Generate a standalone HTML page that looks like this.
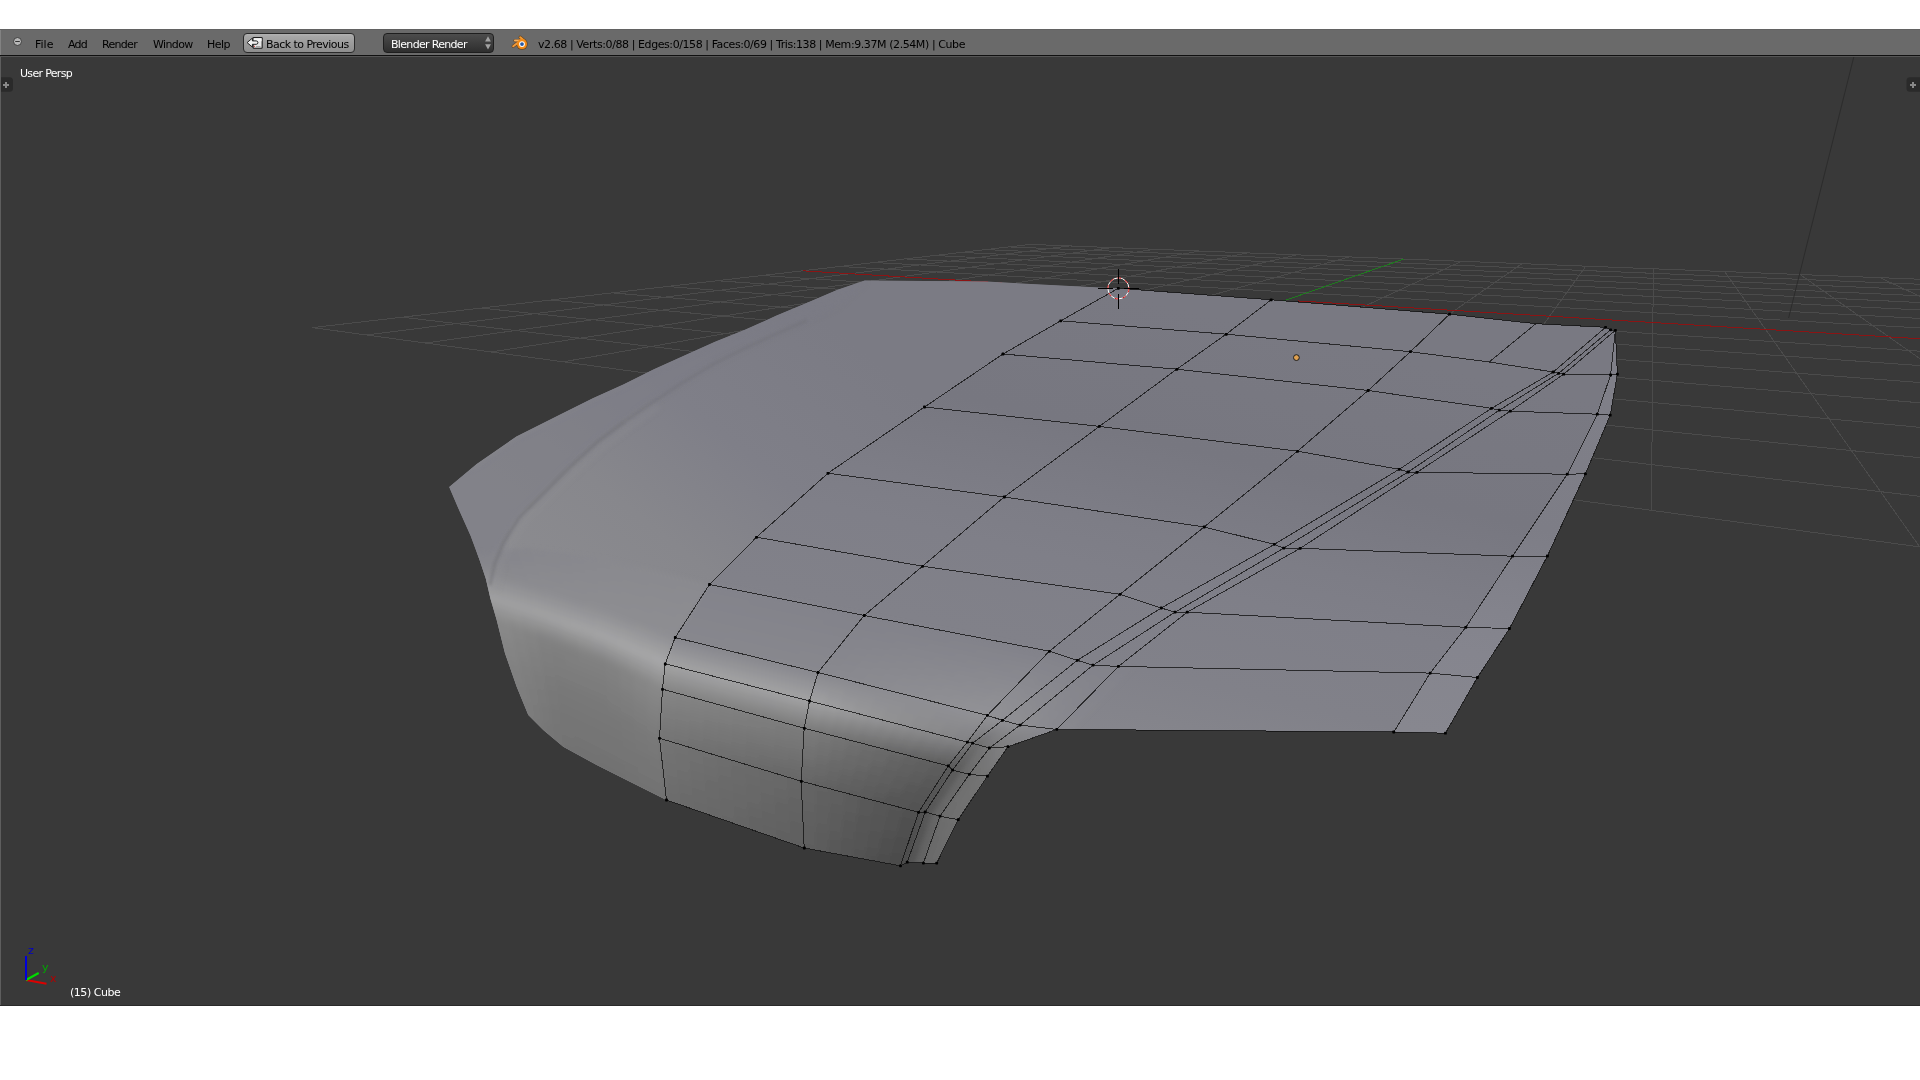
<!DOCTYPE html>
<html><head><meta charset="utf-8"><title>Blender</title>
<style>
html,body{margin:0;padding:0;background:#fff;}
body{width:1920px;height:1080px;position:relative;overflow:hidden;font-family:"DejaVu Sans","Liberation Sans",sans-serif;font-size:11px;}
#hdr{position:absolute;left:0;top:29px;width:1920px;height:26px;background:#6a6a6a;border-bottom:1px solid #101010;box-sizing:content-box}
#hdr .t{position:absolute;top:8.6px;will-change:transform;line-height:13px;color:#000;white-space:nowrap}
span.v{position:absolute;line-height:13px;color:#fff;white-space:nowrap;will-change:transform}
#hdr .btn{position:absolute;top:4px;height:17.5px;border:1px solid #2a2a2a;border-radius:4px;box-sizing:content-box}
</style></head><body>
<div id="hdr">
<div style="position:absolute;left:0;top:0;width:1px;height:26px;background:#828282"></div>
<svg width="16" height="16" style="position:absolute;left:10px;top:5px" viewBox="0 0 16 16"><circle cx="7.5" cy="7.5" r="4" fill="#b6b6b6" stroke="#3e3e3e" stroke-width="1"/><rect x="5.2" y="7" width="4.6" height="1" fill="#333"/></svg>
<div style="position:absolute;left:0;top:0;width:1920px;height:1px;background:#626262"></div>
<span class="t" style="left:35px">File</span>
<span class="t" style="left:68px;letter-spacing:-0.767px">Add</span>
<span class="t" style="left:102px;letter-spacing:-0.7px">Render</span>
<span class="t" style="left:153px;letter-spacing:-0.617px">Window</span>
<span class="t" style="left:207px;letter-spacing:-0.525px">Help</span>
<div class="btn" style="left:243px;width:110px;background:linear-gradient(#b2b2b2,#a6a6a6 15%,#8e8e8e)"></div>
<svg width="40" height="24" style="position:absolute;left:240px;top:2px" viewBox="0 0 40 24"><rect x="12.6" y="6.1" width="10.1" height="11.7" rx="1.2" fill="#1e1e1e"/><rect x="13.7" y="7.2" width="7.9" height="9.5" fill="#e6e6e6"/><rect x="13.7" y="7.2" width="7.9" height="3" fill="#f4f4f4"/><path d="M7.1 11.6 L12.4 7.1 V9.9 H16.2 A1.7 1.7 0 0 1 16.2 13.3 H12.4 V16.1 Z" fill="#f2f2f2" stroke="#1e1e1e" stroke-width="1" stroke-linejoin="round"/><rect x="13.9" y="14.8" width="1.1" height="1.1" fill="#e04040"/><rect x="16" y="15" width="4.5" height="0.8" fill="#9a9a9a"/></svg>
<span class="t" style="left:266px;letter-spacing:-0.537px">Back to Previous</span>
<div class="btn" style="left:383px;width:109px;background:linear-gradient(#4c4c4c,#2e2e2e);border-color:#1e1e1e"></div>
<span class="t" style="left:391px;color:#fff;letter-spacing:-0.679px">Blender Render</span>
<svg width="8" height="16" style="position:absolute;left:483.7px;top:6px" viewBox="0 0 8 16"><path d="M4 1.2l2.9 5.4h-5.8zM4 14.6l2.9-5.3h-5.8z" fill="#a2a2a2"/></svg>
<svg width="40" height="24" style="position:absolute;left:505px;top:2px" viewBox="0 0 40 24"><g stroke="#6a3a08" stroke-opacity="0.75" stroke-linecap="round" fill="none"><path d="M15.2 6.3L19.4 9.8" stroke-width="3.3"/><path d="M9.9 9.5H16.5" stroke-width="3"/><path d="M8.2 15.2L13.4 11.4" stroke-width="3.2"/></g><circle cx="17" cy="13.1" r="5.7" fill="#6a3a08" fill-opacity="0.75"/><g stroke-linecap="round" fill="none"><path d="M15.2 6.3L19.4 9.8" stroke="#f39a32" stroke-width="2"/><path d="M9.9 9.5H16.5" stroke="#f7b263" stroke-width="1.8"/><path d="M8.2 15.2L13.4 11.4" stroke="#f09a3c" stroke-width="2"/></g><circle cx="17" cy="13.1" r="5" fill="#f28a17"/><circle cx="17" cy="13.1" r="2.9" fill="#fff"/><circle cx="17" cy="13.1" r="1.9" fill="#2858a2"/></svg>
<span class="t" style="left:538px;letter-spacing:-0.418px">v2.68 | Verts:0/88 | Edges:0/158 | Faces:0/69 | Tris:138 | Mem:9.37M (2.54M) | Cube</span>
</div>
<svg width="1920" height="1080" viewBox="0 0 1920 1080" style="position:absolute;left:0;top:0">
<defs>
<clipPath id="vp"><rect x="1" y="57" width="1919" height="948"/></clipPath>
<clipPath id="sil"><path d="M1118.3 288.3 L1271.2 299.8 L1449.6 314.2 L1535.8 323.7 L1605.6 327.3 L1610.6 329.9 L1615.4 330.3 L1617.4 374.2 L1610.2 415.2 L1585.4 473.8 L1547.4 556.0 L1509.5 628.5 L1477.4 677.5 L1445.4 733.2 L1393.8 732.0 L1056.8 729.4 L1008.0 746.7 L987.4 776.2 L958.2 819.7 L936.7 863.1 L923.4 863.1 L907.2 862.2 L900.5 865.8 L804.2 848.0 L666.5 800.0 L630.0 781.7 L596.7 765.0 L563.3 746.7 L543.3 730.0 L528.3 715.0 L516.7 686.7 L505.0 653.3 L496.7 620.0 L490.4 598.4 L485.8 578.6 L479.7 560.3 L470.6 535.8 L458.3 508.3 L449.2 487.0 L476.7 464.0 L516.4 436.5 L562.2 413.6 L592.8 398.3 L623.3 384.6 L653.9 369.3 L684.4 355.5 L715.0 341.8 L745.5 329.6 L776.0 315.8 L806.6 303.0 L837.0 289.9 L864.7 280.4 L986.0 281.6 L1099.0 287.4 Z"/></clipPath>
<filter id="b2" filterUnits="userSpaceOnUse" x="300" y="150" width="1500" height="850"><feGaussianBlur stdDeviation="2"/></filter>
<filter id="b3" filterUnits="userSpaceOnUse" x="300" y="150" width="1500" height="850"><feGaussianBlur stdDeviation="3"/></filter>
<filter id="b6" filterUnits="userSpaceOnUse" x="300" y="150" width="1500" height="850"><feGaussianBlur stdDeviation="6"/></filter>
<filter id="b10" filterUnits="userSpaceOnUse" x="300" y="150" width="1500" height="850"><feGaussianBlur stdDeviation="10"/></filter>
<filter id="b16" filterUnits="userSpaceOnUse" x="300" y="150" width="1500" height="850"><feGaussianBlur stdDeviation="16"/></filter>
<filter id="b1" filterUnits="userSpaceOnUse" x="300" y="150" width="1500" height="850"><feGaussianBlur stdDeviation="1.2"/></filter>
<linearGradient id="hood" gradientUnits="userSpaceOnUse" x1="1100" y1="290" x2="1000" y2="730"><stop offset="0" stop-color="#797982"/><stop offset="0.3" stop-color="#777780"/><stop offset="0.5" stop-color="#7d7d86"/><stop offset="0.6" stop-color="#7f7f88"/><stop offset="0.8" stop-color="#818189"/><stop offset="1" stop-color="#87878d"/></linearGradient>
<linearGradient id="hoodm" gradientUnits="userSpaceOnUse" x1="800" y1="300" x2="560" y2="600"><stop offset="0" stop-color="#7b7b84"/><stop offset="0.4" stop-color="#7f7f88"/><stop offset="0.7" stop-color="#87878c"/><stop offset="1" stop-color="#8b8b8f"/></linearGradient>
</defs>
<rect x="0" y="56" width="1920" height="950" fill="#393939"/>
<g clip-path="url(#vp)">
<g stroke="#4b4b4b" stroke-width="1" fill="none" shape-rendering="crispEdges">
<line x1="312.5" y1="327.6" x2="1030.4" y2="244.4"/>
<line x1="312.5" y1="327.6" x2="3239.2" y2="727.0"/>
<line x1="366.3" y1="335.0" x2="1070.1" y2="245.9"/>
<line x1="402.5" y1="317.2" x2="2916.2" y2="613.9"/>
<line x1="425.5" y1="343.0" x2="1111.6" y2="247.6"/>
<line x1="481.2" y1="308.1" x2="2702.6" y2="539.1"/>
<line x1="490.8" y1="352.0" x2="1154.9" y2="249.2"/>
<line x1="550.6" y1="300.0" x2="2550.8" y2="486.0"/>
<line x1="563.2" y1="361.8" x2="1200.1" y2="251.0"/>
<line x1="612.3" y1="292.9" x2="2437.4" y2="446.3"/>
<line x1="644.1" y1="372.9" x2="1247.5" y2="252.9"/>
<line x1="667.4" y1="286.5" x2="2349.4" y2="415.5"/>
<line x1="734.9" y1="385.3" x2="1297.2" y2="254.8"/>
<line x1="717.0" y1="280.7" x2="2279.2" y2="390.9"/>
<line x1="837.6" y1="399.3" x2="1349.3" y2="256.9"/>
<line x1="761.8" y1="275.5" x2="2221.9" y2="370.9"/>
<line x1="1089.5" y1="433.7" x2="1461.5" y2="261.3"/>
<line x1="839.7" y1="266.5" x2="2133.9" y2="340.1"/>
<line x1="1246.3" y1="455.1" x2="1522.1" y2="263.6"/>
<line x1="873.8" y1="262.5" x2="2099.4" y2="328.0"/>
<line x1="1430.9" y1="480.2" x2="1585.9" y2="266.1"/>
<line x1="905.1" y1="258.9" x2="2069.5" y2="317.5"/>
<line x1="1651.5" y1="510.4" x2="1653.3" y2="268.8"/>
<line x1="934.0" y1="255.5" x2="2043.4" y2="308.4"/>
<line x1="1919.8" y1="547.0" x2="1724.6" y2="271.6"/>
<line x1="960.8" y1="252.4" x2="2020.4" y2="300.3"/>
<line x1="2253.1" y1="592.5" x2="1800.0" y2="274.5"/>
<line x1="985.6" y1="249.6" x2="1999.9" y2="293.2"/>
<line x1="2678.2" y1="650.5" x2="1880.1" y2="277.7"/>
<line x1="1008.8" y1="246.9" x2="1981.6" y2="286.8"/>
<line x1="3239.2" y1="727.0" x2="1965.2" y2="281.0"/>
<line x1="1030.4" y1="244.4" x2="1965.2" y2="281.0"/>
</g>
<line x1="954.7" y1="415.3" x2="1404.0" y2="259.0" stroke="#1f7a1f" stroke-width="1" shape-rendering="crispEdges"/>
<line x1="802.5" y1="270.8" x2="1002.4" y2="282.9" stroke="#8c1414" stroke-width="1" shape-rendering="crispEdges"/>
<line x1="1297.5" y1="300.9" x2="2174.2" y2="354.2" stroke="#8c1414" stroke-width="1" shape-rendering="crispEdges"/>
<line x1="1854" y1="56" x2="1788.6" y2="318" stroke="#2c2c2c" stroke-width="1"/>
<path d="M1118.3 288.3 L1271.2 299.8 L1449.6 314.2 L1535.8 323.7 L1605.6 327.3 L1610.6 329.9 L1615.4 330.3 L1617.4 374.2 L1610.2 415.2 L1585.4 473.8 L1547.4 556.0 L1509.5 628.5 L1477.4 677.5 L1445.4 733.2 L1393.8 732.0 L1056.8 729.4 L1008.0 746.7 L987.4 776.2 L958.2 819.7 L936.7 863.1 L923.4 863.1 L907.2 862.2 L900.5 865.8 L804.2 848.0 L666.5 800.0 L630.0 781.7 L596.7 765.0 L563.3 746.7 L543.3 730.0 L528.3 715.0 L516.7 686.7 L505.0 653.3 L496.7 620.0 L490.4 598.4 L485.8 578.6 L479.7 560.3 L470.6 535.8 L458.3 508.3 L449.2 487.0 L476.7 464.0 L516.4 436.5 L562.2 413.6 L592.8 398.3 L623.3 384.6 L653.9 369.3 L684.4 355.5 L715.0 341.8 L745.5 329.6 L776.0 315.8 L806.6 303.0 L837.0 289.9 L864.7 280.4 L986.0 281.6 L1099.0 287.4 Z" fill="url(#hood)"/>
<g clip-path="url(#sil)">
<polygon points="630.0,781.7 596.7,765.0 563.3,746.7 543.3,730.0 528.3,715.0 516.7,686.7 505.0,653.3 496.7,620.0 490.4,598.4 485.8,578.6 479.7,560.3 470.6,535.8 458.3,508.3 449.2,487.0 476.7,464.0 516.4,436.5 562.2,413.6 592.8,398.3 623.3,384.6 653.9,369.3 684.4,355.5 715.0,341.8 745.5,329.6 776.0,315.8 806.6,303.0 837.0,289.9 864.7,280.4 986.0,281.6 1099.0,287.4 1118.3,288.3 1060.7,320.8 1003.0,354.0 924.5,407.0 828.0,473.2 756.5,537.2 709.5,584.5 675.2,637.5 665.2,663.8 662.5,689.2 659.5,738.2 666.5,800.0" fill="url(#hoodm)"/>
<polygon points="1615.4,330.3 1610.6,375.0 1597.3,414.2 1567.3,474.2 1512.5,556.2 1465.8,627.3 1430.2,673.1 1393.8,732.0 1445.4,733.2 1477.4,677.5 1509.5,628.5 1547.4,556.0 1585.4,473.8 1610.2,415.2 1617.4,374.2" fill="#fff" opacity="0.05"/>
<polygon points="490.0,585.0 495.0,563.3 504.0,542.0 519.4,517.5 540.8,496.0 568.3,468.6 598.9,441.0 623.3,422.8 653.9,401.4 684.4,381.5 715.0,363.2 745.5,347.9 776.0,334.0 806.6,320.4 837.0,306.7 865.0,282.0 864.7,280.7 837.0,289.9 806.6,303.0 776.0,315.8 745.5,329.6 715.0,341.8 684.4,355.5 653.9,369.3 623.3,384.6 592.8,398.3 562.2,413.6 516.4,436.5 476.7,464.0 440.0,480.0 440.0,520.0 470.0,580.0" fill="#7c7c85" opacity="0.55" filter="url(#b3)"/>
<g filter="url(#b2)" stroke-width="0.8" shape-rendering="crispEdges">
<path d="M463.0 555.0L477.0 553.0L479.0 556.8L465.0 558.8Z" fill="#83838a"/>
<path d="M465.0 558.8L479.0 556.8L481.0 560.6L467.0 562.6Z" fill="#84848a"/>
<path d="M467.0 562.6L481.0 560.6L483.0 564.4L469.0 566.4Z" fill="#86868c"/>
<path d="M469.0 566.4L483.0 564.4L485.0 568.2L471.0 570.2Z" fill="#88888c"/>
<path d="M471.0 570.2L485.0 568.2L487.0 572.0L473.0 574.0Z" fill="#89898e"/>
<path d="M477.0 553.0L490.2 551.8L491.5 554.5L478.1 555.1Z" fill="#83838a"/>
<path d="M478.1 555.1L491.5 554.5L492.8 557.2L479.2 557.2Z" fill="#84848a"/>
<path d="M479.2 557.2L492.8 557.2L494.0 560.0L480.3 559.3Z" fill="#85858b"/>
<path d="M480.3 559.3L494.0 560.0L495.2 562.8L481.4 561.4Z" fill="#86868b"/>
<path d="M481.4 561.4L495.2 562.8L496.5 565.5L482.6 563.6Z" fill="#86868c"/>
<path d="M482.6 563.6L496.5 565.5L497.8 568.2L483.7 565.7Z" fill="#87878c"/>
<path d="M483.7 565.7L497.8 568.2L499.0 571.0L484.8 567.8Z" fill="#88888d"/>
<path d="M484.8 567.8L499.0 571.0L500.2 573.8L485.9 569.9Z" fill="#89898d"/>
<path d="M485.9 569.9L500.2 573.8L501.5 576.5L487.0 572.0Z" fill="#8a8a8e"/>
<path d="M490.2 551.8L503.5 550.5L504.9 553.9L491.5 554.5Z" fill="#84848a"/>
<path d="M491.5 554.5L504.9 553.9L506.3 557.3L492.8 557.2Z" fill="#85858b"/>
<path d="M492.8 557.2L506.3 557.3L507.7 560.7L494.0 560.0Z" fill="#86868b"/>
<path d="M494.0 560.0L507.7 560.7L509.1 564.1L495.2 562.8Z" fill="#86868c"/>
<path d="M495.2 562.8L509.1 564.1L510.4 567.4L496.5 565.5Z" fill="#87878c"/>
<path d="M496.5 565.5L510.4 567.4L511.8 570.8L497.8 568.2Z" fill="#88888d"/>
<path d="M497.8 568.2L511.8 570.8L513.2 574.2L499.0 571.0Z" fill="#89898d"/>
<path d="M499.0 571.0L513.2 574.2L514.6 577.6L500.2 573.8Z" fill="#8a8a8e"/>
<path d="M500.2 573.8L514.6 577.6L516.0 581.0L501.5 576.5Z" fill="#8a8a8e"/>
<path d="M503.5 550.5L516.8 549.2L518.3 553.3L504.9 553.9Z" fill="#85858b"/>
<path d="M504.9 553.9L518.3 553.3L519.8 557.3L506.3 557.3Z" fill="#86868c"/>
<path d="M506.3 557.3L519.8 557.3L521.3 561.3L507.7 560.7Z" fill="#86868c"/>
<path d="M507.7 560.7L521.3 561.3L522.9 565.4L509.1 564.1Z" fill="#87878d"/>
<path d="M509.1 564.1L522.9 565.4L524.4 569.4L510.4 567.4Z" fill="#88888d"/>
<path d="M510.4 567.4L524.4 569.4L525.9 573.4L511.8 570.8Z" fill="#89898e"/>
<path d="M511.8 570.8L525.9 573.4L527.4 577.4L513.2 574.2Z" fill="#89898e"/>
<path d="M513.2 574.2L527.4 577.4L529.0 581.5L514.6 577.6Z" fill="#8a8a8f"/>
<path d="M514.6 577.6L529.0 581.5L530.5 585.5L516.0 581.0Z" fill="#8b8b8f"/>
<path d="M516.8 549.2L530.0 548.0L531.7 552.7L518.3 553.3Z" fill="#86868c"/>
<path d="M518.3 553.3L531.7 552.7L533.3 557.3L519.8 557.3Z" fill="#87878c"/>
<path d="M519.8 557.3L533.3 557.3L535.0 562.0L521.3 561.3Z" fill="#87878d"/>
<path d="M521.3 561.3L535.0 562.0L536.7 566.7L522.9 565.4Z" fill="#88888d"/>
<path d="M522.9 565.4L536.7 566.7L538.3 571.3L524.4 569.4Z" fill="#89898e"/>
<path d="M524.4 569.4L538.3 571.3L540.0 576.0L525.9 573.4Z" fill="#89898e"/>
<path d="M525.9 573.4L540.0 576.0L541.7 580.7L527.4 577.4Z" fill="#8a8a8f"/>
<path d="M527.4 577.4L541.7 580.7L543.3 585.3L529.0 581.5Z" fill="#8b8b8f"/>
<path d="M529.0 581.5L543.3 585.3L545.0 590.0L530.5 585.5Z" fill="#8b8b90"/>
<path d="M530.0 548.0L543.3 550.0L544.5 554.0L531.4 551.8Z" fill="#87878c"/>
<path d="M531.4 551.8L544.5 554.0L545.6 557.9L532.7 555.6Z" fill="#87878d"/>
<path d="M532.7 555.6L545.6 557.9L546.7 561.9L534.1 559.5Z" fill="#88888d"/>
<path d="M534.1 559.5L546.7 561.9L547.9 565.8L535.5 563.3Z" fill="#88888d"/>
<path d="M535.5 563.3L547.9 565.8L549.0 569.8L536.8 567.1Z" fill="#89898e"/>
<path d="M536.8 567.1L549.0 569.8L550.2 573.7L538.2 570.9Z" fill="#89898e"/>
<path d="M538.2 570.9L550.2 573.7L551.3 577.7L539.5 574.7Z" fill="#8a8a8e"/>
<path d="M539.5 574.7L551.3 577.7L552.4 581.6L540.9 578.5Z" fill="#8a8a8f"/>
<path d="M540.9 578.5L552.4 581.6L553.6 585.6L542.3 582.4Z" fill="#8b8b8f"/>
<path d="M542.3 582.4L553.6 585.6L554.7 589.5L543.6 586.2Z" fill="#8b8b90"/>
<path d="M543.6 586.2L554.7 589.5L555.8 593.5L545.0 590.0Z" fill="#8c8c90"/>
<path d="M543.3 550.0L556.7 552.0L557.6 556.1L544.5 554.0Z" fill="#87878d"/>
<path d="M544.5 554.0L557.6 556.1L558.5 560.2L545.6 557.9Z" fill="#88888d"/>
<path d="M545.6 557.9L558.5 560.2L559.4 564.3L546.7 561.9Z" fill="#88888d"/>
<path d="M546.7 561.9L559.4 564.3L560.3 568.4L547.9 565.8Z" fill="#88888e"/>
<path d="M547.9 565.8L560.3 568.4L561.2 572.5L549.0 569.8Z" fill="#89898e"/>
<path d="M549.0 569.8L561.2 572.5L562.1 576.5L550.2 573.7Z" fill="#8a8a8e"/>
<path d="M550.2 573.7L562.1 576.5L563.0 580.6L551.3 577.7Z" fill="#8a8a8f"/>
<path d="M551.3 577.7L563.0 580.6L563.9 584.7L552.4 581.6Z" fill="#8a8a8f"/>
<path d="M552.4 581.6L563.9 584.7L564.8 588.8L553.6 585.6Z" fill="#8b8b8f"/>
<path d="M553.6 585.6L564.8 588.8L565.8 592.9L554.7 589.5Z" fill="#8c8c90"/>
<path d="M554.7 589.5L565.8 592.9L566.7 597.0L555.8 593.5Z" fill="#8c8c90"/>
<path d="M556.7 552.0L570.0 554.0L570.7 558.2L557.6 556.1Z" fill="#87878d"/>
<path d="M557.6 556.1L570.7 558.2L571.4 562.5L558.5 560.2Z" fill="#88888d"/>
<path d="M558.5 560.2L571.4 562.5L572.0 566.7L559.4 564.3Z" fill="#88888e"/>
<path d="M559.4 564.3L572.0 566.7L572.7 570.9L560.3 568.4Z" fill="#89898e"/>
<path d="M560.3 568.4L572.7 570.9L573.4 575.1L561.2 572.5Z" fill="#89898e"/>
<path d="M561.2 572.5L573.4 575.1L574.1 579.4L562.1 576.5Z" fill="#8a8a8f"/>
<path d="M562.1 576.5L574.1 579.4L574.8 583.6L563.0 580.6Z" fill="#8a8a8f"/>
<path d="M563.0 580.6L574.8 583.6L575.5 587.8L563.9 584.7Z" fill="#8b8b8f"/>
<path d="M563.9 584.7L575.5 587.8L576.1 592.0L564.8 588.8Z" fill="#8b8b90"/>
<path d="M564.8 588.8L576.1 592.0L576.8 596.3L565.8 592.9Z" fill="#8c8c90"/>
<path d="M565.8 592.9L576.8 596.3L577.5 600.5L566.7 597.0Z" fill="#8c8c90"/>
<path d="M570.0 554.0L583.3 556.0L583.8 560.4L570.7 558.2Z" fill="#88888d"/>
<path d="M570.7 558.2L583.8 560.4L584.2 564.7L571.4 562.5Z" fill="#88888e"/>
<path d="M571.4 562.5L584.2 564.7L584.7 569.1L572.0 566.7Z" fill="#89898e"/>
<path d="M572.0 566.7L584.7 569.1L585.2 573.5L572.7 570.9Z" fill="#89898e"/>
<path d="M572.7 570.9L585.2 573.5L585.6 577.8L573.4 575.1Z" fill="#8a8a8f"/>
<path d="M573.4 575.1L585.6 577.8L586.1 582.2L574.1 579.4Z" fill="#8a8a8f"/>
<path d="M574.1 579.4L586.1 582.2L586.5 586.5L574.8 583.6Z" fill="#8b8b8f"/>
<path d="M574.8 583.6L586.5 586.5L587.0 590.9L575.5 587.8Z" fill="#8b8b8f"/>
<path d="M575.5 587.8L587.0 590.9L587.4 595.3L576.1 592.0Z" fill="#8b8b90"/>
<path d="M576.1 592.0L587.4 595.3L587.9 599.6L576.8 596.3Z" fill="#8c8c90"/>
<path d="M576.8 596.3L587.9 599.6L588.3 604.0L577.5 600.5Z" fill="#8c8c90"/>
<path d="M583.3 556.0L596.7 558.0L596.9 562.5L583.8 560.4Z" fill="#88888e"/>
<path d="M583.8 560.4L596.9 562.5L597.1 567.0L584.2 564.7Z" fill="#89898e"/>
<path d="M584.2 564.7L597.1 567.0L597.3 571.5L584.7 569.1Z" fill="#89898e"/>
<path d="M584.7 569.1L597.3 571.5L597.6 576.0L585.2 573.5Z" fill="#8a8a8f"/>
<path d="M585.2 573.5L597.6 576.0L597.8 580.5L585.6 577.8Z" fill="#8a8a8f"/>
<path d="M585.6 577.8L597.8 580.5L598.0 585.0L586.1 582.2Z" fill="#8a8a8f"/>
<path d="M586.1 582.2L598.0 585.0L598.3 589.5L586.5 586.5Z" fill="#8b8b8f"/>
<path d="M586.5 586.5L598.3 589.5L598.5 594.0L587.0 590.9Z" fill="#8b8b90"/>
<path d="M587.0 590.9L598.5 594.0L598.7 598.5L587.4 595.3Z" fill="#8c8c90"/>
<path d="M587.4 595.3L598.7 598.5L598.9 603.0L587.9 599.6Z" fill="#8c8c90"/>
<path d="M587.9 599.6L598.9 603.0L599.2 607.5L588.3 604.0Z" fill="#8d8d91"/>
<path d="M596.7 558.0L610.0 560.0L610.0 564.6L596.9 562.5Z" fill="#89898e"/>
<path d="M596.9 562.5L610.0 564.6L610.0 569.3L597.1 567.0Z" fill="#89898e"/>
<path d="M597.1 567.0L610.0 569.3L610.0 573.9L597.3 571.5Z" fill="#8a8a8f"/>
<path d="M597.3 571.5L610.0 573.9L610.0 578.5L597.6 576.0Z" fill="#8a8a8f"/>
<path d="M597.6 576.0L610.0 578.5L610.0 583.2L597.8 580.5Z" fill="#8a8a8f"/>
<path d="M597.8 580.5L610.0 583.2L610.0 587.8L598.0 585.0Z" fill="#8b8b8f"/>
<path d="M598.0 585.0L610.0 587.8L610.0 592.5L598.3 589.5Z" fill="#8b8b90"/>
<path d="M598.3 589.5L610.0 592.5L610.0 597.1L598.5 594.0Z" fill="#8c8c90"/>
<path d="M598.5 594.0L610.0 597.1L610.0 601.7L598.7 598.5Z" fill="#8c8c90"/>
<path d="M598.7 598.5L610.0 601.7L610.0 606.4L598.9 603.0Z" fill="#8c8c90"/>
<path d="M598.9 603.0L610.0 606.4L610.0 611.0L599.2 607.5Z" fill="#8d8d91"/>
<path d="M610.0 560.0L624.2 563.5L623.8 567.4L610.0 563.9Z" fill="#89898e"/>
<path d="M610.0 563.9L623.8 567.4L623.5 571.4L610.0 567.8Z" fill="#8a8a8e"/>
<path d="M610.0 567.8L623.5 571.4L623.1 575.3L610.0 571.8Z" fill="#8a8a8f"/>
<path d="M610.0 571.8L623.1 575.3L622.7 579.3L610.0 575.7Z" fill="#8a8a8f"/>
<path d="M610.0 575.7L622.7 579.3L622.3 583.2L610.0 579.6Z" fill="#8a8a8f"/>
<path d="M610.0 579.6L622.3 583.2L622.0 587.2L610.0 583.5Z" fill="#8b8b8f"/>
<path d="M610.0 583.5L622.0 587.2L621.6 591.1L610.0 587.5Z" fill="#8b8b90"/>
<path d="M610.0 587.5L621.6 591.1L621.2 595.1L610.0 591.4Z" fill="#8b8b90"/>
<path d="M610.0 591.4L621.2 595.1L620.8 599.0L610.0 595.3Z" fill="#8c8c90"/>
<path d="M610.0 595.3L620.8 599.0L620.5 603.0L610.0 599.2Z" fill="#8c8c90"/>
<path d="M610.0 599.2L620.5 603.0L620.1 606.9L610.0 603.2Z" fill="#8c8c90"/>
<path d="M610.0 603.2L620.1 606.9L619.7 610.8L610.0 607.1Z" fill="#8d8d91"/>
<path d="M610.0 607.1L619.7 610.8L619.3 614.8L610.0 611.0Z" fill="#8d8d91"/>
<path d="M624.2 563.5L638.4 567.0L637.7 571.0L623.8 567.4Z" fill="#89898e"/>
<path d="M623.8 567.4L637.7 571.0L636.9 574.9L623.5 571.4Z" fill="#8a8a8f"/>
<path d="M623.5 571.4L636.9 574.9L636.2 578.9L623.1 575.3Z" fill="#8a8a8f"/>
<path d="M623.1 575.3L636.2 578.9L635.4 582.9L622.7 579.3Z" fill="#8a8a8f"/>
<path d="M622.7 579.3L635.4 582.9L634.7 586.8L622.3 583.2Z" fill="#8b8b8f"/>
<path d="M622.3 583.2L634.7 586.8L633.9 590.8L622.0 587.2Z" fill="#8b8b8f"/>
<path d="M622.0 587.2L633.9 590.8L633.2 594.8L621.6 591.1Z" fill="#8b8b90"/>
<path d="M621.6 591.1L633.2 594.8L632.4 598.7L621.2 595.1Z" fill="#8c8c90"/>
<path d="M621.2 595.1L632.4 598.7L631.7 602.7L620.8 599.0Z" fill="#8c8c90"/>
<path d="M620.8 599.0L631.7 602.7L630.9 606.7L620.5 603.0Z" fill="#8c8c90"/>
<path d="M620.5 603.0L630.9 606.7L630.1 610.6L620.1 606.9Z" fill="#8c8c91"/>
<path d="M620.1 606.9L630.1 610.6L629.4 614.6L619.7 610.8Z" fill="#8d8d91"/>
<path d="M619.7 610.8L629.4 614.6L628.6 618.6L619.3 614.8Z" fill="#8d8d91"/>
<path d="M638.4 567.0L652.6 570.5L651.5 574.5L637.7 571.0Z" fill="#8a8a8e"/>
<path d="M637.7 571.0L651.5 574.5L650.4 578.5L636.9 574.9Z" fill="#8a8a8f"/>
<path d="M636.9 574.9L650.4 578.5L649.3 582.5L636.2 578.9Z" fill="#8a8a8f"/>
<path d="M636.2 578.9L649.3 582.5L648.1 586.5L635.4 582.9Z" fill="#8a8a8f"/>
<path d="M635.4 582.9L648.1 586.5L647.0 590.4L634.7 586.8Z" fill="#8b8b8f"/>
<path d="M634.7 586.8L647.0 590.4L645.9 594.4L633.9 590.8Z" fill="#8b8b90"/>
<path d="M633.9 590.8L645.9 594.4L644.7 598.4L633.2 594.8Z" fill="#8b8b90"/>
<path d="M633.2 594.8L644.7 598.4L643.6 602.4L632.4 598.7Z" fill="#8c8c90"/>
<path d="M632.4 598.7L643.6 602.4L642.5 606.4L631.7 602.7Z" fill="#8c8c90"/>
<path d="M631.7 602.7L642.5 606.4L641.4 610.4L630.9 606.7Z" fill="#8c8c91"/>
<path d="M630.9 606.7L641.4 610.4L640.2 614.4L630.1 610.6Z" fill="#8d8d91"/>
<path d="M630.1 610.6L640.2 614.4L639.1 618.4L629.4 614.6Z" fill="#8d8d91"/>
<path d="M629.4 614.6L639.1 618.4L638.0 622.4L628.6 618.6Z" fill="#8d8d91"/>
<path d="M652.6 570.5L666.9 574.0L665.4 578.0L651.5 574.5Z" fill="#8a8a8f"/>
<path d="M651.5 574.5L665.4 578.0L663.8 582.0L650.4 578.5Z" fill="#8a8a8f"/>
<path d="M650.4 578.5L663.8 582.0L662.3 586.0L649.3 582.5Z" fill="#8a8a8f"/>
<path d="M649.3 582.5L662.3 586.0L660.8 590.0L648.1 586.5Z" fill="#8b8b8f"/>
<path d="M648.1 586.5L660.8 590.0L659.3 594.1L647.0 590.4Z" fill="#8b8b90"/>
<path d="M647.0 590.4L659.3 594.1L657.8 598.1L645.9 594.4Z" fill="#8b8b90"/>
<path d="M645.9 594.4L657.8 598.1L656.3 602.1L644.7 598.4Z" fill="#8c8c90"/>
<path d="M644.7 598.4L656.3 602.1L654.8 606.1L643.6 602.4Z" fill="#8c8c90"/>
<path d="M643.6 602.4L654.8 606.1L653.3 610.1L642.5 606.4Z" fill="#8c8c90"/>
<path d="M642.5 606.4L653.3 610.1L651.8 614.1L641.4 610.4Z" fill="#8c8c91"/>
<path d="M641.4 610.4L651.8 614.1L650.3 618.1L640.2 614.4Z" fill="#8d8d91"/>
<path d="M640.2 614.4L650.3 618.1L648.8 622.1L639.1 618.4Z" fill="#8d8d91"/>
<path d="M639.1 618.4L648.8 622.1L647.3 626.1L638.0 622.4Z" fill="#8d8d91"/>
<path d="M666.9 574.0L681.1 577.5L679.2 581.5L665.4 578.0Z" fill="#8a8a8f"/>
<path d="M665.4 578.0L679.2 581.5L677.3 585.6L663.8 582.0Z" fill="#8a8a8f"/>
<path d="M663.8 582.0L677.3 585.6L675.4 589.6L662.3 586.0Z" fill="#8a8a8f"/>
<path d="M662.3 586.0L675.4 589.6L673.5 593.6L660.8 590.0Z" fill="#8b8b8f"/>
<path d="M660.8 590.0L673.5 593.6L671.7 597.7L659.3 594.1Z" fill="#8b8b90"/>
<path d="M659.3 594.1L671.7 597.7L669.8 601.7L657.8 598.1Z" fill="#8b8b90"/>
<path d="M657.8 598.1L669.8 601.7L667.9 605.7L656.3 602.1Z" fill="#8c8c90"/>
<path d="M656.3 602.1L667.9 605.7L666.0 609.8L654.8 606.1Z" fill="#8c8c90"/>
<path d="M654.8 606.1L666.0 609.8L664.1 613.8L653.3 610.1Z" fill="#8c8c91"/>
<path d="M653.3 610.1L664.1 613.8L662.3 617.8L651.8 614.1Z" fill="#8d8d91"/>
<path d="M651.8 614.1L662.3 617.8L660.4 621.9L650.3 618.1Z" fill="#8d8d91"/>
<path d="M650.3 618.1L660.4 621.9L658.5 625.9L648.8 622.1Z" fill="#8d8d91"/>
<path d="M648.8 622.1L658.5 625.9L656.6 629.9L647.3 626.1Z" fill="#8d8d92"/>
<path d="M681.1 577.5L695.3 581.0L693.0 585.1L679.2 581.5Z" fill="#8a8a8f"/>
<path d="M679.2 581.5L693.0 585.1L690.8 589.1L677.3 585.6Z" fill="#8a8a8f"/>
<path d="M677.3 585.6L690.8 589.1L688.5 593.2L675.4 589.6Z" fill="#8b8b8f"/>
<path d="M675.4 589.6L688.5 593.2L686.3 597.2L673.5 593.6Z" fill="#8b8b90"/>
<path d="M673.5 593.6L686.3 597.2L684.0 601.3L671.7 597.7Z" fill="#8b8b90"/>
<path d="M671.7 597.7L684.0 601.3L681.7 605.3L669.8 601.7Z" fill="#8b8b90"/>
<path d="M669.8 601.7L681.7 605.3L679.5 609.4L667.9 605.7Z" fill="#8c8c90"/>
<path d="M667.9 605.7L679.5 609.4L677.2 613.4L666.0 609.8Z" fill="#8c8c91"/>
<path d="M666.0 609.8L677.2 613.4L675.0 617.5L664.1 613.8Z" fill="#8c8c91"/>
<path d="M664.1 613.8L675.0 617.5L672.7 621.5L662.3 617.8Z" fill="#8d8d91"/>
<path d="M662.3 617.8L672.7 621.5L670.4 625.6L660.4 621.9Z" fill="#8d8d91"/>
<path d="M660.4 621.9L670.4 625.6L668.2 629.7L658.5 625.9Z" fill="#8d8d91"/>
<path d="M658.5 625.9L668.2 629.7L665.9 633.7L656.6 629.9Z" fill="#8e8e92"/>
<path d="M695.3 581.0L709.5 584.5L706.9 588.6L693.0 585.1Z" fill="#8a8a8f"/>
<path d="M693.0 585.1L706.9 588.6L704.2 592.7L690.8 589.1Z" fill="#8a8a8f"/>
<path d="M690.8 589.1L704.2 592.7L701.6 596.7L688.5 593.2Z" fill="#8b8b90"/>
<path d="M688.5 593.2L701.6 596.7L699.0 600.8L686.3 597.2Z" fill="#8b8b90"/>
<path d="M686.3 597.2L699.0 600.8L696.3 604.9L684.0 601.3Z" fill="#8b8b90"/>
<path d="M684.0 601.3L696.3 604.9L693.7 609.0L681.7 605.3Z" fill="#8c8c90"/>
<path d="M681.7 605.3L693.7 609.0L691.1 613.0L679.5 609.4Z" fill="#8c8c90"/>
<path d="M679.5 609.4L691.1 613.0L688.4 617.1L677.2 613.4Z" fill="#8c8c91"/>
<path d="M677.2 613.4L688.4 617.1L685.8 621.2L675.0 617.5Z" fill="#8d8d91"/>
<path d="M675.0 617.5L685.8 621.2L683.2 625.3L672.7 621.5Z" fill="#8d8d91"/>
<path d="M672.7 621.5L683.2 625.3L680.5 629.3L670.4 625.6Z" fill="#8d8d91"/>
<path d="M670.4 625.6L680.5 629.3L677.9 633.4L668.2 629.7Z" fill="#8d8d92"/>
<path d="M668.2 629.7L677.9 633.4L675.2 637.5L665.9 633.7Z" fill="#8e8e92"/>
<path d="M709.5 584.5L725.0 587.6L722.6 591.2L707.2 588.0Z" fill="#83838b"/>
<path d="M707.2 588.0L722.6 591.2L720.2 594.7L704.9 591.6Z" fill="#83838b"/>
<path d="M704.9 591.6L720.2 594.7L717.9 598.3L702.6 595.1Z" fill="#84848b"/>
<path d="M702.6 595.1L717.9 598.3L715.5 601.8L700.4 598.6Z" fill="#84848b"/>
<path d="M700.4 598.6L715.5 601.8L713.2 605.4L698.1 602.2Z" fill="#84848c"/>
<path d="M698.1 602.2L713.2 605.4L710.8 609.0L695.8 605.7Z" fill="#84848c"/>
<path d="M695.8 605.7L710.8 609.0L708.4 612.5L693.5 609.2Z" fill="#85858c"/>
<path d="M693.5 609.2L708.4 612.5L706.1 616.1L691.2 612.8Z" fill="#85858c"/>
<path d="M691.2 612.8L706.1 616.1L703.7 619.6L689.0 616.3Z" fill="#85858c"/>
<path d="M689.0 616.3L703.7 619.6L701.3 623.2L686.7 619.8Z" fill="#86868c"/>
<path d="M686.7 619.8L701.3 623.2L699.0 626.8L684.4 623.4Z" fill="#86868c"/>
<path d="M684.4 623.4L699.0 626.8L696.6 630.3L682.1 626.9Z" fill="#86868d"/>
<path d="M682.1 626.9L696.6 630.3L694.3 633.9L679.8 630.4Z" fill="#86868d"/>
<path d="M679.8 630.4L694.3 633.9L691.9 637.4L677.5 634.0Z" fill="#87878d"/>
<path d="M677.5 634.0L691.9 637.4L689.5 641.0L675.2 637.5Z" fill="#87878d"/>
<path d="M725.0 587.6L740.5 590.7L738.0 594.3L722.6 591.2Z" fill="#83838b"/>
<path d="M722.6 591.2L738.0 594.3L735.6 597.9L720.2 594.7Z" fill="#83838b"/>
<path d="M720.2 594.7L735.6 597.9L733.1 601.5L717.9 598.3Z" fill="#84848b"/>
<path d="M717.9 598.3L733.1 601.5L730.7 605.0L715.5 601.8Z" fill="#84848b"/>
<path d="M715.5 601.8L730.7 605.0L728.2 608.6L713.2 605.4Z" fill="#84848c"/>
<path d="M713.2 605.4L728.2 608.6L725.8 612.2L710.8 609.0Z" fill="#84848c"/>
<path d="M710.8 609.0L725.8 612.2L723.3 615.8L708.4 612.5Z" fill="#85858c"/>
<path d="M708.4 612.5L723.3 615.8L720.9 619.4L706.1 616.1Z" fill="#85858c"/>
<path d="M706.1 616.1L720.9 619.4L718.5 623.0L703.7 619.6Z" fill="#85858c"/>
<path d="M703.7 619.6L718.5 623.0L716.0 626.6L701.3 623.2Z" fill="#86868c"/>
<path d="M701.3 623.2L716.0 626.6L713.6 630.2L699.0 626.8Z" fill="#86868c"/>
<path d="M699.0 626.8L713.6 630.2L711.1 633.7L696.6 630.3Z" fill="#86868d"/>
<path d="M696.6 630.3L711.1 633.7L708.7 637.3L694.3 633.9Z" fill="#86868d"/>
<path d="M694.3 633.9L708.7 637.3L706.2 640.9L691.9 637.4Z" fill="#87878d"/>
<path d="M691.9 637.4L706.2 640.9L703.8 644.5L689.5 641.0Z" fill="#87878d"/>
<path d="M740.5 590.7L755.9 593.8L753.4 597.4L738.0 594.3Z" fill="#83838b"/>
<path d="M738.0 594.3L753.4 597.4L750.9 601.0L735.6 597.9Z" fill="#83838b"/>
<path d="M735.6 597.9L750.9 601.0L748.4 604.6L733.1 601.5Z" fill="#84848b"/>
<path d="M733.1 601.5L748.4 604.6L745.8 608.3L730.7 605.0Z" fill="#84848b"/>
<path d="M730.7 605.0L745.8 608.3L743.3 611.9L728.2 608.6Z" fill="#84848c"/>
<path d="M728.2 608.6L743.3 611.9L740.8 615.5L725.8 612.2Z" fill="#84848c"/>
<path d="M725.8 612.2L740.8 615.5L738.3 619.1L723.3 615.8Z" fill="#85858c"/>
<path d="M723.3 615.8L738.3 619.1L735.7 622.7L720.9 619.4Z" fill="#85858c"/>
<path d="M720.9 619.4L735.7 622.7L733.2 626.3L718.5 623.0Z" fill="#85858c"/>
<path d="M718.5 623.0L733.2 626.3L730.7 629.9L716.0 626.6Z" fill="#86868c"/>
<path d="M716.0 626.6L730.7 629.9L728.2 633.5L713.6 630.2Z" fill="#86868c"/>
<path d="M713.6 630.2L728.2 633.5L725.6 637.2L711.1 633.7Z" fill="#86868d"/>
<path d="M711.1 633.7L725.6 637.2L723.1 640.8L708.7 637.3Z" fill="#86868d"/>
<path d="M708.7 637.3L723.1 640.8L720.6 644.4L706.2 640.9Z" fill="#87878d"/>
<path d="M706.2 640.9L720.6 644.4L718.1 648.0L703.8 644.5Z" fill="#87878d"/>
<path d="M755.9 593.8L771.4 596.9L768.8 600.5L753.4 597.4Z" fill="#83838b"/>
<path d="M753.4 597.4L768.8 600.5L766.2 604.2L750.9 601.0Z" fill="#83838b"/>
<path d="M750.9 601.0L766.2 604.2L763.6 607.8L748.4 604.6Z" fill="#83838b"/>
<path d="M748.4 604.6L763.6 607.8L761.0 611.5L745.8 608.3Z" fill="#84848b"/>
<path d="M745.8 608.3L761.0 611.5L758.4 615.1L743.3 611.9Z" fill="#84848b"/>
<path d="M743.3 611.9L758.4 615.1L755.8 618.7L740.8 615.5Z" fill="#84848c"/>
<path d="M740.8 615.5L755.8 618.7L753.2 622.4L738.3 619.1Z" fill="#85858c"/>
<path d="M738.3 619.1L753.2 622.4L750.6 626.0L735.7 622.7Z" fill="#85858c"/>
<path d="M735.7 622.7L750.6 626.0L748.0 629.7L733.2 626.3Z" fill="#85858c"/>
<path d="M733.2 626.3L748.0 629.7L745.4 633.3L730.7 629.9Z" fill="#86868c"/>
<path d="M730.7 629.9L745.4 633.3L742.8 636.9L728.2 633.5Z" fill="#86868d"/>
<path d="M728.2 633.5L742.8 636.9L740.2 640.6L725.6 637.2Z" fill="#86868d"/>
<path d="M725.6 637.2L740.2 640.6L737.6 644.2L723.1 640.8Z" fill="#87878d"/>
<path d="M723.1 640.8L737.6 644.2L735.0 647.9L720.6 644.4Z" fill="#87878d"/>
<path d="M720.6 644.4L735.0 647.9L732.4 651.5L718.1 648.0Z" fill="#87878d"/>
<path d="M771.4 596.9L786.9 600.0L784.2 603.7L768.8 600.5Z" fill="#83838b"/>
<path d="M768.8 600.5L784.2 603.7L781.5 607.3L766.2 604.2Z" fill="#83838b"/>
<path d="M766.2 604.2L781.5 607.3L778.8 611.0L763.6 607.8Z" fill="#83838b"/>
<path d="M763.6 607.8L778.8 611.0L776.1 614.7L761.0 611.5Z" fill="#84848b"/>
<path d="M761.0 611.5L776.1 614.7L773.5 618.3L758.4 615.1Z" fill="#84848b"/>
<path d="M758.4 615.1L773.5 618.3L770.8 622.0L755.8 618.7Z" fill="#84848c"/>
<path d="M755.8 618.7L770.8 622.0L768.1 625.7L753.2 622.4Z" fill="#85858c"/>
<path d="M753.2 622.4L768.1 625.7L765.4 629.3L750.6 626.0Z" fill="#85858c"/>
<path d="M750.6 626.0L765.4 629.3L762.7 633.0L748.0 629.7Z" fill="#85858c"/>
<path d="M748.0 629.7L762.7 633.0L760.0 636.7L745.4 633.3Z" fill="#86868c"/>
<path d="M745.4 633.3L760.0 636.7L757.4 640.3L742.8 636.9Z" fill="#86868d"/>
<path d="M742.8 636.9L757.4 640.3L754.7 644.0L740.2 640.6Z" fill="#86868d"/>
<path d="M740.2 640.6L754.7 644.0L752.0 647.7L737.6 644.2Z" fill="#87878d"/>
<path d="M737.6 644.2L752.0 647.7L749.3 651.3L735.0 647.9Z" fill="#87878d"/>
<path d="M735.0 647.9L749.3 651.3L746.6 655.0L732.4 651.5Z" fill="#87878d"/>
<path d="M786.9 600.0L802.4 603.1L799.6 606.8L784.2 603.7Z" fill="#83838b"/>
<path d="M784.2 603.7L799.6 606.8L796.8 610.5L781.5 607.3Z" fill="#83838b"/>
<path d="M781.5 607.3L796.8 610.5L794.1 614.2L778.8 611.0Z" fill="#83838b"/>
<path d="M778.8 611.0L794.1 614.2L791.3 617.9L776.1 614.7Z" fill="#84848b"/>
<path d="M776.1 614.7L791.3 617.9L788.5 621.6L773.5 618.3Z" fill="#84848b"/>
<path d="M773.5 618.3L788.5 621.6L785.8 625.3L770.8 622.0Z" fill="#84848c"/>
<path d="M770.8 622.0L785.8 625.3L783.0 629.0L768.1 625.7Z" fill="#85858c"/>
<path d="M768.1 625.7L783.0 629.0L780.2 632.6L765.4 629.3Z" fill="#85858c"/>
<path d="M765.4 629.3L780.2 632.6L777.5 636.3L762.7 633.0Z" fill="#85858c"/>
<path d="M762.7 633.0L777.5 636.3L774.7 640.0L760.0 636.7Z" fill="#86868c"/>
<path d="M760.0 636.7L774.7 640.0L772.0 643.7L757.4 640.3Z" fill="#86868d"/>
<path d="M757.4 640.3L772.0 643.7L769.2 647.4L754.7 644.0Z" fill="#86868d"/>
<path d="M754.7 644.0L769.2 647.4L766.4 651.1L752.0 647.7Z" fill="#87878d"/>
<path d="M752.0 647.7L766.4 651.1L763.7 654.8L749.3 651.3Z" fill="#87878d"/>
<path d="M749.3 651.3L763.7 654.8L760.9 658.5L746.6 655.0Z" fill="#87878d"/>
<path d="M802.4 603.1L817.8 606.2L815.0 609.9L799.6 606.8Z" fill="#83838a"/>
<path d="M799.6 606.8L815.0 609.9L812.1 613.6L796.8 610.5Z" fill="#83838b"/>
<path d="M796.8 610.5L812.1 613.6L809.3 617.4L794.1 614.2Z" fill="#83838b"/>
<path d="M794.1 614.2L809.3 617.4L806.5 621.1L791.3 617.9Z" fill="#84848b"/>
<path d="M791.3 617.9L806.5 621.1L803.6 624.8L788.5 621.6Z" fill="#84848b"/>
<path d="M788.5 621.6L803.6 624.8L800.8 628.5L785.8 625.3Z" fill="#84848c"/>
<path d="M785.8 625.3L800.8 628.5L797.9 632.2L783.0 629.0Z" fill="#85858c"/>
<path d="M783.0 629.0L797.9 632.2L795.1 636.0L780.2 632.6Z" fill="#85858c"/>
<path d="M780.2 632.6L795.1 636.0L792.2 639.7L777.5 636.3Z" fill="#85858c"/>
<path d="M777.5 636.3L792.2 639.7L789.4 643.4L774.7 640.0Z" fill="#86868c"/>
<path d="M774.7 640.0L789.4 643.4L786.5 647.1L772.0 643.7Z" fill="#86868d"/>
<path d="M772.0 643.7L786.5 647.1L783.7 650.8L769.2 647.4Z" fill="#86868d"/>
<path d="M769.2 647.4L783.7 650.8L780.9 654.6L766.4 651.1Z" fill="#87878d"/>
<path d="M766.4 651.1L780.9 654.6L778.0 658.3L763.7 654.8Z" fill="#87878d"/>
<path d="M763.7 654.8L778.0 658.3L775.2 662.0L760.9 658.5Z" fill="#87878e"/>
<path d="M817.8 606.2L833.3 609.3L830.4 613.0L815.0 609.9Z" fill="#82828a"/>
<path d="M815.0 609.9L830.4 613.0L827.5 616.8L812.1 613.6Z" fill="#83838b"/>
<path d="M812.1 613.6L827.5 616.8L824.5 620.5L809.3 617.4Z" fill="#83838b"/>
<path d="M809.3 617.4L824.5 620.5L821.6 624.3L806.5 621.1Z" fill="#84848b"/>
<path d="M806.5 621.1L821.6 624.3L818.7 628.0L803.6 624.8Z" fill="#84848b"/>
<path d="M803.6 624.8L818.7 628.0L815.8 631.8L800.8 628.5Z" fill="#84848c"/>
<path d="M800.8 628.5L815.8 631.8L812.8 635.5L797.9 632.2Z" fill="#85858c"/>
<path d="M797.9 632.2L812.8 635.5L809.9 639.3L795.1 636.0Z" fill="#85858c"/>
<path d="M795.1 636.0L809.9 639.3L807.0 643.0L792.2 639.7Z" fill="#85858c"/>
<path d="M792.2 639.7L807.0 643.0L804.1 646.8L789.4 643.4Z" fill="#86868c"/>
<path d="M789.4 643.4L804.1 646.8L801.1 650.5L786.5 647.1Z" fill="#86868d"/>
<path d="M786.5 647.1L801.1 650.5L798.2 654.3L783.7 650.8Z" fill="#86868d"/>
<path d="M783.7 650.8L798.2 654.3L795.3 658.0L780.9 654.6Z" fill="#87878d"/>
<path d="M780.9 654.6L795.3 658.0L792.4 661.8L778.0 658.3Z" fill="#87878d"/>
<path d="M778.0 658.3L792.4 661.8L789.5 665.5L775.2 662.0Z" fill="#88888e"/>
<path d="M833.3 609.3L848.8 612.4L845.8 616.2L830.4 613.0Z" fill="#82828a"/>
<path d="M830.4 613.0L845.8 616.2L842.8 619.9L827.5 616.8Z" fill="#83838b"/>
<path d="M827.5 616.8L842.8 619.9L839.8 623.7L824.5 620.5Z" fill="#83838b"/>
<path d="M824.5 620.5L839.8 623.7L836.8 627.5L821.6 624.3Z" fill="#83838b"/>
<path d="M821.6 624.3L836.8 627.5L833.8 631.3L818.7 628.0Z" fill="#84848b"/>
<path d="M818.7 628.0L833.8 631.3L830.8 635.0L815.8 631.8Z" fill="#84848c"/>
<path d="M815.8 631.8L830.8 635.0L827.8 638.8L812.8 635.5Z" fill="#85858c"/>
<path d="M812.8 635.5L827.8 638.8L824.7 642.6L809.9 639.3Z" fill="#85858c"/>
<path d="M809.9 639.3L824.7 642.6L821.7 646.4L807.0 643.0Z" fill="#85858c"/>
<path d="M807.0 643.0L821.7 646.4L818.7 650.1L804.1 646.8Z" fill="#86868c"/>
<path d="M804.1 646.8L818.7 650.1L815.7 653.9L801.1 650.5Z" fill="#86868d"/>
<path d="M801.1 650.5L815.7 653.9L812.7 657.7L798.2 654.3Z" fill="#87878d"/>
<path d="M798.2 654.3L812.7 657.7L809.7 661.5L795.3 658.0Z" fill="#87878d"/>
<path d="M795.3 658.0L809.7 661.5L806.7 665.2L792.4 661.8Z" fill="#87878d"/>
<path d="M792.4 661.8L806.7 665.2L803.7 669.0L789.5 665.5Z" fill="#88888e"/>
<path d="M848.8 612.4L864.2 615.5L861.2 619.3L845.8 616.2Z" fill="#82828a"/>
<path d="M845.8 616.2L861.2 619.3L858.1 623.1L842.8 619.9Z" fill="#83838a"/>
<path d="M842.8 619.9L858.1 623.1L855.0 626.9L839.8 623.7Z" fill="#83838b"/>
<path d="M839.8 623.7L855.0 626.9L851.9 630.7L836.8 627.5Z" fill="#83838b"/>
<path d="M836.8 627.5L851.9 630.7L848.8 634.5L833.8 631.3Z" fill="#84848b"/>
<path d="M833.8 631.3L848.8 634.5L845.8 638.3L830.8 635.0Z" fill="#84848b"/>
<path d="M830.8 635.0L845.8 638.3L842.7 642.1L827.8 638.8Z" fill="#85858c"/>
<path d="M827.8 638.8L842.7 642.1L839.6 645.9L824.7 642.6Z" fill="#85858c"/>
<path d="M824.7 642.6L839.6 645.9L836.5 649.7L821.7 646.4Z" fill="#85858c"/>
<path d="M821.7 646.4L836.5 649.7L833.4 653.5L818.7 650.1Z" fill="#86868d"/>
<path d="M818.7 650.1L833.4 653.5L830.3 657.3L815.7 653.9Z" fill="#86868d"/>
<path d="M815.7 653.9L830.3 657.3L827.2 661.1L812.7 657.7Z" fill="#87878d"/>
<path d="M812.7 657.7L827.2 661.1L824.2 664.9L809.7 661.5Z" fill="#87878d"/>
<path d="M809.7 661.5L824.2 664.9L821.1 668.7L806.7 665.2Z" fill="#87878e"/>
<path d="M806.7 665.2L821.1 668.7L818.0 672.5L803.7 669.0Z" fill="#88888e"/>
<path d="M864.2 615.5L879.7 618.5L877.0 621.7L861.7 618.7Z" fill="#82828a"/>
<path d="M861.7 618.7L877.0 621.7L874.4 624.9L859.1 621.8Z" fill="#83838a"/>
<path d="M859.1 621.8L874.4 624.9L871.8 628.1L856.5 625.0Z" fill="#83838b"/>
<path d="M856.5 625.0L871.8 628.1L869.1 631.3L854.0 628.2Z" fill="#83838b"/>
<path d="M854.0 628.2L869.1 631.3L866.5 634.5L851.4 631.3Z" fill="#84848b"/>
<path d="M851.4 631.3L866.5 634.5L863.8 637.7L848.8 634.5Z" fill="#84848b"/>
<path d="M848.8 634.5L863.8 637.7L861.2 640.9L846.3 637.7Z" fill="#84848c"/>
<path d="M846.3 637.7L861.2 640.9L858.5 644.1L843.7 640.8Z" fill="#85858c"/>
<path d="M843.7 640.8L858.5 644.1L855.9 647.3L841.1 644.0Z" fill="#85858c"/>
<path d="M841.1 644.0L855.9 647.3L853.3 650.5L838.6 647.2Z" fill="#85858c"/>
<path d="M838.6 647.2L853.3 650.5L850.6 653.7L836.0 650.3Z" fill="#86868d"/>
<path d="M836.0 650.3L850.6 653.7L848.0 656.9L833.4 653.5Z" fill="#86868d"/>
<path d="M833.4 653.5L848.0 656.9L845.3 660.1L830.8 656.7Z" fill="#86868d"/>
<path d="M830.8 656.7L845.3 660.1L842.7 663.3L828.3 659.8Z" fill="#87878d"/>
<path d="M828.3 659.8L842.7 663.3L840.0 666.5L825.7 663.0Z" fill="#87878d"/>
<path d="M825.7 663.0L840.0 666.5L837.4 669.7L823.1 666.2Z" fill="#88888e"/>
<path d="M823.1 666.2L837.4 669.7L834.8 672.9L820.6 669.3Z" fill="#88888e"/>
<path d="M820.6 669.3L834.8 672.9L832.1 676.1L818.0 672.5Z" fill="#88888e"/>
<path d="M879.7 618.5L895.1 621.5L892.4 624.7L877.0 621.7Z" fill="#82828a"/>
<path d="M877.0 621.7L892.4 624.7L889.7 627.9L874.4 624.9Z" fill="#83838a"/>
<path d="M874.4 624.9L889.7 627.9L887.0 631.2L871.8 628.1Z" fill="#83838b"/>
<path d="M871.8 628.1L887.0 631.2L884.2 634.4L869.1 631.3Z" fill="#83838b"/>
<path d="M869.1 631.3L884.2 634.4L881.5 637.6L866.5 634.5Z" fill="#84848b"/>
<path d="M866.5 634.5L881.5 637.6L878.8 640.9L863.8 637.7Z" fill="#84848c"/>
<path d="M863.8 637.7L878.8 640.9L876.1 644.1L861.2 640.9Z" fill="#85858c"/>
<path d="M861.2 640.9L876.1 644.1L873.4 647.3L858.5 644.1Z" fill="#85858c"/>
<path d="M858.5 644.1L873.4 647.3L870.7 650.6L855.9 647.3Z" fill="#85858c"/>
<path d="M855.9 647.3L870.7 650.6L868.0 653.8L853.3 650.5Z" fill="#86868d"/>
<path d="M853.3 650.5L868.0 653.8L865.2 657.0L850.6 653.7Z" fill="#86868d"/>
<path d="M850.6 653.7L865.2 657.0L862.5 660.3L848.0 656.9Z" fill="#87878d"/>
<path d="M848.0 656.9L862.5 660.3L859.8 663.5L845.3 660.1Z" fill="#87878d"/>
<path d="M845.3 660.1L859.8 663.5L857.1 666.7L842.7 663.3Z" fill="#87878e"/>
<path d="M842.7 663.3L857.1 666.7L854.4 670.0L840.0 666.5Z" fill="#88888e"/>
<path d="M840.0 666.5L854.4 670.0L851.7 673.2L837.4 669.7Z" fill="#88888e"/>
<path d="M837.4 669.7L851.7 673.2L848.9 676.4L834.8 672.9Z" fill="#89898f"/>
<path d="M834.8 672.9L848.9 676.4L846.2 679.6L832.1 676.1Z" fill="#89898f"/>
<path d="M895.1 621.5L910.5 624.4L907.7 627.7L892.4 624.7Z" fill="#82828a"/>
<path d="M892.4 624.7L907.7 627.7L905.0 631.0L889.7 627.9Z" fill="#83838a"/>
<path d="M889.7 627.9L905.0 631.0L902.2 634.2L887.0 631.2Z" fill="#83838b"/>
<path d="M887.0 631.2L902.2 634.2L899.4 637.5L884.2 634.4Z" fill="#84848b"/>
<path d="M884.2 634.4L899.4 637.5L896.6 640.8L881.5 637.6Z" fill="#84848b"/>
<path d="M881.5 637.6L896.6 640.8L893.8 644.0L878.8 640.9Z" fill="#84848c"/>
<path d="M878.8 640.9L893.8 644.0L891.0 647.3L876.1 644.1Z" fill="#85858c"/>
<path d="M876.1 644.1L891.0 647.3L888.2 650.6L873.4 647.3Z" fill="#85858c"/>
<path d="M873.4 647.3L888.2 650.6L885.4 653.8L870.7 650.6Z" fill="#86868d"/>
<path d="M870.7 650.6L885.4 653.8L882.7 657.1L868.0 653.8Z" fill="#86868d"/>
<path d="M868.0 653.8L882.7 657.1L879.9 660.4L865.2 657.0Z" fill="#87878d"/>
<path d="M865.2 657.0L879.9 660.4L877.1 663.6L862.5 660.3Z" fill="#87878e"/>
<path d="M862.5 660.3L877.1 663.6L874.3 666.9L859.8 663.5Z" fill="#88888e"/>
<path d="M859.8 663.5L874.3 666.9L871.5 670.2L857.1 666.7Z" fill="#88888e"/>
<path d="M857.1 666.7L871.5 670.2L868.7 673.4L854.4 670.0Z" fill="#89898f"/>
<path d="M854.4 670.0L868.7 673.4L865.9 676.7L851.7 673.2Z" fill="#89898f"/>
<path d="M851.7 673.2L865.9 676.7L863.1 680.0L848.9 676.4Z" fill="#89898f"/>
<path d="M848.9 676.4L863.1 680.0L860.4 683.2L846.2 679.6Z" fill="#8a8a90"/>
<path d="M910.5 624.4L926.0 627.4L923.1 630.7L907.7 627.7Z" fill="#82828a"/>
<path d="M907.7 627.7L923.1 630.7L920.2 634.0L905.0 631.0Z" fill="#83838b"/>
<path d="M905.0 631.0L920.2 634.0L917.4 637.3L902.2 634.2Z" fill="#83838b"/>
<path d="M902.2 634.2L917.4 637.3L914.5 640.6L899.4 637.5Z" fill="#84848b"/>
<path d="M899.4 637.5L914.5 640.6L911.7 643.9L896.6 640.8Z" fill="#84848c"/>
<path d="M896.6 640.8L911.7 643.9L908.8 647.2L893.8 644.0Z" fill="#85858c"/>
<path d="M893.8 644.0L908.8 647.2L905.9 650.5L891.0 647.3Z" fill="#85858c"/>
<path d="M891.0 647.3L905.9 650.5L903.1 653.8L888.2 650.6Z" fill="#86868d"/>
<path d="M888.2 650.6L903.1 653.8L900.2 657.1L885.4 653.8Z" fill="#86868d"/>
<path d="M885.4 653.8L900.2 657.1L897.4 660.4L882.7 657.1Z" fill="#87878d"/>
<path d="M882.7 657.1L897.4 660.4L894.5 663.7L879.9 660.4Z" fill="#87878e"/>
<path d="M879.9 660.4L894.5 663.7L891.6 667.0L877.1 663.6Z" fill="#88888e"/>
<path d="M877.1 663.6L891.6 667.0L888.8 670.3L874.3 666.9Z" fill="#88888e"/>
<path d="M874.3 666.9L888.8 670.3L885.9 673.6L871.5 670.2Z" fill="#89898f"/>
<path d="M871.5 670.2L885.9 673.6L883.1 676.9L868.7 673.4Z" fill="#89898f"/>
<path d="M868.7 673.4L883.1 676.9L880.2 680.2L865.9 676.7Z" fill="#8a8a8f"/>
<path d="M865.9 676.7L880.2 680.2L877.3 683.5L863.1 680.0Z" fill="#8a8a90"/>
<path d="M863.1 680.0L877.3 683.5L874.5 686.8L860.4 683.2Z" fill="#8b8b90"/>
<path d="M926.0 627.4L941.4 630.4L938.5 633.7L923.1 630.7Z" fill="#82828a"/>
<path d="M923.1 630.7L938.5 633.7L935.5 637.1L920.2 634.0Z" fill="#83838b"/>
<path d="M920.2 634.0L935.5 637.1L932.6 640.4L917.4 637.3Z" fill="#83838b"/>
<path d="M917.4 637.3L932.6 640.4L929.7 643.7L914.5 640.6Z" fill="#84848b"/>
<path d="M914.5 640.6L929.7 643.7L926.7 647.1L911.7 643.9Z" fill="#84848c"/>
<path d="M911.7 643.9L926.7 647.1L923.8 650.4L908.8 647.2Z" fill="#85858c"/>
<path d="M908.8 647.2L923.8 650.4L920.9 653.7L905.9 650.5Z" fill="#86868d"/>
<path d="M905.9 650.5L920.9 653.7L917.9 657.1L903.1 653.8Z" fill="#86868d"/>
<path d="M903.1 653.8L917.9 657.1L915.0 660.4L900.2 657.1Z" fill="#87878d"/>
<path d="M900.2 657.1L915.0 660.4L912.1 663.7L897.4 660.4Z" fill="#87878e"/>
<path d="M897.4 660.4L912.1 663.7L909.1 667.0L894.5 663.7Z" fill="#88888e"/>
<path d="M894.5 663.7L909.1 667.0L906.2 670.4L891.6 667.0Z" fill="#88888e"/>
<path d="M891.6 667.0L906.2 670.4L903.3 673.7L888.8 670.3Z" fill="#89898f"/>
<path d="M888.8 670.3L903.3 673.7L900.3 677.0L885.9 673.6Z" fill="#89898f"/>
<path d="M885.9 673.6L900.3 677.0L897.4 680.4L883.1 676.9Z" fill="#8a8a90"/>
<path d="M883.1 676.9L897.4 680.4L894.5 683.7L880.2 680.2Z" fill="#8a8a90"/>
<path d="M880.2 680.2L894.5 683.7L891.5 687.0L877.3 683.5Z" fill="#8b8b90"/>
<path d="M877.3 683.5L891.5 687.0L888.6 690.4L874.5 686.8Z" fill="#8b8b91"/>
<path d="M941.4 630.4L956.8 633.4L953.8 636.7L938.5 633.7Z" fill="#82828a"/>
<path d="M938.5 633.7L953.8 636.7L950.8 640.1L935.5 637.1Z" fill="#83838b"/>
<path d="M935.5 637.1L950.8 640.1L947.8 643.5L932.6 640.4Z" fill="#83838b"/>
<path d="M932.6 640.4L947.8 643.5L944.8 646.8L929.7 643.7Z" fill="#84848b"/>
<path d="M929.7 643.7L944.8 646.8L941.8 650.2L926.7 647.1Z" fill="#85858c"/>
<path d="M926.7 647.1L941.8 650.2L938.8 653.6L923.8 650.4Z" fill="#85858c"/>
<path d="M923.8 650.4L938.8 653.6L935.8 656.9L920.9 653.7Z" fill="#86868d"/>
<path d="M920.9 653.7L935.8 656.9L932.8 660.3L917.9 657.1Z" fill="#86868d"/>
<path d="M917.9 657.1L932.8 660.3L929.8 663.7L915.0 660.4Z" fill="#87878e"/>
<path d="M915.0 660.4L929.8 663.7L926.8 667.0L912.1 663.7Z" fill="#88888e"/>
<path d="M912.1 663.7L926.8 667.0L923.7 670.4L909.1 667.0Z" fill="#88888e"/>
<path d="M909.1 667.0L923.7 670.4L920.7 673.8L906.2 670.4Z" fill="#89898f"/>
<path d="M906.2 670.4L920.7 673.8L917.7 677.1L903.3 673.7Z" fill="#89898f"/>
<path d="M903.3 673.7L917.7 677.1L914.7 680.5L900.3 677.0Z" fill="#8a8a90"/>
<path d="M900.3 677.0L914.7 680.5L911.7 683.9L897.4 680.4Z" fill="#8b8b90"/>
<path d="M897.4 680.4L911.7 683.9L908.7 687.2L894.5 683.7Z" fill="#8b8b91"/>
<path d="M894.5 683.7L908.7 687.2L905.7 690.6L891.5 687.0Z" fill="#8c8c91"/>
<path d="M891.5 687.0L905.7 690.6L902.7 694.0L888.6 690.4Z" fill="#8c8c91"/>
<path d="M956.8 633.4L972.3 636.4L969.2 639.8L953.8 636.7Z" fill="#82828a"/>
<path d="M953.8 636.7L969.2 639.8L966.1 643.2L950.8 640.1Z" fill="#83838b"/>
<path d="M950.8 640.1L966.1 643.2L963.0 646.5L947.8 643.5Z" fill="#84848b"/>
<path d="M947.8 643.5L963.0 646.5L959.9 649.9L944.8 646.8Z" fill="#84848c"/>
<path d="M944.8 646.8L959.9 649.9L956.9 653.3L941.8 650.2Z" fill="#85858c"/>
<path d="M941.8 650.2L956.9 653.3L953.8 656.7L938.8 653.6Z" fill="#85858d"/>
<path d="M938.8 653.6L953.8 656.7L950.7 660.1L935.8 656.9Z" fill="#86868d"/>
<path d="M935.8 656.9L950.7 660.1L947.6 663.5L932.8 660.3Z" fill="#87878d"/>
<path d="M932.8 660.3L947.6 663.5L944.5 666.9L929.8 663.7Z" fill="#87878e"/>
<path d="M929.8 663.7L944.5 666.9L941.5 670.3L926.8 667.0Z" fill="#88888e"/>
<path d="M926.8 667.0L941.5 670.3L938.4 673.7L923.7 670.4Z" fill="#89898f"/>
<path d="M923.7 670.4L938.4 673.7L935.3 677.1L920.7 673.8Z" fill="#89898f"/>
<path d="M920.7 673.8L935.3 677.1L932.2 680.5L917.7 677.1Z" fill="#8a8a90"/>
<path d="M917.7 677.1L932.2 680.5L929.1 683.9L914.7 680.5Z" fill="#8b8b90"/>
<path d="M914.7 680.5L929.1 683.9L926.1 687.3L911.7 683.9Z" fill="#8b8b91"/>
<path d="M911.7 683.9L926.1 687.3L923.0 690.7L908.7 687.2Z" fill="#8c8c91"/>
<path d="M908.7 687.2L923.0 690.7L919.9 694.1L905.7 690.6Z" fill="#8c8c92"/>
<path d="M905.7 690.6L919.9 694.1L916.8 697.5L902.7 694.0Z" fill="#8d8d92"/>
<path d="M972.3 636.4L987.7 639.3L984.5 642.8L969.2 639.8Z" fill="#82828a"/>
<path d="M969.2 639.8L984.5 642.8L981.4 646.2L966.1 643.2Z" fill="#83838b"/>
<path d="M966.1 643.2L981.4 646.2L978.2 649.6L963.0 646.5Z" fill="#84848b"/>
<path d="M963.0 646.5L978.2 649.6L975.1 653.1L959.9 649.9Z" fill="#84848c"/>
<path d="M959.9 649.9L975.1 653.1L971.9 656.5L956.9 653.3Z" fill="#85858c"/>
<path d="M956.9 653.3L971.9 656.5L968.8 659.9L953.8 656.7Z" fill="#86868d"/>
<path d="M953.8 656.7L968.8 659.9L965.6 663.4L950.7 660.1Z" fill="#86868d"/>
<path d="M950.7 660.1L965.6 663.4L962.5 666.8L947.6 663.5Z" fill="#87878e"/>
<path d="M947.6 663.5L962.5 666.8L959.3 670.2L944.5 666.9Z" fill="#88888e"/>
<path d="M944.5 666.9L959.3 670.2L956.2 673.6L941.5 670.3Z" fill="#88888f"/>
<path d="M941.5 670.3L956.2 673.6L953.0 677.1L938.4 673.7Z" fill="#89898f"/>
<path d="M938.4 673.7L953.0 677.1L949.9 680.5L935.3 677.1Z" fill="#8a8a90"/>
<path d="M935.3 677.1L949.9 680.5L946.7 683.9L932.2 680.5Z" fill="#8b8b90"/>
<path d="M932.2 680.5L946.7 683.9L943.5 687.4L929.1 683.9Z" fill="#8b8b91"/>
<path d="M929.1 683.9L943.5 687.4L940.4 690.8L926.1 687.3Z" fill="#8c8c91"/>
<path d="M926.1 687.3L940.4 690.8L937.2 694.2L923.0 690.7Z" fill="#8d8d92"/>
<path d="M923.0 690.7L937.2 694.2L934.1 697.7L919.9 694.1Z" fill="#8d8d92"/>
<path d="M919.9 694.1L934.1 697.7L930.9 701.1L916.8 697.5Z" fill="#8e8e93"/>
<path d="M987.7 639.3L1003.1 642.3L999.9 645.8L984.5 642.8Z" fill="#82828a"/>
<path d="M984.5 642.8L999.9 645.8L996.7 649.2L981.4 646.2Z" fill="#83838b"/>
<path d="M981.4 646.2L996.7 649.2L993.4 652.7L978.2 649.6Z" fill="#84848b"/>
<path d="M978.2 649.6L993.4 652.7L990.2 656.2L975.1 653.1Z" fill="#85858c"/>
<path d="M975.1 653.1L990.2 656.2L987.0 659.6L971.9 656.5Z" fill="#85858c"/>
<path d="M971.9 656.5L987.0 659.6L983.8 663.1L968.8 659.9Z" fill="#86868d"/>
<path d="M968.8 659.9L983.8 663.1L980.5 666.6L965.6 663.4Z" fill="#87878d"/>
<path d="M965.6 663.4L980.5 666.6L977.3 670.0L962.5 666.8Z" fill="#87878e"/>
<path d="M962.5 666.8L977.3 670.0L974.1 673.5L959.3 670.2Z" fill="#88888f"/>
<path d="M959.3 670.2L974.1 673.5L970.9 677.0L956.2 673.6Z" fill="#89898f"/>
<path d="M956.2 673.6L970.9 677.0L967.6 680.4L953.0 677.1Z" fill="#8a8a90"/>
<path d="M953.0 677.1L967.6 680.4L964.4 683.9L949.9 680.5Z" fill="#8a8a90"/>
<path d="M949.9 680.5L964.4 683.9L961.2 687.4L946.7 683.9Z" fill="#8b8b91"/>
<path d="M946.7 683.9L961.2 687.4L958.0 690.8L943.5 687.4Z" fill="#8c8c91"/>
<path d="M943.5 687.4L958.0 690.8L954.7 694.3L940.4 690.8Z" fill="#8d8d92"/>
<path d="M940.4 690.8L954.7 694.3L951.5 697.7L937.2 694.2Z" fill="#8d8d92"/>
<path d="M937.2 694.2L951.5 697.7L948.3 701.2L934.1 697.7Z" fill="#8e8e93"/>
<path d="M934.1 697.7L948.3 701.2L945.0 704.7L930.9 701.1Z" fill="#8f8f93"/>
<path d="M1003.1 642.3L1018.5 645.3L1015.2 648.8L999.9 645.8Z" fill="#82828a"/>
<path d="M999.9 645.8L1015.2 648.8L1011.9 652.3L996.7 649.2Z" fill="#83838b"/>
<path d="M996.7 649.2L1011.9 652.3L1008.6 655.8L993.4 652.7Z" fill="#84848b"/>
<path d="M993.4 652.7L1008.6 655.8L1005.3 659.3L990.2 656.2Z" fill="#85858c"/>
<path d="M990.2 656.2L1005.3 659.3L1002.0 662.8L987.0 659.6Z" fill="#85858d"/>
<path d="M987.0 659.6L1002.0 662.8L998.8 666.3L983.8 663.1Z" fill="#86868d"/>
<path d="M983.8 663.1L998.8 666.3L995.5 669.8L980.5 666.6Z" fill="#87878e"/>
<path d="M980.5 666.6L995.5 669.8L992.2 673.3L977.3 670.0Z" fill="#88888e"/>
<path d="M977.3 670.0L992.2 673.3L988.9 676.8L974.1 673.5Z" fill="#89898f"/>
<path d="M974.1 673.5L988.9 676.8L985.6 680.3L970.9 677.0Z" fill="#89898f"/>
<path d="M970.9 677.0L985.6 680.3L982.3 683.8L967.6 680.4Z" fill="#8a8a90"/>
<path d="M967.6 680.4L982.3 683.8L979.0 687.3L964.4 683.9Z" fill="#8b8b91"/>
<path d="M964.4 683.9L979.0 687.3L975.7 690.8L961.2 687.4Z" fill="#8c8c91"/>
<path d="M961.2 687.4L975.7 690.8L972.4 694.3L958.0 690.8Z" fill="#8c8c92"/>
<path d="M958.0 690.8L972.4 694.3L969.1 697.8L954.7 694.3Z" fill="#8d8d92"/>
<path d="M954.7 694.3L969.1 697.8L965.8 701.3L951.5 697.7Z" fill="#8e8e93"/>
<path d="M951.5 697.7L965.8 701.3L962.5 704.8L948.3 701.2Z" fill="#8f8f93"/>
<path d="M948.3 701.2L962.5 704.8L959.2 708.2L945.0 704.7Z" fill="#909094"/>
<path d="M1018.5 645.3L1034.0 648.3L1030.6 651.8L1015.2 648.8Z" fill="#82828a"/>
<path d="M1015.2 648.8L1030.6 651.8L1027.2 655.3L1011.9 652.3Z" fill="#83838b"/>
<path d="M1011.9 652.3L1027.2 655.3L1023.9 658.9L1008.6 655.8Z" fill="#84848c"/>
<path d="M1008.6 655.8L1023.9 658.9L1020.5 662.4L1005.3 659.3Z" fill="#85858c"/>
<path d="M1005.3 659.3L1020.5 662.4L1017.1 665.9L1002.0 662.8Z" fill="#86868d"/>
<path d="M1002.0 662.8L1017.1 665.9L1013.7 669.5L998.8 666.3Z" fill="#87878d"/>
<path d="M998.8 666.3L1013.7 669.5L1010.4 673.0L995.5 669.8Z" fill="#87878e"/>
<path d="M995.5 669.8L1010.4 673.0L1007.0 676.5L992.2 673.3Z" fill="#88888f"/>
<path d="M992.2 673.3L1007.0 676.5L1003.6 680.0L988.9 676.8Z" fill="#89898f"/>
<path d="M988.9 676.8L1003.6 680.0L1000.3 683.6L985.6 680.3Z" fill="#8a8a90"/>
<path d="M985.6 680.3L1000.3 683.6L996.9 687.1L982.3 683.8Z" fill="#8b8b90"/>
<path d="M982.3 683.8L996.9 687.1L993.5 690.6L979.0 687.3Z" fill="#8b8b91"/>
<path d="M979.0 687.3L993.5 690.6L990.1 694.2L975.7 690.8Z" fill="#8c8c92"/>
<path d="M975.7 690.8L990.1 694.2L986.8 697.7L972.4 694.3Z" fill="#8d8d92"/>
<path d="M972.4 694.3L986.8 697.7L983.4 701.2L969.1 697.8Z" fill="#8e8e93"/>
<path d="M969.1 697.8L983.4 701.2L980.0 704.8L965.8 701.3Z" fill="#8f8f93"/>
<path d="M965.8 701.3L980.0 704.8L976.7 708.3L962.5 704.8Z" fill="#909094"/>
<path d="M962.5 704.8L976.7 708.3L973.3 711.8L959.2 708.2Z" fill="#909095"/>
<path d="M1034.0 648.3L1049.4 651.2L1046.0 654.8L1030.6 651.8Z" fill="#82828a"/>
<path d="M1030.6 651.8L1046.0 654.8L1042.5 658.4L1027.2 655.3Z" fill="#83838b"/>
<path d="M1027.2 655.3L1042.5 658.4L1039.1 661.9L1023.9 658.9Z" fill="#84848c"/>
<path d="M1023.9 658.9L1039.1 661.9L1035.6 665.5L1020.5 662.4Z" fill="#85858c"/>
<path d="M1020.5 662.4L1035.6 665.5L1032.2 669.1L1017.1 665.9Z" fill="#86868d"/>
<path d="M1017.1 665.9L1032.2 669.1L1028.7 672.6L1013.7 669.5Z" fill="#87878e"/>
<path d="M1013.7 669.5L1028.7 672.6L1025.3 676.2L1010.4 673.0Z" fill="#88888e"/>
<path d="M1010.4 673.0L1025.3 676.2L1021.8 679.8L1007.0 676.5Z" fill="#88888f"/>
<path d="M1007.0 676.5L1021.8 679.8L1018.4 683.3L1003.6 680.0Z" fill="#898990"/>
<path d="M1003.6 680.0L1018.4 683.3L1015.0 686.9L1000.3 683.6Z" fill="#8a8a90"/>
<path d="M1000.3 683.6L1015.0 686.9L1011.5 690.5L996.9 687.1Z" fill="#8b8b91"/>
<path d="M996.9 687.1L1011.5 690.5L1008.1 694.0L993.5 690.6Z" fill="#8c8c91"/>
<path d="M993.5 690.6L1008.1 694.0L1004.6 697.6L990.1 694.2Z" fill="#8d8d92"/>
<path d="M990.1 694.2L1004.6 697.6L1001.2 701.1L986.8 697.7Z" fill="#8e8e93"/>
<path d="M986.8 697.7L1001.2 701.1L997.7 704.7L983.4 701.2Z" fill="#8f8f93"/>
<path d="M983.4 701.2L997.7 704.7L994.3 708.3L980.0 704.8Z" fill="#8f8f94"/>
<path d="M980.0 704.8L994.3 708.3L990.8 711.8L976.7 708.3Z" fill="#909095"/>
<path d="M976.7 708.3L990.8 711.8L987.4 715.4L973.3 711.8Z" fill="#919195"/>
<path d="M1049.4 651.2L1063.3 655.8L1059.9 658.9L1046.3 654.5Z" fill="#82828a"/>
<path d="M1046.3 654.5L1059.9 658.9L1056.5 662.0L1043.2 657.7Z" fill="#83838b"/>
<path d="M1043.2 657.7L1056.5 662.0L1053.1 665.1L1040.1 660.9Z" fill="#84848b"/>
<path d="M1040.1 660.9L1053.1 665.1L1049.7 668.2L1037.0 664.1Z" fill="#85858c"/>
<path d="M1037.0 664.1L1049.7 668.2L1046.2 671.3L1033.9 667.3Z" fill="#85858d"/>
<path d="M1033.9 667.3L1046.2 671.3L1042.8 674.4L1030.8 670.5Z" fill="#86868d"/>
<path d="M1030.8 670.5L1042.8 674.4L1039.4 677.5L1027.7 673.7Z" fill="#87878e"/>
<path d="M1027.7 673.7L1039.4 677.5L1036.0 680.6L1024.6 676.9Z" fill="#88888e"/>
<path d="M1024.6 676.9L1036.0 680.6L1032.6 683.7L1021.5 680.1Z" fill="#89898f"/>
<path d="M1021.5 680.1L1032.6 683.7L1029.2 686.8L1018.4 683.3Z" fill="#89898f"/>
<path d="M1018.4 683.3L1029.2 686.8L1025.7 689.9L1015.3 686.5Z" fill="#8a8a90"/>
<path d="M1015.3 686.5L1025.7 689.9L1022.3 693.0L1012.2 689.7Z" fill="#8b8b91"/>
<path d="M1012.2 689.7L1022.3 693.0L1018.9 696.1L1009.1 692.9Z" fill="#8c8c91"/>
<path d="M1009.1 692.9L1018.9 696.1L1015.5 699.2L1006.0 696.2Z" fill="#8c8c92"/>
<path d="M1006.0 696.2L1015.5 699.2L1012.0 702.3L1002.9 699.4Z" fill="#8d8d92"/>
<path d="M1002.9 699.4L1012.0 702.3L1008.6 705.4L999.8 702.6Z" fill="#8e8e93"/>
<path d="M999.8 702.6L1008.6 705.4L1005.2 708.5L996.7 705.8Z" fill="#8f8f93"/>
<path d="M996.7 705.8L1005.2 708.5L1001.8 711.6L993.6 709.0Z" fill="#909094"/>
<path d="M993.6 709.0L1001.8 711.6L998.4 714.7L990.5 712.2Z" fill="#909095"/>
<path d="M990.5 712.2L998.4 714.7L995.0 717.8L987.4 715.4Z" fill="#919195"/>
<path d="M1063.3 655.8L1077.3 660.3L1073.6 663.3L1059.9 658.9Z" fill="#82828a"/>
<path d="M1059.9 658.9L1073.6 663.3L1069.8 666.3L1056.5 662.0Z" fill="#83838b"/>
<path d="M1056.5 662.0L1069.8 666.3L1066.1 669.3L1053.1 665.1Z" fill="#84848b"/>
<path d="M1053.1 665.1L1066.1 669.3L1062.3 672.3L1049.7 668.2Z" fill="#85858c"/>
<path d="M1049.7 668.2L1062.3 672.3L1058.6 675.3L1046.2 671.3Z" fill="#85858c"/>
<path d="M1046.2 671.3L1058.6 675.3L1054.9 678.3L1042.8 674.4Z" fill="#86868d"/>
<path d="M1042.8 674.4L1054.9 678.3L1051.1 681.3L1039.4 677.5Z" fill="#87878d"/>
<path d="M1039.4 677.5L1051.1 681.3L1047.4 684.3L1036.0 680.6Z" fill="#87878e"/>
<path d="M1036.0 680.6L1047.4 684.3L1043.6 687.3L1032.6 683.7Z" fill="#88888e"/>
<path d="M1032.6 683.7L1043.6 687.3L1039.9 690.3L1029.2 686.8Z" fill="#89898f"/>
<path d="M1029.2 686.8L1039.9 690.3L1036.2 693.3L1025.7 689.9Z" fill="#8a8a90"/>
<path d="M1025.7 689.9L1036.2 693.3L1032.4 696.3L1022.3 693.0Z" fill="#8a8a90"/>
<path d="M1022.3 693.0L1032.4 696.3L1028.7 699.3L1018.9 696.1Z" fill="#8b8b91"/>
<path d="M1018.9 696.1L1028.7 699.3L1024.9 702.3L1015.5 699.2Z" fill="#8c8c91"/>
<path d="M1015.5 699.2L1024.9 702.3L1021.2 705.3L1012.0 702.3Z" fill="#8d8d92"/>
<path d="M1012.0 702.3L1021.2 705.3L1017.5 708.3L1008.6 705.4Z" fill="#8d8d92"/>
<path d="M1008.6 705.4L1017.5 708.3L1013.7 711.3L1005.2 708.5Z" fill="#8e8e93"/>
<path d="M1005.2 708.5L1013.7 711.3L1010.0 714.3L1001.8 711.6Z" fill="#8f8f93"/>
<path d="M1001.8 711.6L1010.0 714.3L1006.2 717.3L998.4 714.7Z" fill="#8f8f94"/>
<path d="M998.4 714.7L1006.2 717.3L1002.5 720.3L995.0 717.8Z" fill="#909094"/>
<path d="M1077.3 660.3L1085.1 662.8L1081.4 665.7L1073.6 663.3Z" fill="#82828a"/>
<path d="M1073.6 663.3L1081.4 665.7L1077.7 668.7L1069.8 666.3Z" fill="#83838b"/>
<path d="M1069.8 666.3L1077.7 668.7L1074.0 671.7L1066.1 669.3Z" fill="#84848b"/>
<path d="M1066.1 669.3L1074.0 671.7L1070.3 674.7L1062.3 672.3Z" fill="#84848c"/>
<path d="M1062.3 672.3L1070.3 674.7L1066.6 677.7L1058.6 675.3Z" fill="#85858c"/>
<path d="M1058.6 675.3L1066.6 677.7L1062.9 680.7L1054.9 678.3Z" fill="#86868d"/>
<path d="M1054.9 678.3L1062.9 680.7L1059.3 683.7L1051.1 681.3Z" fill="#86868d"/>
<path d="M1051.1 681.3L1059.3 683.7L1055.6 686.7L1047.4 684.3Z" fill="#87878e"/>
<path d="M1047.4 684.3L1055.6 686.7L1051.9 689.7L1043.6 687.3Z" fill="#88888e"/>
<path d="M1043.6 687.3L1051.9 689.7L1048.2 692.7L1039.9 690.3Z" fill="#88888f"/>
<path d="M1039.9 690.3L1048.2 692.7L1044.5 695.7L1036.2 693.3Z" fill="#89898f"/>
<path d="M1036.2 693.3L1044.5 695.7L1040.8 698.7L1032.4 696.3Z" fill="#8a8a8f"/>
<path d="M1032.4 696.3L1040.8 698.7L1037.1 701.7L1028.7 699.3Z" fill="#8a8a90"/>
<path d="M1028.7 699.3L1037.1 701.7L1033.4 704.7L1024.9 702.3Z" fill="#8b8b90"/>
<path d="M1024.9 702.3L1033.4 704.7L1029.7 707.7L1021.2 705.3Z" fill="#8c8c91"/>
<path d="M1021.2 705.3L1029.7 707.7L1026.0 710.7L1017.5 708.3Z" fill="#8c8c91"/>
<path d="M1017.5 708.3L1026.0 710.7L1022.3 713.7L1013.7 711.3Z" fill="#8d8d92"/>
<path d="M1013.7 711.3L1022.3 713.7L1018.6 716.7L1010.0 714.3Z" fill="#8e8e92"/>
<path d="M1010.0 714.3L1018.6 716.7L1014.9 719.7L1006.2 717.3Z" fill="#8e8e93"/>
<path d="M1006.2 717.3L1014.9 719.7L1011.2 722.7L1002.5 720.3Z" fill="#8f8f93"/>
<path d="M1085.1 662.8L1092.9 665.2L1089.3 668.2L1081.4 665.7Z" fill="#82828a"/>
<path d="M1081.4 665.7L1089.3 668.2L1085.6 671.2L1077.7 668.7Z" fill="#83838b"/>
<path d="M1077.7 668.7L1085.6 671.2L1082.0 674.2L1074.0 671.7Z" fill="#84848b"/>
<path d="M1074.0 671.7L1082.0 674.2L1078.3 677.2L1070.3 674.7Z" fill="#84848b"/>
<path d="M1070.3 674.7L1078.3 677.2L1074.7 680.2L1066.6 677.7Z" fill="#85858c"/>
<path d="M1066.6 677.7L1074.7 680.2L1071.0 683.2L1062.9 680.7Z" fill="#85858c"/>
<path d="M1062.9 680.7L1071.0 683.2L1067.4 686.2L1059.3 683.7Z" fill="#86868d"/>
<path d="M1059.3 683.7L1067.4 686.2L1063.7 689.2L1055.6 686.7Z" fill="#87878d"/>
<path d="M1055.6 686.7L1063.7 689.2L1060.1 692.2L1051.9 689.7Z" fill="#87878e"/>
<path d="M1051.9 689.7L1060.1 692.2L1056.5 695.2L1048.2 692.7Z" fill="#88888e"/>
<path d="M1048.2 692.7L1056.5 695.2L1052.8 698.1L1044.5 695.7Z" fill="#89898e"/>
<path d="M1044.5 695.7L1052.8 698.1L1049.2 701.1L1040.8 698.7Z" fill="#89898f"/>
<path d="M1040.8 698.7L1049.2 701.1L1045.5 704.1L1037.1 701.7Z" fill="#8a8a8f"/>
<path d="M1037.1 701.7L1045.5 704.1L1041.9 707.1L1033.4 704.7Z" fill="#8a8a90"/>
<path d="M1033.4 704.7L1041.9 707.1L1038.2 710.1L1029.7 707.7Z" fill="#8b8b90"/>
<path d="M1029.7 707.7L1038.2 710.1L1034.6 713.1L1026.0 710.7Z" fill="#8c8c91"/>
<path d="M1026.0 710.7L1034.6 713.1L1030.9 716.1L1022.3 713.7Z" fill="#8c8c91"/>
<path d="M1022.3 713.7L1030.9 716.1L1027.3 719.1L1018.6 716.7Z" fill="#8d8d91"/>
<path d="M1018.6 716.7L1027.3 719.1L1023.6 722.1L1014.9 719.7Z" fill="#8e8e92"/>
<path d="M1014.9 719.7L1023.6 722.1L1020.0 725.1L1011.2 722.7Z" fill="#8e8e92"/>
<path d="M1092.9 665.2L1101.4 665.6L1097.8 668.8L1089.1 668.4Z" fill="#82828a"/>
<path d="M1089.1 668.4L1097.8 668.8L1094.1 672.0L1085.2 671.5Z" fill="#83838b"/>
<path d="M1085.2 671.5L1094.1 672.0L1090.5 675.2L1081.4 674.7Z" fill="#83838b"/>
<path d="M1081.4 674.7L1090.5 675.2L1086.8 678.4L1077.6 677.8Z" fill="#84848b"/>
<path d="M1077.6 677.8L1086.8 678.4L1083.2 681.6L1073.7 681.0Z" fill="#85858c"/>
<path d="M1073.7 681.0L1083.2 681.6L1079.6 684.8L1069.9 684.1Z" fill="#85858c"/>
<path d="M1069.9 684.1L1079.6 684.8L1075.9 688.0L1066.0 687.3Z" fill="#86868d"/>
<path d="M1066.0 687.3L1075.9 688.0L1072.3 691.3L1062.2 690.4Z" fill="#86868d"/>
<path d="M1062.2 690.4L1072.3 691.3L1068.7 694.5L1058.4 693.6Z" fill="#87878d"/>
<path d="M1058.4 693.6L1068.7 694.5L1065.0 697.7L1054.5 696.7Z" fill="#88888e"/>
<path d="M1054.5 696.7L1065.0 697.7L1061.4 700.9L1050.7 699.9Z" fill="#88888e"/>
<path d="M1050.7 699.9L1061.4 700.9L1057.7 704.1L1046.9 703.0Z" fill="#89898e"/>
<path d="M1046.9 703.0L1057.7 704.1L1054.1 707.3L1043.0 706.2Z" fill="#89898f"/>
<path d="M1043.0 706.2L1054.1 707.3L1050.5 710.5L1039.2 709.3Z" fill="#8a8a8f"/>
<path d="M1039.2 709.3L1050.5 710.5L1046.8 713.7L1035.3 712.5Z" fill="#8a8a90"/>
<path d="M1035.3 712.5L1046.8 713.7L1043.2 716.9L1031.5 715.6Z" fill="#8b8b90"/>
<path d="M1031.5 715.6L1043.2 716.9L1039.5 720.1L1027.7 718.8Z" fill="#8c8c90"/>
<path d="M1027.7 718.8L1039.5 720.1L1035.9 723.3L1023.8 721.9Z" fill="#8c8c91"/>
<path d="M1023.8 721.9L1035.9 723.3L1032.3 726.5L1020.0 725.1Z" fill="#8d8d91"/>
<path d="M1101.4 665.6L1109.9 666.0L1106.5 669.3L1097.8 668.8Z" fill="#82828a"/>
<path d="M1097.8 668.8L1106.5 669.3L1103.0 672.5L1094.1 672.0Z" fill="#83838a"/>
<path d="M1094.1 672.0L1103.0 672.5L1099.6 675.8L1090.5 675.2Z" fill="#83838b"/>
<path d="M1090.5 675.2L1099.6 675.8L1096.1 679.0L1086.8 678.4Z" fill="#84848b"/>
<path d="M1086.8 678.4L1096.1 679.0L1092.7 682.3L1083.2 681.6Z" fill="#84848b"/>
<path d="M1083.2 681.6L1092.7 682.3L1089.3 685.6L1079.6 684.8Z" fill="#85858c"/>
<path d="M1079.6 684.8L1089.3 685.6L1085.8 688.8L1075.9 688.0Z" fill="#85858c"/>
<path d="M1075.9 688.0L1085.8 688.8L1082.4 692.1L1072.3 691.3Z" fill="#86868c"/>
<path d="M1072.3 691.3L1082.4 692.1L1078.9 695.4L1068.7 694.5Z" fill="#86868d"/>
<path d="M1068.7 694.5L1078.9 695.4L1075.5 698.6L1065.0 697.7Z" fill="#86868d"/>
<path d="M1065.0 697.7L1075.5 698.6L1072.1 701.9L1061.4 700.9Z" fill="#87878d"/>
<path d="M1061.4 700.9L1072.1 701.9L1068.6 705.1L1057.7 704.1Z" fill="#87878e"/>
<path d="M1057.7 704.1L1068.6 705.1L1065.2 708.4L1054.1 707.3Z" fill="#88888e"/>
<path d="M1054.1 707.3L1065.2 708.4L1061.7 711.7L1050.5 710.5Z" fill="#88888e"/>
<path d="M1050.5 710.5L1061.7 711.7L1058.3 714.9L1046.8 713.7Z" fill="#89898f"/>
<path d="M1046.8 713.7L1058.3 714.9L1054.9 718.2L1043.2 716.9Z" fill="#89898f"/>
<path d="M1043.2 716.9L1054.9 718.2L1051.4 721.4L1039.5 720.1Z" fill="#8a8a8f"/>
<path d="M1039.5 720.1L1051.4 721.4L1048.0 724.7L1035.9 723.3Z" fill="#8a8a90"/>
<path d="M1035.9 723.3L1048.0 724.7L1044.5 728.0L1032.3 726.5Z" fill="#8b8b90"/>
<path d="M1109.9 666.0L1118.4 666.4L1115.2 669.7L1106.5 669.3Z" fill="#82828a"/>
<path d="M1106.5 669.3L1115.2 669.7L1111.9 673.0L1103.0 672.5Z" fill="#83838a"/>
<path d="M1103.0 672.5L1111.9 673.0L1108.7 676.3L1099.6 675.8Z" fill="#83838b"/>
<path d="M1099.6 675.8L1108.7 676.3L1105.4 679.7L1096.1 679.0Z" fill="#83838b"/>
<path d="M1096.1 679.0L1105.4 679.7L1102.2 683.0L1092.7 682.3Z" fill="#84848b"/>
<path d="M1092.7 682.3L1102.2 683.0L1098.9 686.3L1089.3 685.6Z" fill="#84848b"/>
<path d="M1089.3 685.6L1098.9 686.3L1095.7 689.6L1085.8 688.8Z" fill="#84848c"/>
<path d="M1085.8 688.8L1095.7 689.6L1092.5 692.9L1082.4 692.1Z" fill="#85858c"/>
<path d="M1082.4 692.1L1092.5 692.9L1089.2 696.2L1078.9 695.4Z" fill="#85858c"/>
<path d="M1078.9 695.4L1089.2 696.2L1086.0 699.6L1075.5 698.6Z" fill="#86868c"/>
<path d="M1075.5 698.6L1086.0 699.6L1082.7 702.9L1072.1 701.9Z" fill="#86868d"/>
<path d="M1072.1 701.9L1082.7 702.9L1079.5 706.2L1068.6 705.1Z" fill="#86868d"/>
<path d="M1068.6 705.1L1079.5 706.2L1076.3 709.5L1065.2 708.4Z" fill="#87878d"/>
<path d="M1065.2 708.4L1076.3 709.5L1073.0 712.8L1061.7 711.7Z" fill="#87878d"/>
<path d="M1061.7 711.7L1073.0 712.8L1069.8 716.1L1058.3 714.9Z" fill="#87878e"/>
<path d="M1058.3 714.9L1069.8 716.1L1066.5 719.5L1054.9 718.2Z" fill="#88888e"/>
<path d="M1054.9 718.2L1066.5 719.5L1063.3 722.8L1051.4 721.4Z" fill="#88888e"/>
<path d="M1051.4 721.4L1063.3 722.8L1060.0 726.1L1048.0 724.7Z" fill="#88888e"/>
<path d="M1048.0 724.7L1060.0 726.1L1056.8 729.4L1044.5 728.0Z" fill="#89898f"/>
<path d="M1118.4 666.4L1132.4 668.4L1129.0 671.9L1115.0 669.9Z" fill="#82828a"/>
<path d="M1115.0 669.9L1129.0 671.9L1125.6 675.4L1111.6 673.4Z" fill="#82828a"/>
<path d="M1111.6 673.4L1125.6 675.4L1122.1 678.9L1108.1 676.9Z" fill="#83838b"/>
<path d="M1108.1 676.9L1122.1 678.9L1118.7 682.4L1104.7 680.4Z" fill="#83838b"/>
<path d="M1104.7 680.4L1118.7 682.4L1115.3 685.9L1101.3 683.9Z" fill="#84848b"/>
<path d="M1101.3 683.9L1115.3 685.9L1111.9 689.4L1097.9 687.4Z" fill="#84848b"/>
<path d="M1097.9 687.4L1111.9 689.4L1108.4 692.9L1094.4 690.9Z" fill="#84848b"/>
<path d="M1094.4 690.9L1108.4 692.9L1105.0 696.4L1091.0 694.4Z" fill="#84848c"/>
<path d="M1091.0 694.4L1105.0 696.4L1101.6 699.9L1087.6 697.9Z" fill="#85858c"/>
<path d="M1087.6 697.9L1101.6 699.9L1098.2 703.4L1084.2 701.4Z" fill="#85858c"/>
<path d="M1084.2 701.4L1098.2 703.4L1094.8 706.9L1080.8 704.9Z" fill="#86868c"/>
<path d="M1080.8 704.9L1094.8 706.9L1091.3 710.4L1077.3 708.4Z" fill="#86868d"/>
<path d="M1077.3 708.4L1091.3 710.4L1087.9 713.9L1073.9 711.9Z" fill="#86868d"/>
<path d="M1073.9 711.9L1087.9 713.9L1084.5 717.4L1070.5 715.4Z" fill="#86868d"/>
<path d="M1070.5 715.4L1084.5 717.4L1081.1 720.9L1067.1 718.9Z" fill="#87878d"/>
<path d="M1067.1 718.9L1081.1 720.9L1077.6 724.4L1063.6 722.4Z" fill="#87878d"/>
<path d="M1063.6 722.4L1077.6 724.4L1074.2 727.9L1060.2 725.9Z" fill="#88888e"/>
<path d="M1060.2 725.9L1074.2 727.9L1070.8 731.4L1056.8 729.4Z" fill="#88888e"/>
<path d="M473.0 574.0L487.0 572.0L487.7 576.3L473.7 578.3Z" fill="#8c8c90"/>
<path d="M473.7 578.3L487.7 576.3L488.3 580.7L474.3 582.7Z" fill="#909093"/>
<path d="M474.3 582.7L488.3 580.7L489.0 585.0L475.0 587.0Z" fill="#939396"/>
<path d="M475.0 587.0L489.0 585.0L489.7 589.3L475.7 591.3Z" fill="#979799"/>
<path d="M475.7 591.3L489.7 589.3L490.3 593.7L476.3 595.7Z" fill="#9a9a9c"/>
<path d="M476.3 595.7L490.3 593.7L491.0 598.0L477.0 600.0Z" fill="#9e9e9f"/>
<path d="M487.0 572.0L501.5 576.5L502.1 580.9L487.7 576.3Z" fill="#8c8c90"/>
<path d="M487.7 576.3L502.1 580.9L502.8 585.2L488.3 580.7Z" fill="#909093"/>
<path d="M488.3 580.7L502.8 585.2L503.4 589.6L489.0 585.0Z" fill="#939396"/>
<path d="M489.0 585.0L503.4 589.6L504.0 594.0L489.7 589.3Z" fill="#979799"/>
<path d="M489.7 589.3L504.0 594.0L504.6 598.4L490.3 593.7Z" fill="#9b9b9c"/>
<path d="M490.3 593.7L504.6 598.4L505.2 602.8L491.0 598.0Z" fill="#9e9ea0"/>
<path d="M501.5 576.5L516.0 581.0L516.6 585.4L502.1 580.9Z" fill="#8d8d90"/>
<path d="M502.1 580.9L516.6 585.4L517.2 589.8L502.8 585.2Z" fill="#909094"/>
<path d="M502.8 585.2L517.2 589.8L517.8 594.2L503.4 589.6Z" fill="#949497"/>
<path d="M503.4 589.6L517.8 594.2L518.3 598.7L504.0 594.0Z" fill="#98989a"/>
<path d="M504.0 594.0L518.3 598.7L518.9 603.1L504.6 598.4Z" fill="#9b9b9d"/>
<path d="M504.6 598.4L518.9 603.1L519.5 607.5L505.2 602.8Z" fill="#9f9fa0"/>
<path d="M516.0 581.0L530.5 585.5L531.0 590.0L516.6 585.4Z" fill="#8d8d91"/>
<path d="M516.6 585.4L531.0 590.0L531.6 594.4L517.2 589.8Z" fill="#919194"/>
<path d="M517.2 589.8L531.6 594.4L532.1 598.9L517.8 594.2Z" fill="#949497"/>
<path d="M517.8 594.2L532.1 598.9L532.7 603.3L518.3 598.7Z" fill="#98989a"/>
<path d="M518.3 598.7L532.7 603.3L533.2 607.8L518.9 603.1Z" fill="#9c9c9e"/>
<path d="M518.9 603.1L533.2 607.8L533.8 612.2L519.5 607.5Z" fill="#9f9fa1"/>
<path d="M530.5 585.5L545.0 590.0L545.5 594.5L531.0 590.0Z" fill="#8e8e91"/>
<path d="M531.0 590.0L545.5 594.5L546.0 599.0L531.6 594.4Z" fill="#919194"/>
<path d="M531.6 594.4L546.0 599.0L546.5 603.5L532.1 598.9Z" fill="#959598"/>
<path d="M532.1 598.9L546.5 603.5L547.0 608.0L532.7 603.3Z" fill="#99999b"/>
<path d="M532.7 603.3L547.0 608.0L547.5 612.5L533.2 607.8Z" fill="#9c9c9e"/>
<path d="M533.2 607.8L547.5 612.5L548.0 617.0L533.8 612.2Z" fill="#a0a0a1"/>
<path d="M545.0 590.0L558.0 594.2L558.3 598.7L545.5 594.5Z" fill="#8e8e92"/>
<path d="M545.5 594.5L558.3 598.7L558.5 603.2L546.0 599.0Z" fill="#929295"/>
<path d="M546.0 599.0L558.5 603.2L558.8 607.7L546.5 603.5Z" fill="#959598"/>
<path d="M546.5 603.5L558.8 607.7L559.1 612.2L547.0 608.0Z" fill="#99999b"/>
<path d="M547.0 608.0L559.1 612.2L559.3 616.7L547.5 612.5Z" fill="#9d9d9e"/>
<path d="M547.5 612.5L559.3 616.7L559.6 621.2L548.0 617.0Z" fill="#a0a0a2"/>
<path d="M558.0 594.2L571.0 598.4L571.0 602.9L558.3 598.7Z" fill="#8e8e92"/>
<path d="M558.3 598.7L571.0 602.9L571.1 607.4L558.5 603.2Z" fill="#929295"/>
<path d="M558.5 603.2L571.1 607.4L571.1 611.9L558.8 607.7Z" fill="#969698"/>
<path d="M558.8 607.7L571.1 611.9L571.1 616.4L559.1 612.2Z" fill="#99999c"/>
<path d="M559.1 612.2L571.1 616.4L571.2 620.9L559.3 616.7Z" fill="#9d9d9f"/>
<path d="M559.3 616.7L571.2 620.9L571.2 625.4L559.6 621.2Z" fill="#a1a1a2"/>
<path d="M571.0 598.4L584.0 602.6L583.8 607.1L571.0 602.9Z" fill="#8e8e92"/>
<path d="M571.0 602.9L583.8 607.1L583.6 611.6L571.1 607.4Z" fill="#929296"/>
<path d="M571.1 607.4L583.6 611.6L583.4 616.1L571.1 611.9Z" fill="#969699"/>
<path d="M571.1 611.9L583.4 616.1L583.2 620.6L571.1 616.4Z" fill="#9a9a9c"/>
<path d="M571.1 616.4L583.2 620.6L583.0 625.1L571.2 620.9Z" fill="#9e9ea0"/>
<path d="M571.2 620.9L583.0 625.1L582.8 629.6L571.2 625.4Z" fill="#a2a2a3"/>
<path d="M584.0 602.6L597.0 606.8L596.6 611.3L583.8 607.1Z" fill="#8f8f92"/>
<path d="M583.8 607.1L596.6 611.3L596.1 615.8L583.6 611.6Z" fill="#939396"/>
<path d="M583.6 611.6L596.1 615.8L595.7 620.3L583.4 616.1Z" fill="#969699"/>
<path d="M583.4 616.1L595.7 620.3L595.3 624.8L583.2 620.6Z" fill="#9a9a9d"/>
<path d="M583.2 620.6L595.3 624.8L594.8 629.3L583.0 625.1Z" fill="#9e9ea0"/>
<path d="M583.0 625.1L594.8 629.3L594.4 633.8L582.8 629.6Z" fill="#a2a2a3"/>
<path d="M597.0 606.8L610.0 611.0L609.3 615.5L596.6 611.3Z" fill="#8f8f93"/>
<path d="M596.6 611.3L609.3 615.5L608.7 620.0L596.1 615.8Z" fill="#939396"/>
<path d="M596.1 615.8L608.7 620.0L608.0 624.5L595.7 620.3Z" fill="#97979a"/>
<path d="M595.7 620.3L608.0 624.5L607.3 629.0L595.3 624.8Z" fill="#9b9b9d"/>
<path d="M595.3 624.8L607.3 629.0L606.7 633.5L594.8 629.3Z" fill="#9f9fa0"/>
<path d="M594.8 629.3L606.7 633.5L606.0 638.0L594.4 633.8Z" fill="#a3a3a4"/>
<path d="M610.0 611.0L623.0 616.3L622.2 620.8L609.3 615.5Z" fill="#8f8f93"/>
<path d="M609.3 615.5L622.2 620.8L621.3 625.2L608.7 620.0Z" fill="#939396"/>
<path d="M608.7 620.0L621.3 625.2L620.5 629.7L608.0 624.5Z" fill="#97979a"/>
<path d="M608.0 624.5L620.5 629.7L619.6 634.2L607.3 629.0Z" fill="#9b9b9d"/>
<path d="M607.3 629.0L619.6 634.2L618.7 638.7L606.7 633.5Z" fill="#9f9fa1"/>
<path d="M606.7 633.5L618.7 638.7L617.9 643.1L606.0 638.0Z" fill="#a3a3a5"/>
<path d="M623.0 616.3L636.1 621.6L635.0 626.0L622.2 620.8Z" fill="#8f8f93"/>
<path d="M622.2 620.8L635.0 626.0L634.0 630.5L621.3 625.2Z" fill="#939397"/>
<path d="M621.3 625.2L634.0 630.5L632.9 635.0L620.5 629.7Z" fill="#98989a"/>
<path d="M620.5 629.7L632.9 635.0L631.8 639.4L619.6 634.2Z" fill="#9c9c9e"/>
<path d="M619.6 634.2L631.8 639.4L630.8 643.8L618.7 638.7Z" fill="#a0a0a2"/>
<path d="M618.7 638.7L630.8 643.8L629.7 648.3L617.9 643.1Z" fill="#a4a4a5"/>
<path d="M636.1 621.6L649.1 626.9L647.9 631.3L635.0 626.0Z" fill="#909093"/>
<path d="M635.0 626.0L647.9 631.3L646.6 635.8L634.0 630.5Z" fill="#949497"/>
<path d="M634.0 630.5L646.6 635.8L645.3 640.2L632.9 635.0Z" fill="#98989b"/>
<path d="M632.9 635.0L645.3 640.2L644.1 644.6L631.8 639.4Z" fill="#9c9c9e"/>
<path d="M631.8 639.4L644.1 644.6L642.8 649.0L630.8 643.8Z" fill="#a0a0a2"/>
<path d="M630.8 643.8L642.8 649.0L641.5 653.5L629.7 648.3Z" fill="#a4a4a6"/>
<path d="M649.1 626.9L662.2 632.2L660.7 636.6L647.9 631.3Z" fill="#909094"/>
<path d="M647.9 631.3L660.7 636.6L659.3 641.0L646.6 635.8Z" fill="#949497"/>
<path d="M646.6 635.8L659.3 641.0L657.8 645.4L645.3 640.2Z" fill="#98989b"/>
<path d="M645.3 640.2L657.8 645.4L656.3 649.8L644.1 644.6Z" fill="#9d9d9f"/>
<path d="M644.1 644.6L656.3 649.8L654.9 654.2L642.8 649.0Z" fill="#a1a1a2"/>
<path d="M642.8 649.0L654.9 654.2L653.4 658.6L641.5 653.5Z" fill="#a5a5a6"/>
<path d="M662.2 632.2L675.2 637.5L673.6 641.9L660.7 636.6Z" fill="#909094"/>
<path d="M660.7 636.6L673.6 641.9L671.9 646.2L659.3 641.0Z" fill="#949498"/>
<path d="M659.3 641.0L671.9 646.2L670.2 650.6L657.8 645.4Z" fill="#99999b"/>
<path d="M657.8 645.4L670.2 650.6L668.6 655.0L656.3 649.8Z" fill="#9d9d9f"/>
<path d="M656.3 649.8L668.6 655.0L666.9 659.4L654.9 654.2Z" fill="#a1a1a3"/>
<path d="M654.9 654.2L666.9 659.4L665.2 663.8L653.4 658.6Z" fill="#a6a6a7"/>
<path d="M675.2 637.5L689.5 641.0L687.9 645.4L673.6 641.9Z" fill="#89898f"/>
<path d="M673.6 641.9L687.9 645.4L686.2 649.8L671.9 646.2Z" fill="#8e8e93"/>
<path d="M671.9 646.2L686.2 649.8L684.6 654.2L670.2 650.6Z" fill="#929296"/>
<path d="M670.2 650.6L684.6 654.2L683.0 658.6L668.6 655.0Z" fill="#97979a"/>
<path d="M668.6 655.0L683.0 658.6L681.3 663.1L666.9 659.4Z" fill="#9b9b9e"/>
<path d="M666.9 659.4L681.3 663.1L679.7 667.5L665.2 663.8Z" fill="#a0a0a1"/>
<path d="M689.5 641.0L703.8 644.5L702.2 649.0L687.9 645.4Z" fill="#89898f"/>
<path d="M687.9 645.4L702.2 649.0L700.6 653.4L686.2 649.8Z" fill="#8e8e93"/>
<path d="M686.2 649.8L700.6 653.4L699.0 657.9L684.6 654.2Z" fill="#929296"/>
<path d="M684.6 654.2L699.0 657.9L697.3 662.3L683.0 658.6Z" fill="#97979a"/>
<path d="M683.0 658.6L697.3 662.3L695.7 666.8L681.3 663.1Z" fill="#9b9b9e"/>
<path d="M681.3 663.1L695.7 666.8L694.1 671.2L679.7 667.5Z" fill="#a0a0a1"/>
<path d="M703.8 644.5L718.1 648.0L716.5 652.5L702.2 649.0Z" fill="#89898f"/>
<path d="M702.2 649.0L716.5 652.5L714.9 657.0L700.6 653.4Z" fill="#8e8e93"/>
<path d="M700.6 653.4L714.9 657.0L713.3 661.5L699.0 657.9Z" fill="#929296"/>
<path d="M699.0 657.9L713.3 661.5L711.7 665.9L697.3 662.3Z" fill="#97979a"/>
<path d="M697.3 662.3L711.7 665.9L710.1 670.4L695.7 666.8Z" fill="#9b9b9e"/>
<path d="M695.7 666.8L710.1 670.4L708.5 674.9L694.1 671.2Z" fill="#a0a0a1"/>
<path d="M718.1 648.0L732.4 651.5L730.8 656.0L716.5 652.5Z" fill="#8a8a8f"/>
<path d="M716.5 652.5L730.8 656.0L729.2 660.5L714.9 657.0Z" fill="#8e8e93"/>
<path d="M714.9 657.0L729.2 660.5L727.7 665.1L713.3 661.5Z" fill="#929296"/>
<path d="M713.3 661.5L727.7 665.1L726.1 669.6L711.7 665.9Z" fill="#97979a"/>
<path d="M711.7 665.9L726.1 669.6L724.5 674.1L710.1 670.4Z" fill="#9b9b9e"/>
<path d="M710.1 670.4L724.5 674.1L723.0 678.6L708.5 674.9Z" fill="#a0a0a1"/>
<path d="M732.4 651.5L746.6 655.0L745.1 659.6L730.8 656.0Z" fill="#8a8a8f"/>
<path d="M730.8 656.0L745.1 659.6L743.5 664.1L729.2 660.5Z" fill="#8e8e93"/>
<path d="M729.2 660.5L743.5 664.1L742.0 668.7L727.7 665.1Z" fill="#939396"/>
<path d="M727.7 665.1L742.0 668.7L740.5 673.2L726.1 669.6Z" fill="#97979a"/>
<path d="M726.1 669.6L740.5 673.2L738.9 677.8L724.5 674.1Z" fill="#9b9b9e"/>
<path d="M724.5 674.1L738.9 677.8L737.4 682.4L723.0 678.6Z" fill="#a0a0a1"/>
<path d="M746.6 655.0L760.9 658.5L759.4 663.1L745.1 659.6Z" fill="#8a8a8f"/>
<path d="M745.1 659.6L759.4 663.1L757.9 667.7L743.5 664.1Z" fill="#8e8e93"/>
<path d="M743.5 664.1L757.9 667.7L756.3 672.3L742.0 668.7Z" fill="#939396"/>
<path d="M742.0 668.7L756.3 672.3L754.8 676.9L740.5 673.2Z" fill="#97979a"/>
<path d="M740.5 673.2L754.8 676.9L753.3 681.5L738.9 677.8Z" fill="#9b9b9e"/>
<path d="M738.9 677.8L753.3 681.5L751.8 686.1L737.4 682.4Z" fill="#a0a0a1"/>
<path d="M760.9 658.5L775.2 662.0L773.7 666.6L759.4 663.1Z" fill="#8a8a8f"/>
<path d="M759.4 663.1L773.7 666.6L772.2 671.3L757.9 667.7Z" fill="#8e8e93"/>
<path d="M757.9 667.7L772.2 671.3L770.7 675.9L756.3 672.3Z" fill="#939397"/>
<path d="M756.3 672.3L770.7 675.9L769.2 680.6L754.8 676.9Z" fill="#97979a"/>
<path d="M754.8 676.9L769.2 680.6L767.7 685.2L753.3 681.5Z" fill="#9b9b9e"/>
<path d="M753.3 681.5L767.7 685.2L766.2 689.8L751.8 686.1Z" fill="#a0a0a1"/>
<path d="M775.2 662.0L789.5 665.5L788.0 670.2L773.7 666.6Z" fill="#8a8a90"/>
<path d="M773.7 666.6L788.0 670.2L786.5 674.9L772.2 671.3Z" fill="#8e8e93"/>
<path d="M772.2 671.3L786.5 674.9L785.0 679.5L770.7 675.9Z" fill="#939397"/>
<path d="M770.7 675.9L785.0 679.5L783.6 684.2L769.2 680.6Z" fill="#97979a"/>
<path d="M769.2 680.6L783.6 684.2L782.1 688.9L767.7 685.2Z" fill="#9b9b9e"/>
<path d="M767.7 685.2L782.1 688.9L780.6 693.5L766.2 689.8Z" fill="#a0a0a1"/>
<path d="M789.5 665.5L803.7 669.0L802.3 673.7L788.0 670.2Z" fill="#8a8a90"/>
<path d="M788.0 670.2L802.3 673.7L800.8 678.4L786.5 674.9Z" fill="#8e8e93"/>
<path d="M786.5 674.9L800.8 678.4L799.4 683.1L785.0 679.5Z" fill="#939397"/>
<path d="M785.0 679.5L799.4 683.1L798.0 687.9L783.6 684.2Z" fill="#97979a"/>
<path d="M783.6 684.2L798.0 687.9L796.5 692.6L782.1 688.9Z" fill="#9b9b9e"/>
<path d="M782.1 688.9L796.5 692.6L795.1 697.3L780.6 693.5Z" fill="#a0a0a1"/>
<path d="M803.7 669.0L818.0 672.5L816.6 677.2L802.3 673.7Z" fill="#8a8a90"/>
<path d="M802.3 673.7L816.6 677.2L815.2 682.0L800.8 678.4Z" fill="#8e8e93"/>
<path d="M800.8 678.4L815.2 682.0L813.8 686.8L799.4 683.1Z" fill="#939397"/>
<path d="M799.4 683.1L813.8 686.8L812.3 691.5L798.0 687.9Z" fill="#97979a"/>
<path d="M798.0 687.9L812.3 691.5L810.9 696.2L796.5 692.6Z" fill="#9b9b9e"/>
<path d="M796.5 692.6L810.9 696.2L809.5 701.0L795.1 697.3Z" fill="#a0a0a1"/>
<path d="M818.0 672.5L833.4 676.4L832.0 680.4L816.8 676.6Z" fill="#8a8a90"/>
<path d="M816.8 676.6L832.0 680.4L830.7 684.5L815.6 680.6Z" fill="#8e8e92"/>
<path d="M815.6 680.6L830.7 684.5L829.3 688.5L814.4 684.7Z" fill="#919195"/>
<path d="M814.4 684.7L829.3 688.5L827.9 692.6L813.1 688.8Z" fill="#949498"/>
<path d="M813.1 688.8L827.9 692.6L826.6 696.6L811.9 692.9Z" fill="#98989b"/>
<path d="M811.9 692.9L826.6 696.6L825.2 700.7L810.7 696.9Z" fill="#9b9b9d"/>
<path d="M810.7 696.9L825.2 700.7L823.9 704.7L809.5 701.0Z" fill="#9f9fa0"/>
<path d="M833.4 676.4L848.8 680.3L847.3 684.3L832.0 680.4Z" fill="#8b8b90"/>
<path d="M832.0 680.4L847.3 684.3L845.8 688.3L830.7 684.5Z" fill="#8e8e92"/>
<path d="M830.7 684.5L845.8 688.3L844.3 692.4L829.3 688.5Z" fill="#919195"/>
<path d="M829.3 688.5L844.3 692.4L842.7 696.4L827.9 692.6Z" fill="#949497"/>
<path d="M827.9 692.6L842.7 696.4L841.2 700.4L826.6 696.6Z" fill="#969699"/>
<path d="M826.6 696.6L841.2 700.4L839.7 704.4L825.2 700.7Z" fill="#99999b"/>
<path d="M825.2 700.7L839.7 704.4L838.2 708.5L823.9 704.7Z" fill="#9c9c9e"/>
<path d="M848.8 680.3L864.2 684.2L862.5 688.2L847.3 684.3Z" fill="#8b8b91"/>
<path d="M847.3 684.3L862.5 688.2L860.9 692.2L845.8 688.3Z" fill="#8e8e92"/>
<path d="M845.8 688.3L860.9 692.2L859.2 696.2L844.3 692.4Z" fill="#909094"/>
<path d="M844.3 692.4L859.2 696.2L857.6 700.2L842.7 696.4Z" fill="#929296"/>
<path d="M842.7 696.4L857.6 700.2L855.9 704.2L841.2 700.4Z" fill="#959598"/>
<path d="M841.2 700.4L855.9 704.2L854.2 708.2L839.7 704.4Z" fill="#979799"/>
<path d="M839.7 704.4L854.2 708.2L852.6 712.2L838.2 708.5Z" fill="#9a9a9b"/>
<path d="M864.2 684.2L879.6 688.1L877.8 692.1L862.5 688.2Z" fill="#8c8c91"/>
<path d="M862.5 688.2L877.8 692.1L876.0 696.1L860.9 692.2Z" fill="#8e8e92"/>
<path d="M860.9 692.2L876.0 696.1L874.2 700.0L859.2 696.2Z" fill="#909094"/>
<path d="M859.2 696.2L874.2 700.0L872.4 704.0L857.6 700.2Z" fill="#929295"/>
<path d="M857.6 700.2L872.4 704.0L870.5 708.0L855.9 704.2Z" fill="#939396"/>
<path d="M855.9 704.2L870.5 708.0L868.7 712.0L854.2 708.2Z" fill="#959597"/>
<path d="M854.2 708.2L868.7 712.0L866.9 715.9L852.6 712.2Z" fill="#979799"/>
<path d="M879.6 688.1L895.0 692.0L893.0 696.0L877.8 692.1Z" fill="#8d8d92"/>
<path d="M877.8 692.1L893.0 696.0L891.1 699.9L876.0 696.1Z" fill="#8e8e92"/>
<path d="M876.0 696.1L891.1 699.9L889.1 703.9L874.2 700.0Z" fill="#8f8f93"/>
<path d="M874.2 700.0L889.1 703.9L887.2 707.8L872.4 704.0Z" fill="#909094"/>
<path d="M872.4 704.0L887.2 707.8L885.2 711.8L870.5 708.0Z" fill="#929295"/>
<path d="M870.5 708.0L885.2 711.8L883.2 715.7L868.7 712.0Z" fill="#939395"/>
<path d="M868.7 712.0L883.2 715.7L881.3 719.7L866.9 715.9Z" fill="#949496"/>
<path d="M895.0 692.0L910.4 695.9L908.3 699.8L893.0 696.0Z" fill="#8d8d92"/>
<path d="M893.0 696.0L908.3 699.8L906.2 703.8L891.1 699.9Z" fill="#8e8e92"/>
<path d="M891.1 699.9L906.2 703.8L904.1 707.7L889.1 703.9Z" fill="#8f8f93"/>
<path d="M889.1 703.9L904.1 707.7L902.0 711.6L887.2 707.8Z" fill="#909093"/>
<path d="M887.2 707.8L902.0 711.6L899.8 715.6L885.2 711.8Z" fill="#909093"/>
<path d="M885.2 711.8L899.8 715.6L897.7 719.5L883.2 715.7Z" fill="#919193"/>
<path d="M883.2 715.7L897.7 719.5L895.6 723.4L881.3 719.7Z" fill="#929293"/>
<path d="M910.4 695.9L925.8 699.8L923.5 703.7L908.3 699.8Z" fill="#8e8e93"/>
<path d="M908.3 699.8L923.5 703.7L921.3 707.6L906.2 703.8Z" fill="#8e8e92"/>
<path d="M906.2 703.8L921.3 707.6L919.0 711.5L904.1 707.7Z" fill="#8e8e92"/>
<path d="M904.1 707.7L919.0 711.5L916.8 715.4L902.0 711.6Z" fill="#8e8e92"/>
<path d="M902.0 711.6L916.8 715.4L914.5 719.3L899.8 715.6Z" fill="#8f8f91"/>
<path d="M899.8 715.6L914.5 719.3L912.2 723.2L897.7 719.5Z" fill="#8f8f91"/>
<path d="M897.7 719.5L912.2 723.2L910.0 727.2L895.6 723.4Z" fill="#8f8f91"/>
<path d="M925.8 699.8L941.2 703.7L938.8 707.6L923.5 703.7Z" fill="#8f8f93"/>
<path d="M923.5 703.7L938.8 707.6L936.4 711.5L921.3 707.6Z" fill="#8e8e92"/>
<path d="M921.3 707.6L936.4 711.5L934.0 715.4L919.0 711.5Z" fill="#8e8e91"/>
<path d="M919.0 711.5L934.0 715.4L931.6 719.2L916.8 715.4Z" fill="#8e8e91"/>
<path d="M916.8 715.4L931.6 719.2L929.2 723.1L914.5 719.3Z" fill="#8d8d90"/>
<path d="M914.5 719.3L929.2 723.1L926.7 727.0L912.2 723.2Z" fill="#8d8d8f"/>
<path d="M912.2 723.2L926.7 727.0L924.3 730.9L910.0 727.2Z" fill="#8c8c8e"/>
<path d="M941.2 703.7L956.6 707.6L954.0 711.5L938.8 707.6Z" fill="#8f8f94"/>
<path d="M938.8 707.6L954.0 711.5L951.5 715.3L936.4 711.5Z" fill="#8e8e92"/>
<path d="M936.4 711.5L951.5 715.3L948.9 719.2L934.0 715.4Z" fill="#8d8d91"/>
<path d="M934.0 715.4L948.9 719.2L946.4 723.0L931.6 719.2Z" fill="#8c8c90"/>
<path d="M931.6 719.2L946.4 723.0L943.8 726.9L929.2 723.1Z" fill="#8c8c8e"/>
<path d="M929.2 723.1L943.8 726.9L941.2 730.8L926.7 727.0Z" fill="#8b8b8d"/>
<path d="M926.7 727.0L941.2 730.8L938.7 734.6L924.3 730.9Z" fill="#8a8a8c"/>
<path d="M956.6 707.6L972.0 711.5L969.3 715.3L954.0 711.5Z" fill="#909094"/>
<path d="M954.0 711.5L969.3 715.3L966.6 719.2L951.5 715.3Z" fill="#8e8e92"/>
<path d="M951.5 715.3L966.6 719.2L963.9 723.0L948.9 719.2Z" fill="#8d8d90"/>
<path d="M948.9 719.2L963.9 723.0L961.2 726.9L946.4 723.0Z" fill="#8c8c8f"/>
<path d="M946.4 723.0L961.2 726.9L958.5 730.7L943.8 726.9Z" fill="#8a8a8d"/>
<path d="M943.8 726.9L958.5 730.7L955.8 734.5L941.2 730.8Z" fill="#89898b"/>
<path d="M941.2 730.8L955.8 734.5L953.0 738.4L938.7 734.6Z" fill="#878789"/>
<path d="M972.0 711.5L987.4 715.4L984.5 719.2L969.3 715.3Z" fill="#919194"/>
<path d="M969.3 715.3L984.5 719.2L981.7 723.0L966.6 719.2Z" fill="#8f8f92"/>
<path d="M966.6 719.2L981.7 723.0L978.8 726.8L963.9 723.0Z" fill="#8d8d90"/>
<path d="M963.9 723.0L978.8 726.8L976.0 730.7L961.2 726.9Z" fill="#8a8a8e"/>
<path d="M961.2 726.9L976.0 730.7L973.1 734.5L958.5 730.7Z" fill="#88888b"/>
<path d="M958.5 730.7L973.1 734.5L970.3 738.3L955.8 734.5Z" fill="#868689"/>
<path d="M955.8 734.5L970.3 738.3L967.4 742.1L953.0 738.4Z" fill="#848487"/>
<path d="M987.4 715.4L1002.5 720.3L998.8 723.2L984.9 718.7Z" fill="#8f8f93"/>
<path d="M984.9 718.7L998.8 723.2L995.0 726.0L982.4 722.1Z" fill="#8c8c8f"/>
<path d="M982.4 722.1L995.0 726.0L991.3 728.9L979.9 725.4Z" fill="#89898c"/>
<path d="M979.9 725.4L991.3 728.9L987.5 731.8L977.4 728.8Z" fill="#858588"/>
<path d="M977.4 728.8L987.5 731.8L983.8 734.6L974.9 732.1Z" fill="#828284"/>
<path d="M974.9 732.1L983.8 734.6L980.1 737.5L972.4 735.4Z" fill="#7e7e81"/>
<path d="M972.4 735.4L980.1 737.5L976.3 740.3L969.9 738.8Z" fill="#7b7b7d"/>
<path d="M969.9 738.8L976.3 740.3L972.6 743.2L967.4 742.1Z" fill="#787879"/>
<path d="M1002.5 720.3L1011.2 722.7L1007.5 725.6L998.8 723.2Z" fill="#8d8d91"/>
<path d="M998.8 723.2L1007.5 725.6L1003.7 728.4L995.0 726.0Z" fill="#89898d"/>
<path d="M995.0 726.0L1003.7 728.4L999.9 731.3L991.3 728.9Z" fill="#858588"/>
<path d="M991.3 728.9L999.9 731.3L996.1 734.2L987.5 731.8Z" fill="#818183"/>
<path d="M987.5 731.8L996.1 734.2L992.3 737.0L983.8 734.6Z" fill="#7c7c7f"/>
<path d="M983.8 734.6L992.3 737.0L988.6 739.9L980.1 737.5Z" fill="#78787a"/>
<path d="M980.1 737.5L988.6 739.9L984.8 742.7L976.3 740.3Z" fill="#747475"/>
<path d="M976.3 740.3L984.8 742.7L981.0 745.6L972.6 743.2Z" fill="#707071"/>
<path d="M1011.2 722.7L1020.0 725.1L1016.2 728.0L1007.5 725.6Z" fill="#8d8d91"/>
<path d="M1007.5 725.6L1016.2 728.0L1012.4 730.8L1003.7 728.4Z" fill="#8a8a8d"/>
<path d="M1003.7 728.4L1012.4 730.8L1008.5 733.7L999.9 731.3Z" fill="#868689"/>
<path d="M999.9 731.3L1008.5 733.7L1004.7 736.5L996.1 734.2Z" fill="#838386"/>
<path d="M996.1 734.2L1004.7 736.5L1000.9 739.4L992.3 737.0Z" fill="#808082"/>
<path d="M992.3 737.0L1000.9 739.4L997.0 742.3L988.6 739.9Z" fill="#7d7d7f"/>
<path d="M988.6 739.9L997.0 742.3L993.2 745.1L984.8 742.7Z" fill="#79797b"/>
<path d="M984.8 742.7L993.2 745.1L989.4 748.0L981.0 745.6Z" fill="#767677"/>
<path d="M1020.0 725.1L1032.3 726.5L1028.9 728.4L1017.2 727.2Z" fill="#8c8c90"/>
<path d="M1017.2 727.2L1028.9 728.4L1025.6 730.4L1014.4 729.3Z" fill="#8a8a8e"/>
<path d="M1014.4 729.3L1025.6 730.4L1022.3 732.3L1011.7 731.3Z" fill="#89898c"/>
<path d="M1011.7 731.3L1022.3 732.3L1018.9 734.2L1008.9 733.4Z" fill="#87878a"/>
<path d="M1008.9 733.4L1018.9 734.2L1015.6 736.1L1006.1 735.5Z" fill="#858588"/>
<path d="M1006.1 735.5L1015.6 736.1L1012.3 738.0L1003.3 737.6Z" fill="#838386"/>
<path d="M1003.3 737.6L1012.3 738.0L1008.9 739.9L1000.5 739.7Z" fill="#828284"/>
<path d="M1000.5 739.7L1008.9 739.9L1005.6 741.8L997.7 741.8Z" fill="#808082"/>
<path d="M997.7 741.8L1005.6 741.8L1002.3 743.7L995.0 743.8Z" fill="#7e7e80"/>
<path d="M995.0 743.8L1002.3 743.7L998.9 745.7L992.2 745.9Z" fill="#7c7c7e"/>
<path d="M992.2 745.9L998.9 745.7L995.6 747.6L989.4 748.0Z" fill="#7b7b7c"/>
<path d="M1032.3 726.5L1044.5 728.0L1040.6 729.7L1028.9 728.4Z" fill="#8a8a8f"/>
<path d="M1028.9 728.4L1040.6 729.7L1036.8 731.5L1025.6 730.4Z" fill="#89898e"/>
<path d="M1025.6 730.4L1036.8 731.5L1032.9 733.2L1022.3 732.3Z" fill="#88888c"/>
<path d="M1022.3 732.3L1032.9 733.2L1029.0 734.9L1018.9 734.2Z" fill="#87878a"/>
<path d="M1018.9 734.2L1029.0 734.9L1025.1 736.7L1015.6 736.1Z" fill="#858589"/>
<path d="M1015.6 736.1L1025.1 736.7L1021.2 738.4L1012.3 738.0Z" fill="#848487"/>
<path d="M1012.3 738.0L1021.2 738.4L1017.3 740.2L1008.9 739.9Z" fill="#838386"/>
<path d="M1008.9 739.9L1017.3 740.2L1013.5 741.9L1005.6 741.8Z" fill="#818184"/>
<path d="M1005.6 741.8L1013.5 741.9L1009.6 743.6L1002.3 743.7Z" fill="#808082"/>
<path d="M1002.3 743.7L1009.6 743.6L1005.7 745.4L998.9 745.7Z" fill="#7f7f81"/>
<path d="M998.9 745.7L1005.7 745.4L1001.8 747.1L995.6 747.6Z" fill="#7e7e7f"/>
<path d="M1044.5 728.0L1056.8 729.4L1052.4 731.0L1040.6 729.7Z" fill="#89898e"/>
<path d="M1040.6 729.7L1052.4 731.0L1047.9 732.5L1036.8 731.5Z" fill="#88888d"/>
<path d="M1036.8 731.5L1047.9 732.5L1043.5 734.1L1032.9 733.2Z" fill="#87878c"/>
<path d="M1032.9 733.2L1043.5 734.1L1039.1 735.7L1029.0 734.9Z" fill="#86868b"/>
<path d="M1029.0 734.9L1039.1 735.7L1034.6 737.3L1025.1 736.7Z" fill="#85858a"/>
<path d="M1025.1 736.7L1034.6 737.3L1030.2 738.8L1021.2 738.4Z" fill="#858588"/>
<path d="M1021.2 738.4L1030.2 738.8L1025.7 740.4L1017.3 740.2Z" fill="#848487"/>
<path d="M1017.3 740.2L1025.7 740.4L1021.3 742.0L1013.5 741.9Z" fill="#838386"/>
<path d="M1013.5 741.9L1021.3 742.0L1016.9 743.6L1009.6 743.6Z" fill="#828285"/>
<path d="M1009.6 743.6L1016.9 743.6L1012.4 745.1L1005.7 745.4Z" fill="#828284"/>
<path d="M1005.7 745.4L1012.4 745.1L1008.0 746.7L1001.8 747.1Z" fill="#818183"/>
<path d="M1056.8 729.4L1070.8 731.4L1066.4 733.0L1052.4 731.0Z" fill="#88888e"/>
<path d="M1052.4 731.0L1066.4 733.0L1061.9 734.5L1047.9 732.5Z" fill="#87878d"/>
<path d="M1047.9 732.5L1061.9 734.5L1057.5 736.1L1043.5 734.1Z" fill="#87878c"/>
<path d="M1043.5 734.1L1057.5 736.1L1053.1 737.7L1039.1 735.7Z" fill="#86868b"/>
<path d="M1039.1 735.7L1053.1 737.7L1048.6 739.3L1034.6 737.3Z" fill="#86868a"/>
<path d="M1034.6 737.3L1048.6 739.3L1044.2 740.8L1030.2 738.8Z" fill="#858589"/>
<path d="M1030.2 738.8L1044.2 740.8L1039.7 742.4L1025.7 740.4Z" fill="#848488"/>
<path d="M1025.7 740.4L1039.7 742.4L1035.3 744.0L1021.3 742.0Z" fill="#848487"/>
<path d="M1021.3 742.0L1035.3 744.0L1030.9 745.6L1016.9 743.6Z" fill="#838386"/>
<path d="M1016.9 743.6L1030.9 745.6L1026.4 747.1L1012.4 745.1Z" fill="#838385"/>
<path d="M1012.4 745.1L1026.4 747.1L1022.0 748.7L1008.0 746.7Z" fill="#828284"/>
<path d="M477.0 600.0L491.0 598.0L492.2 602.8L478.2 604.8Z" fill="#9e9e9f"/>
<path d="M478.2 604.8L492.2 602.8L493.4 607.6L479.4 609.6Z" fill="#99999a"/>
<path d="M479.4 609.6L493.4 607.6L494.6 612.4L480.6 614.4Z" fill="#959596"/>
<path d="M480.6 614.4L494.6 612.4L495.8 617.2L481.8 619.2Z" fill="#919191"/>
<path d="M481.8 619.2L495.8 617.2L497.0 622.0L483.0 624.0Z" fill="#8c8c8c"/>
<path d="M491.0 598.0L505.2 602.8L506.2 607.5L492.2 602.8Z" fill="#9e9e9f"/>
<path d="M492.2 602.8L506.2 607.5L507.2 612.4L493.4 607.6Z" fill="#99999a"/>
<path d="M493.4 607.6L507.2 612.4L508.2 617.1L494.6 612.4Z" fill="#949495"/>
<path d="M494.6 612.4L508.2 617.1L509.2 622.0L495.8 617.2Z" fill="#909090"/>
<path d="M495.8 617.2L509.2 622.0L510.2 626.8L497.0 622.0Z" fill="#8b8b8b"/>
<path d="M505.2 602.8L519.5 607.5L520.3 612.3L506.2 607.5Z" fill="#9e9e9f"/>
<path d="M506.2 607.5L520.3 612.3L521.1 617.1L507.2 612.4Z" fill="#99999a"/>
<path d="M507.2 612.4L521.1 617.1L521.9 621.9L508.2 617.1Z" fill="#949494"/>
<path d="M508.2 617.1L521.9 621.9L522.7 626.7L509.2 622.0Z" fill="#8e8e8e"/>
<path d="M509.2 622.0L522.7 626.7L523.5 631.5L510.2 626.8Z" fill="#898989"/>
<path d="M519.5 607.5L533.8 612.2L534.4 617.0L520.3 612.3Z" fill="#9e9e9f"/>
<path d="M520.3 612.3L534.4 617.0L535.0 621.9L521.1 617.1Z" fill="#989899"/>
<path d="M521.1 617.1L535.0 621.9L535.5 626.6L521.9 621.9Z" fill="#929293"/>
<path d="M521.9 621.9L535.5 626.6L536.1 631.5L522.7 626.7Z" fill="#8d8d8d"/>
<path d="M522.7 626.7L536.1 631.5L536.8 636.2L523.5 631.5Z" fill="#878787"/>
<path d="M533.8 612.2L548.0 617.0L548.4 621.8L534.4 617.0Z" fill="#9e9e9f"/>
<path d="M534.4 617.0L548.4 621.8L548.8 626.6L535.0 621.9Z" fill="#989899"/>
<path d="M535.0 621.9L548.8 626.6L549.2 631.4L535.5 626.6Z" fill="#929292"/>
<path d="M535.5 626.6L549.2 631.4L549.6 636.2L536.1 631.5Z" fill="#8b8b8b"/>
<path d="M536.1 631.5L549.6 636.2L550.0 641.0L536.8 636.2Z" fill="#848485"/>
<path d="M548.0 617.0L562.5 622.2L562.8 627.0L548.4 621.8Z" fill="#9f9fa0"/>
<path d="M548.4 621.8L562.8 627.0L563.1 631.9L548.8 626.6Z" fill="#989899"/>
<path d="M548.8 626.6L563.1 631.9L563.4 636.6L549.2 631.4Z" fill="#919192"/>
<path d="M549.2 631.4L563.4 636.6L563.7 641.5L549.6 636.2Z" fill="#8a8a8b"/>
<path d="M549.6 636.2L563.7 641.5L564.0 646.2L550.0 641.0Z" fill="#848484"/>
<path d="M562.5 622.2L577.0 627.5L577.2 632.3L562.8 627.0Z" fill="#a0a0a1"/>
<path d="M562.8 627.0L577.2 632.3L577.4 637.1L563.1 631.9Z" fill="#99999a"/>
<path d="M563.1 631.9L577.4 637.1L577.6 641.9L563.4 636.6Z" fill="#929292"/>
<path d="M563.4 636.6L577.6 641.9L577.8 646.7L563.7 641.5Z" fill="#8b8b8b"/>
<path d="M563.7 641.5L577.8 646.7L578.0 651.5L564.0 646.2Z" fill="#848484"/>
<path d="M577.0 627.5L591.5 632.8L591.6 637.5L577.2 632.3Z" fill="#a0a0a1"/>
<path d="M577.2 632.3L591.6 637.5L591.7 642.4L577.4 637.1Z" fill="#99999a"/>
<path d="M577.4 637.1L591.7 642.4L591.8 647.1L577.6 641.9Z" fill="#939393"/>
<path d="M577.6 641.9L591.8 647.1L591.9 652.0L577.8 646.7Z" fill="#8c8c8c"/>
<path d="M577.8 646.7L591.9 652.0L592.0 656.8L578.0 651.5Z" fill="#858585"/>
<path d="M591.5 632.8L606.0 638.0L606.0 642.8L591.6 637.5Z" fill="#a1a1a2"/>
<path d="M591.6 637.5L606.0 642.8L606.0 647.6L591.7 642.4Z" fill="#9a9a9b"/>
<path d="M591.7 642.4L606.0 647.6L606.0 652.4L591.8 647.1Z" fill="#939394"/>
<path d="M591.8 647.1L606.0 652.4L606.0 657.2L591.9 652.0Z" fill="#8c8c8d"/>
<path d="M591.9 652.0L606.0 657.2L606.0 662.0L592.0 656.8Z" fill="#858585"/>
<path d="M606.0 638.0L617.9 643.1L617.8 647.2L606.0 642.0Z" fill="#a2a2a3"/>
<path d="M606.0 642.0L617.8 647.2L617.7 651.2L606.0 646.0Z" fill="#9d9d9d"/>
<path d="M606.0 646.0L617.7 651.2L617.6 655.3L606.0 650.0Z" fill="#979798"/>
<path d="M606.0 650.0L617.6 655.3L617.5 659.4L606.0 654.0Z" fill="#919192"/>
<path d="M606.0 654.0L617.5 659.4L617.4 663.4L606.0 658.0Z" fill="#8b8b8c"/>
<path d="M606.0 658.0L617.4 663.4L617.3 667.5L606.0 662.0Z" fill="#868686"/>
<path d="M617.9 643.1L629.7 648.3L629.5 652.4L617.8 647.2Z" fill="#a3a3a4"/>
<path d="M617.8 647.2L629.5 652.4L629.3 656.5L617.7 651.2Z" fill="#9e9e9e"/>
<path d="M617.7 651.2L629.3 656.5L629.2 660.6L617.6 655.3Z" fill="#989899"/>
<path d="M617.6 655.3L629.2 660.6L629.0 664.7L617.5 659.4Z" fill="#929293"/>
<path d="M617.5 659.4L629.0 664.7L628.8 668.8L617.4 663.4Z" fill="#8d8d8d"/>
<path d="M617.4 663.4L628.8 668.8L628.6 672.9L617.3 667.5Z" fill="#878787"/>
<path d="M629.7 648.3L641.5 653.5L641.3 657.6L629.5 652.4Z" fill="#a4a4a5"/>
<path d="M629.5 652.4L641.3 657.6L641.0 661.8L629.3 656.5Z" fill="#9e9e9f"/>
<path d="M629.3 656.5L641.0 661.8L640.7 665.9L629.2 660.6Z" fill="#99999a"/>
<path d="M629.2 660.6L640.7 665.9L640.4 670.1L629.0 664.7Z" fill="#949494"/>
<path d="M629.0 664.7L640.4 670.1L640.2 674.2L628.8 668.8Z" fill="#8e8e8e"/>
<path d="M628.8 668.8L640.2 674.2L639.9 678.4L628.6 672.9Z" fill="#898989"/>
<path d="M641.5 653.5L653.4 658.6L653.0 662.8L641.3 657.6Z" fill="#a4a4a5"/>
<path d="M641.3 657.6L653.0 662.8L652.7 667.0L641.0 661.8Z" fill="#9f9fa0"/>
<path d="M641.0 661.8L652.7 667.0L652.3 671.2L640.7 665.9Z" fill="#9a9a9b"/>
<path d="M640.7 665.9L652.3 671.2L651.9 675.4L640.4 670.1Z" fill="#959595"/>
<path d="M640.4 670.1L651.9 675.4L651.6 679.6L640.2 674.2Z" fill="#8f8f90"/>
<path d="M640.2 674.2L651.6 679.6L651.2 683.8L639.9 678.4Z" fill="#8a8a8a"/>
<path d="M653.4 658.6L665.2 663.8L664.8 668.0L653.0 662.8Z" fill="#a5a5a6"/>
<path d="M653.0 662.8L664.8 668.0L664.3 672.2L652.7 667.0Z" fill="#a0a0a1"/>
<path d="M652.7 667.0L664.3 672.2L663.9 676.5L652.3 671.2Z" fill="#9b9b9c"/>
<path d="M652.3 671.2L663.9 676.5L663.4 680.8L651.9 675.4Z" fill="#969696"/>
<path d="M651.9 675.4L663.4 680.8L663.0 685.0L651.6 679.6Z" fill="#919191"/>
<path d="M651.6 679.6L663.0 685.0L662.5 689.2L651.2 683.8Z" fill="#8c8c8c"/>
<path d="M665.2 663.8L679.7 667.5L679.2 671.8L664.8 668.0Z" fill="#a0a0a0"/>
<path d="M664.8 668.0L679.2 671.8L678.7 676.0L664.3 672.2Z" fill="#9b9b9b"/>
<path d="M664.3 672.2L678.7 676.0L678.2 680.3L663.9 676.5Z" fill="#969696"/>
<path d="M663.9 676.5L678.2 680.3L677.7 684.6L663.4 680.8Z" fill="#919191"/>
<path d="M663.4 680.8L677.7 684.6L677.2 688.9L663.0 685.0Z" fill="#8c8c8c"/>
<path d="M663.0 685.0L677.2 688.9L676.7 693.1L662.5 689.2Z" fill="#878787"/>
<path d="M679.7 667.5L694.1 671.2L693.6 675.5L679.2 671.8Z" fill="#9f9fa0"/>
<path d="M679.2 671.8L693.6 675.5L693.0 679.8L678.7 676.0Z" fill="#9a9a9b"/>
<path d="M678.7 676.0L693.0 679.8L692.5 684.1L678.2 680.3Z" fill="#959596"/>
<path d="M678.2 680.3L692.5 684.1L691.9 688.4L677.7 684.6Z" fill="#909091"/>
<path d="M677.7 684.6L691.9 688.4L691.4 692.7L677.2 688.9Z" fill="#8b8b8b"/>
<path d="M677.2 688.9L691.4 692.7L690.9 697.0L676.7 693.1Z" fill="#868686"/>
<path d="M694.1 671.2L708.5 674.9L707.9 679.3L693.6 675.5Z" fill="#9f9fa0"/>
<path d="M693.6 675.5L707.9 679.3L707.4 683.6L693.0 679.8Z" fill="#9a9a9b"/>
<path d="M693.0 679.8L707.4 683.6L706.8 687.9L692.5 684.1Z" fill="#959596"/>
<path d="M692.5 684.1L706.8 687.9L706.2 692.3L691.9 688.4Z" fill="#909090"/>
<path d="M691.9 688.4L706.2 692.3L705.6 696.6L691.4 692.7Z" fill="#8b8b8b"/>
<path d="M691.4 692.7L705.6 696.6L705.0 701.0L690.9 697.0Z" fill="#858585"/>
<path d="M708.5 674.9L723.0 678.6L722.3 683.0L707.9 679.3Z" fill="#9f9fa0"/>
<path d="M707.9 679.3L722.3 683.0L721.7 687.4L707.4 683.6Z" fill="#9a9a9b"/>
<path d="M707.4 683.6L721.7 687.4L721.1 691.8L706.8 687.9Z" fill="#959595"/>
<path d="M706.8 687.9L721.1 691.8L720.5 696.1L706.2 692.3Z" fill="#8f8f90"/>
<path d="M706.2 692.3L720.5 696.1L719.8 700.5L705.6 696.6Z" fill="#8a8a8a"/>
<path d="M705.6 696.6L719.8 700.5L719.2 704.9L705.0 701.0Z" fill="#858585"/>
<path d="M723.0 678.6L737.4 682.4L736.7 686.8L722.3 683.0Z" fill="#9f9fa0"/>
<path d="M722.3 683.0L736.7 686.8L736.0 691.2L721.7 687.4Z" fill="#9a9a9a"/>
<path d="M721.7 687.4L736.0 691.2L735.4 695.6L721.1 691.8Z" fill="#949495"/>
<path d="M721.1 691.8L735.4 695.6L734.7 700.0L720.5 696.1Z" fill="#8f8f8f"/>
<path d="M720.5 696.1L734.7 700.0L734.0 704.4L719.8 700.5Z" fill="#898989"/>
<path d="M719.8 700.5L734.0 704.4L733.4 708.8L719.2 704.9Z" fill="#848484"/>
<path d="M737.4 682.4L751.8 686.1L751.1 690.5L736.7 686.8Z" fill="#9f9fa0"/>
<path d="M736.7 686.8L751.1 690.5L750.4 695.0L736.0 691.2Z" fill="#9a9a9a"/>
<path d="M736.0 691.2L750.4 695.0L749.7 699.4L735.4 695.6Z" fill="#949494"/>
<path d="M735.4 695.6L749.7 699.4L749.0 703.8L734.7 700.0Z" fill="#8e8e8f"/>
<path d="M734.7 700.0L749.0 703.8L748.3 708.2L734.0 704.4Z" fill="#898989"/>
<path d="M734.0 704.4L748.3 708.2L747.5 712.6L733.4 708.8Z" fill="#838383"/>
<path d="M751.8 686.1L766.2 689.8L765.5 694.3L751.1 690.5Z" fill="#9f9fa0"/>
<path d="M751.1 690.5L765.5 694.3L764.7 698.7L750.4 695.0Z" fill="#99999a"/>
<path d="M750.4 695.0L764.7 698.7L764.0 703.2L749.7 699.4Z" fill="#939394"/>
<path d="M749.7 699.4L764.0 703.2L763.2 707.6L749.0 703.8Z" fill="#8e8e8e"/>
<path d="M749.0 703.8L763.2 707.6L762.5 712.1L748.3 708.2Z" fill="#888888"/>
<path d="M748.3 708.2L762.5 712.1L761.7 716.5L747.5 712.6Z" fill="#828282"/>
<path d="M766.2 689.8L780.6 693.5L779.9 698.0L765.5 694.3Z" fill="#9f9fa0"/>
<path d="M765.5 694.3L779.9 698.0L779.1 702.5L764.7 698.7Z" fill="#99999a"/>
<path d="M764.7 698.7L779.1 702.5L778.3 707.0L764.0 703.2Z" fill="#939394"/>
<path d="M764.0 703.2L778.3 707.0L777.5 711.5L763.2 707.6Z" fill="#8d8d8e"/>
<path d="M763.2 707.6L777.5 711.5L776.7 716.0L762.5 712.1Z" fill="#878787"/>
<path d="M762.5 712.1L776.7 716.0L775.9 720.5L761.7 716.5Z" fill="#818181"/>
<path d="M780.6 693.5L795.1 697.3L794.2 701.8L779.9 698.0Z" fill="#9f9fa0"/>
<path d="M779.9 698.0L794.2 701.8L793.4 706.3L779.1 702.5Z" fill="#99999a"/>
<path d="M779.1 702.5L793.4 706.3L792.6 710.8L778.3 707.0Z" fill="#939393"/>
<path d="M778.3 707.0L792.6 710.8L791.7 715.3L777.5 711.5Z" fill="#8d8d8d"/>
<path d="M777.5 711.5L791.7 715.3L790.9 719.8L776.7 716.0Z" fill="#878787"/>
<path d="M776.7 716.0L790.9 719.8L790.1 724.4L775.9 720.5Z" fill="#808080"/>
<path d="M795.1 697.3L809.5 701.0L808.6 705.5L794.2 701.8Z" fill="#9f9fa0"/>
<path d="M794.2 701.8L808.6 705.5L807.8 710.1L793.4 706.3Z" fill="#999999"/>
<path d="M793.4 706.3L807.8 710.1L806.9 714.6L792.6 710.8Z" fill="#929293"/>
<path d="M792.6 710.8L806.9 714.6L806.0 719.2L791.7 715.3Z" fill="#8c8c8d"/>
<path d="M791.7 715.3L806.0 719.2L805.1 723.7L790.9 719.8Z" fill="#868686"/>
<path d="M790.9 719.8L805.1 723.7L804.2 728.2L790.1 724.4Z" fill="#808080"/>
<path d="M809.5 701.0L823.9 704.7L822.9 708.6L808.8 704.9Z" fill="#9e9e9f"/>
<path d="M808.8 704.9L822.9 708.6L822.0 712.4L808.0 708.8Z" fill="#989899"/>
<path d="M808.0 708.8L822.0 712.4L821.1 716.3L807.2 712.7Z" fill="#939394"/>
<path d="M807.2 712.7L821.1 716.3L820.1 720.1L806.5 716.6Z" fill="#8e8e8e"/>
<path d="M806.5 716.6L820.1 720.1L819.2 724.0L805.8 720.5Z" fill="#888888"/>
<path d="M805.8 720.5L819.2 724.0L818.3 727.8L805.0 724.4Z" fill="#838383"/>
<path d="M805.0 724.4L818.3 727.8L817.3 731.7L804.2 728.2Z" fill="#7d7d7d"/>
<path d="M823.9 704.7L838.2 708.5L837.1 712.3L822.9 708.6Z" fill="#9b9b9c"/>
<path d="M822.9 708.6L837.1 712.3L836.0 716.1L822.0 712.4Z" fill="#959596"/>
<path d="M822.0 712.4L836.0 716.1L834.9 719.9L821.1 716.3Z" fill="#909091"/>
<path d="M821.1 716.3L834.9 719.9L833.8 723.7L820.1 720.1Z" fill="#8b8b8b"/>
<path d="M820.1 720.1L833.8 723.7L832.7 727.5L819.2 724.0Z" fill="#858586"/>
<path d="M819.2 724.0L832.7 727.5L831.6 731.3L818.3 727.8Z" fill="#808080"/>
<path d="M818.3 727.8L831.6 731.3L830.4 735.1L817.3 731.7Z" fill="#7a7a7a"/>
<path d="M838.2 708.5L852.6 712.2L851.3 716.0L837.1 712.3Z" fill="#989899"/>
<path d="M837.1 712.3L851.3 716.0L850.0 719.7L836.0 716.1Z" fill="#939394"/>
<path d="M836.0 716.1L850.0 719.7L848.7 723.5L834.9 719.9Z" fill="#8d8d8e"/>
<path d="M834.9 719.9L848.7 723.5L847.4 727.2L833.8 723.7Z" fill="#888888"/>
<path d="M833.8 723.7L847.4 727.2L846.1 731.0L832.7 727.5Z" fill="#828283"/>
<path d="M832.7 727.5L846.1 731.0L844.8 734.8L831.6 731.3Z" fill="#7d7d7d"/>
<path d="M831.6 731.3L844.8 734.8L843.5 738.5L830.4 735.1Z" fill="#777778"/>
<path d="M852.6 712.2L866.9 715.9L865.4 719.7L851.3 716.0Z" fill="#959596"/>
<path d="M851.3 716.0L865.4 719.7L864.0 723.4L850.0 719.7Z" fill="#909091"/>
<path d="M850.0 719.7L864.0 723.4L862.5 727.1L848.7 723.5Z" fill="#8a8a8b"/>
<path d="M848.7 723.5L862.5 727.1L861.0 730.8L847.4 727.2Z" fill="#858585"/>
<path d="M847.4 727.2L861.0 730.8L859.6 734.5L846.1 731.0Z" fill="#7f7f80"/>
<path d="M846.1 731.0L859.6 734.5L858.1 738.2L844.8 734.8Z" fill="#7a7a7a"/>
<path d="M844.8 734.8L858.1 738.2L856.6 741.9L843.5 738.5Z" fill="#757575"/>
<path d="M866.9 715.9L881.3 719.7L879.6 723.4L865.4 719.7Z" fill="#929294"/>
<path d="M865.4 719.7L879.6 723.4L878.0 727.0L864.0 723.4Z" fill="#8d8d8e"/>
<path d="M864.0 723.4L878.0 727.0L876.3 730.7L862.5 727.1Z" fill="#878788"/>
<path d="M862.5 727.1L876.3 730.7L874.7 734.4L861.0 730.8Z" fill="#828283"/>
<path d="M861.0 730.8L874.7 734.4L873.0 738.0L859.6 734.5Z" fill="#7c7c7d"/>
<path d="M859.6 734.5L873.0 738.0L871.4 741.7L858.1 738.2Z" fill="#777777"/>
<path d="M858.1 738.2L871.4 741.7L869.7 745.4L856.6 741.9Z" fill="#727272"/>
<path d="M881.3 719.7L895.6 723.4L893.8 727.0L879.6 723.4Z" fill="#8f8f91"/>
<path d="M879.6 723.4L893.8 727.0L892.0 730.7L878.0 727.0Z" fill="#8a8a8b"/>
<path d="M878.0 727.0L892.0 730.7L890.1 734.3L876.3 730.7Z" fill="#848485"/>
<path d="M876.3 730.7L890.1 734.3L888.3 737.9L874.7 734.4Z" fill="#7f7f80"/>
<path d="M874.7 734.4L888.3 737.9L886.5 741.5L873.0 738.0Z" fill="#7a7a7a"/>
<path d="M873.0 738.0L886.5 741.5L884.7 745.2L871.4 741.7Z" fill="#747474"/>
<path d="M871.4 741.7L884.7 745.2L882.8 748.8L869.7 745.4Z" fill="#6f6f6f"/>
<path d="M895.6 723.4L910.0 727.2L908.0 730.7L893.8 727.0Z" fill="#8c8c8e"/>
<path d="M893.8 727.0L908.0 730.7L906.0 734.3L892.0 730.7Z" fill="#878788"/>
<path d="M892.0 730.7L906.0 734.3L904.0 737.9L890.1 734.3Z" fill="#828283"/>
<path d="M890.1 734.3L904.0 737.9L901.9 741.5L888.3 737.9Z" fill="#7c7c7d"/>
<path d="M888.3 737.9L901.9 741.5L899.9 745.1L886.5 741.5Z" fill="#777777"/>
<path d="M886.5 741.5L899.9 745.1L897.9 748.6L884.7 745.2Z" fill="#717172"/>
<path d="M884.7 745.2L897.9 748.6L895.9 752.2L882.8 748.8Z" fill="#6c6c6c"/>
<path d="M910.0 727.2L924.3 730.9L922.1 734.4L908.0 730.7Z" fill="#89898b"/>
<path d="M908.0 730.7L922.1 734.4L920.0 738.0L906.0 734.3Z" fill="#848485"/>
<path d="M906.0 734.3L920.0 738.0L917.8 741.5L904.0 737.9Z" fill="#7f7f80"/>
<path d="M904.0 737.9L917.8 741.5L915.6 745.0L901.9 741.5Z" fill="#79797a"/>
<path d="M901.9 741.5L915.6 745.0L913.4 748.6L899.9 745.1Z" fill="#747474"/>
<path d="M899.9 745.1L913.4 748.6L911.2 752.1L897.9 748.6Z" fill="#6e6e6f"/>
<path d="M897.9 748.6L911.2 752.1L909.0 755.6L895.9 752.2Z" fill="#696969"/>
<path d="M924.3 730.9L938.7 734.6L936.3 738.1L922.1 734.4Z" fill="#878788"/>
<path d="M922.1 734.4L936.3 738.1L934.0 741.6L920.0 738.0Z" fill="#818183"/>
<path d="M920.0 738.0L934.0 741.6L931.6 745.1L917.8 741.5Z" fill="#7c7c7d"/>
<path d="M917.8 741.5L931.6 745.1L929.2 748.6L915.6 745.0Z" fill="#767677"/>
<path d="M915.6 745.0L929.2 748.6L926.8 752.1L913.4 748.6Z" fill="#717171"/>
<path d="M913.4 748.6L926.8 752.1L924.5 755.6L911.2 752.1Z" fill="#6b6b6c"/>
<path d="M911.2 752.1L924.5 755.6L922.1 759.1L909.0 755.6Z" fill="#666666"/>
<path d="M938.7 734.6L953.0 738.4L950.5 741.8L936.3 738.1Z" fill="#848485"/>
<path d="M936.3 738.1L950.5 741.8L947.9 745.3L934.0 741.6Z" fill="#7e7e80"/>
<path d="M934.0 741.6L947.9 745.3L945.4 748.7L931.6 745.1Z" fill="#79797a"/>
<path d="M931.6 745.1L945.4 748.7L942.9 752.1L929.2 748.6Z" fill="#737374"/>
<path d="M929.2 748.6L942.9 752.1L940.3 755.6L926.8 752.1Z" fill="#6e6e6f"/>
<path d="M926.8 752.1L940.3 755.6L937.8 759.0L924.5 755.6Z" fill="#696969"/>
<path d="M924.5 755.6L937.8 759.0L935.2 762.5L922.1 759.1Z" fill="#636363"/>
<path d="M953.0 738.4L967.4 742.1L964.7 745.5L950.5 741.8Z" fill="#818183"/>
<path d="M950.5 741.8L964.7 745.5L961.9 748.9L947.9 745.3Z" fill="#7b7b7d"/>
<path d="M947.9 745.3L961.9 748.9L959.2 752.3L945.4 748.7Z" fill="#767677"/>
<path d="M945.4 748.7L959.2 752.3L956.5 755.7L942.9 752.1Z" fill="#707071"/>
<path d="M942.9 752.1L956.5 755.7L953.8 759.1L940.3 755.6Z" fill="#6b6b6c"/>
<path d="M940.3 755.6L953.8 759.1L951.0 762.5L937.8 759.0Z" fill="#666666"/>
<path d="M937.8 759.0L951.0 762.5L948.3 765.9L935.2 762.5Z" fill="#606060"/>
<path d="M967.4 742.1L972.6 743.2L969.7 747.0L964.7 745.5Z" fill="#747475"/>
<path d="M964.7 745.5L969.7 747.0L966.9 750.9L961.9 748.9Z" fill="#707071"/>
<path d="M961.9 748.9L966.9 750.9L964.0 754.7L959.2 752.3Z" fill="#6c6c6d"/>
<path d="M959.2 752.3L964.0 754.7L961.2 758.6L956.5 755.7Z" fill="#686868"/>
<path d="M956.5 755.7L961.2 758.6L958.3 762.4L953.8 759.1Z" fill="#636364"/>
<path d="M953.8 759.1L958.3 762.4L955.5 766.3L951.0 762.5Z" fill="#5f5f60"/>
<path d="M951.0 762.5L955.5 766.3L952.6 770.1L948.3 765.9Z" fill="#5b5b5b"/>
<path d="M972.6 743.2L981.0 745.6L978.1 749.4L969.7 747.0Z" fill="#6c6c6d"/>
<path d="M969.7 747.0L978.1 749.4L975.3 753.2L966.9 750.9Z" fill="#6a6a6b"/>
<path d="M966.9 750.9L975.3 753.2L972.4 757.0L964.0 754.7Z" fill="#676768"/>
<path d="M964.0 754.7L972.4 757.0L969.5 760.8L961.2 758.6Z" fill="#656566"/>
<path d="M961.2 758.6L969.5 760.8L966.7 764.6L958.3 762.4Z" fill="#636363"/>
<path d="M958.3 762.4L966.7 764.6L963.8 768.4L955.5 766.3Z" fill="#606060"/>
<path d="M955.5 766.3L963.8 768.4L961.0 772.2L952.6 770.1Z" fill="#5e5e5e"/>
<path d="M981.0 745.6L989.4 748.0L986.5 751.8L978.1 749.4Z" fill="#747475"/>
<path d="M978.1 749.4L986.5 751.8L983.7 755.5L975.3 753.2Z" fill="#727273"/>
<path d="M975.3 753.2L983.7 755.5L980.8 759.3L972.4 757.0Z" fill="#717171"/>
<path d="M972.4 757.0L980.8 759.3L977.9 763.0L969.5 760.8Z" fill="#6f6f70"/>
<path d="M969.5 760.8L977.9 763.0L975.0 766.8L966.7 764.6Z" fill="#6d6d6e"/>
<path d="M966.7 764.6L975.0 766.8L972.2 770.5L963.8 768.4Z" fill="#6c6c6c"/>
<path d="M963.8 768.4L972.2 770.5L969.3 774.3L961.0 772.2Z" fill="#6a6a6a"/>
<path d="M989.4 748.0L998.7 747.4L996.2 750.8L986.9 751.3Z" fill="#7a7a7b"/>
<path d="M986.9 751.3L996.2 750.8L993.6 754.3L984.4 754.6Z" fill="#79797a"/>
<path d="M984.4 754.6L993.6 754.3L991.1 757.8L981.9 757.9Z" fill="#787878"/>
<path d="M981.9 757.9L991.1 757.8L988.5 761.3L979.3 761.1Z" fill="#767677"/>
<path d="M979.3 761.1L988.5 761.3L986.0 764.8L976.8 764.4Z" fill="#757576"/>
<path d="M976.8 764.4L986.0 764.8L983.4 768.3L974.3 767.7Z" fill="#747475"/>
<path d="M974.3 767.7L983.4 768.3L980.9 771.8L971.8 771.0Z" fill="#737373"/>
<path d="M971.8 771.0L980.9 771.8L978.3 775.2L969.3 774.3Z" fill="#727272"/>
<path d="M998.7 747.4L1008.0 746.7L1005.4 750.4L996.2 750.8Z" fill="#7f7f80"/>
<path d="M996.2 750.8L1005.4 750.4L1002.9 754.1L993.6 754.3Z" fill="#7d7d7f"/>
<path d="M993.6 754.3L1002.9 754.1L1000.3 757.8L991.1 757.8Z" fill="#7c7c7d"/>
<path d="M991.1 757.8L1000.3 757.8L997.7 761.5L988.5 761.3Z" fill="#7a7a7b"/>
<path d="M988.5 761.3L997.7 761.5L995.1 765.1L986.0 764.8Z" fill="#79797a"/>
<path d="M986.0 764.8L995.1 765.1L992.5 768.8L983.4 768.3Z" fill="#777778"/>
<path d="M983.4 768.3L992.5 768.8L990.0 772.5L980.9 771.8Z" fill="#767676"/>
<path d="M980.9 771.8L990.0 772.5L987.4 776.2L978.3 775.2Z" fill="#747475"/>
<path d="M1008.0 746.7L1022.0 748.7L1019.4 752.4L1005.4 750.4Z" fill="#818183"/>
<path d="M1005.4 750.4L1019.4 752.4L1016.9 756.1L1002.9 754.1Z" fill="#808081"/>
<path d="M1002.9 754.1L1016.9 756.1L1014.3 759.8L1000.3 757.8Z" fill="#7e7e7f"/>
<path d="M1000.3 757.8L1014.3 759.8L1011.7 763.5L997.7 761.5Z" fill="#7c7c7d"/>
<path d="M997.7 761.5L1011.7 763.5L1009.1 767.1L995.1 765.1Z" fill="#7b7b7c"/>
<path d="M995.1 765.1L1009.1 767.1L1006.5 770.8L992.5 768.8Z" fill="#79797a"/>
<path d="M992.5 768.8L1006.5 770.8L1004.0 774.5L990.0 772.5Z" fill="#777778"/>
<path d="M990.0 772.5L1004.0 774.5L1001.4 778.2L987.4 776.2Z" fill="#767676"/>
<path d="M483.0 624.0L497.0 622.0L498.3 626.6L484.3 628.6Z" fill="#8a8a8a"/>
<path d="M484.3 628.6L498.3 626.6L499.6 631.2L485.6 633.2Z" fill="#898989"/>
<path d="M485.6 633.2L499.6 631.2L500.9 635.8L486.9 637.8Z" fill="#888888"/>
<path d="M486.9 637.8L500.9 635.8L502.2 640.4L488.2 642.4Z" fill="#878787"/>
<path d="M488.2 642.4L502.2 640.4L503.5 645.0L489.5 647.0Z" fill="#868686"/>
<path d="M489.5 647.0L503.5 645.0L504.8 649.6L490.8 651.6Z" fill="#868686"/>
<path d="M490.8 651.6L504.8 649.6L506.1 654.2L492.1 656.2Z" fill="#858585"/>
<path d="M492.1 656.2L506.1 654.2L507.4 658.8L493.4 660.8Z" fill="#848484"/>
<path d="M493.4 660.8L507.4 658.8L508.7 663.4L494.7 665.4Z" fill="#838383"/>
<path d="M494.7 665.4L508.7 663.4L510.0 668.0L496.0 670.0Z" fill="#828282"/>
<path d="M497.0 622.0L510.2 626.8L511.4 631.4L498.3 626.6Z" fill="#888888"/>
<path d="M498.3 626.6L511.4 631.4L512.5 636.0L499.6 631.2Z" fill="#888888"/>
<path d="M499.6 631.2L512.5 636.0L513.7 640.6L500.9 635.8Z" fill="#878787"/>
<path d="M500.9 635.8L513.7 640.6L514.9 645.2L502.2 640.4Z" fill="#868686"/>
<path d="M502.2 640.4L514.9 645.2L516.0 649.9L503.5 645.0Z" fill="#858585"/>
<path d="M503.5 645.0L516.0 649.9L517.1 654.5L504.8 649.6Z" fill="#848484"/>
<path d="M504.8 649.6L517.1 654.5L518.3 659.1L506.1 654.2Z" fill="#848484"/>
<path d="M506.1 654.2L518.3 659.1L519.5 663.8L507.4 658.8Z" fill="#838383"/>
<path d="M507.4 658.8L519.5 663.8L520.6 668.4L508.7 663.4Z" fill="#828282"/>
<path d="M508.7 663.4L520.6 668.4L521.8 673.0L510.0 668.0Z" fill="#818181"/>
<path d="M510.2 626.8L523.5 631.5L524.5 636.1L511.4 631.4Z" fill="#868686"/>
<path d="M511.4 631.4L524.5 636.1L525.5 640.8L512.5 636.0Z" fill="#858585"/>
<path d="M512.5 636.0L525.5 640.8L526.5 645.5L513.7 640.6Z" fill="#848484"/>
<path d="M513.7 640.6L526.5 645.5L527.5 650.1L514.9 645.2Z" fill="#838383"/>
<path d="M514.9 645.2L527.5 650.1L528.5 654.8L516.0 649.9Z" fill="#838383"/>
<path d="M516.0 649.9L528.5 654.8L529.5 659.4L517.1 654.5Z" fill="#828282"/>
<path d="M517.1 654.5L529.5 659.4L530.5 664.0L518.3 659.1Z" fill="#818181"/>
<path d="M518.3 659.1L530.5 664.0L531.5 668.7L519.5 663.8Z" fill="#808080"/>
<path d="M519.5 663.8L531.5 668.7L532.5 673.4L520.6 668.4Z" fill="#7f7f7f"/>
<path d="M520.6 668.4L532.5 673.4L533.5 678.0L521.8 673.0Z" fill="#7f7f7f"/>
<path d="M523.5 631.5L536.8 636.2L537.6 640.9L524.5 636.1Z" fill="#838383"/>
<path d="M524.5 636.1L537.6 640.9L538.5 645.6L525.5 640.8Z" fill="#838383"/>
<path d="M525.5 640.8L538.5 645.6L539.3 650.3L526.5 645.5Z" fill="#828282"/>
<path d="M526.5 645.5L539.3 650.3L540.1 655.0L527.5 650.1Z" fill="#818181"/>
<path d="M527.5 650.1L540.1 655.0L541.0 659.6L528.5 654.8Z" fill="#808080"/>
<path d="M528.5 654.8L541.0 659.6L541.9 664.3L529.5 659.4Z" fill="#7f7f7f"/>
<path d="M529.5 659.4L541.9 664.3L542.7 669.0L530.5 664.0Z" fill="#7f7f7f"/>
<path d="M530.5 664.0L542.7 669.0L543.5 673.6L531.5 668.7Z" fill="#7e7e7e"/>
<path d="M531.5 668.7L543.5 673.6L544.4 678.3L532.5 673.4Z" fill="#7d7d7d"/>
<path d="M532.5 673.4L544.4 678.3L545.2 683.0L533.5 678.0Z" fill="#7c7c7c"/>
<path d="M536.8 636.2L550.0 641.0L550.7 645.7L537.6 640.9Z" fill="#818181"/>
<path d="M537.6 640.9L550.7 645.7L551.4 650.4L538.5 645.6Z" fill="#808080"/>
<path d="M538.5 645.6L551.4 650.4L552.1 655.1L539.3 650.3Z" fill="#7f7f7f"/>
<path d="M539.3 650.3L552.1 655.1L552.8 659.8L540.1 655.0Z" fill="#7e7e7e"/>
<path d="M540.1 655.0L552.8 659.8L553.5 664.5L541.0 659.6Z" fill="#7e7e7e"/>
<path d="M541.0 659.6L553.5 664.5L554.2 669.2L541.9 664.3Z" fill="#7d7d7d"/>
<path d="M541.9 664.3L554.2 669.2L554.9 673.9L542.7 669.0Z" fill="#7c7c7c"/>
<path d="M542.7 669.0L554.9 673.9L555.6 678.6L543.5 673.6Z" fill="#7b7b7b"/>
<path d="M543.5 673.6L555.6 678.6L556.3 683.3L544.4 678.3Z" fill="#7a7a7a"/>
<path d="M544.4 678.3L556.3 683.3L557.0 688.0L545.2 683.0Z" fill="#7a7a7a"/>
<path d="M550.0 641.0L564.0 646.2L564.6 651.0L550.7 645.7Z" fill="#808080"/>
<path d="M550.7 645.7L564.6 651.0L565.1 655.8L551.4 650.4Z" fill="#7f7f7f"/>
<path d="M551.4 650.4L565.1 655.8L565.7 660.5L552.1 655.1Z" fill="#7e7e7e"/>
<path d="M552.1 655.1L565.7 660.5L566.3 665.2L552.8 659.8Z" fill="#7d7d7d"/>
<path d="M552.8 659.8L566.3 665.2L566.9 670.0L553.5 664.5Z" fill="#7d7d7d"/>
<path d="M553.5 664.5L566.9 670.0L567.5 674.8L554.2 669.2Z" fill="#7c7c7c"/>
<path d="M554.2 669.2L567.5 674.8L568.0 679.5L554.9 673.9Z" fill="#7b7b7b"/>
<path d="M554.9 673.9L568.0 679.5L568.6 684.2L555.6 678.6Z" fill="#7a7a7a"/>
<path d="M555.6 678.6L568.6 684.2L569.2 689.0L556.3 683.3Z" fill="#797979"/>
<path d="M556.3 683.3L569.2 689.0L569.8 693.8L557.0 688.0Z" fill="#787878"/>
<path d="M564.0 646.2L578.0 651.5L578.5 656.3L564.6 651.0Z" fill="#808080"/>
<path d="M564.6 651.0L578.5 656.3L578.9 661.1L565.1 655.8Z" fill="#7f7f7f"/>
<path d="M565.1 655.8L578.9 661.1L579.4 665.9L565.7 660.5Z" fill="#7f7f7f"/>
<path d="M565.7 660.5L579.4 665.9L579.8 670.7L566.3 665.2Z" fill="#7e7e7e"/>
<path d="M566.3 665.2L579.8 670.7L580.2 675.5L566.9 670.0Z" fill="#7d7d7d"/>
<path d="M566.9 670.0L580.2 675.5L580.7 680.3L567.5 674.8Z" fill="#7c7c7c"/>
<path d="M567.5 674.8L580.7 680.3L581.1 685.1L568.0 679.5Z" fill="#7b7b7b"/>
<path d="M568.0 679.5L581.1 685.1L581.6 689.9L568.6 684.2Z" fill="#7a7a7a"/>
<path d="M568.6 684.2L581.6 689.9L582.0 694.7L569.2 689.0Z" fill="#797979"/>
<path d="M569.2 689.0L582.0 694.7L582.5 699.5L569.8 693.8Z" fill="#787878"/>
<path d="M578.0 651.5L592.0 656.8L592.3 661.6L578.5 656.3Z" fill="#818181"/>
<path d="M578.5 656.3L592.3 661.6L592.6 666.5L578.9 661.1Z" fill="#808080"/>
<path d="M578.9 661.1L592.6 666.5L593.0 671.3L579.4 665.9Z" fill="#7f7f7f"/>
<path d="M579.4 665.9L593.0 671.3L593.3 676.1L579.8 670.7Z" fill="#7e7e7e"/>
<path d="M579.8 670.7L593.3 676.1L593.6 681.0L580.2 675.5Z" fill="#7d7d7d"/>
<path d="M580.2 675.5L593.6 681.0L594.0 685.9L580.7 680.3Z" fill="#7c7c7c"/>
<path d="M580.7 680.3L594.0 685.9L594.3 690.7L581.1 685.1Z" fill="#7b7b7b"/>
<path d="M581.1 685.1L594.3 690.7L594.6 695.5L581.6 689.9Z" fill="#7a7a7a"/>
<path d="M581.6 689.9L594.6 695.5L594.9 700.4L582.0 694.7Z" fill="#797979"/>
<path d="M582.0 694.7L594.9 700.4L595.2 705.2L582.5 699.5Z" fill="#787878"/>
<path d="M592.0 656.8L606.0 662.0L606.2 666.9L592.3 661.6Z" fill="#818181"/>
<path d="M592.3 661.6L606.2 666.9L606.4 671.8L592.6 666.5Z" fill="#808080"/>
<path d="M592.6 666.5L606.4 671.8L606.6 676.7L593.0 671.3Z" fill="#7f7f7f"/>
<path d="M593.0 671.3L606.6 676.7L606.8 681.6L593.3 676.1Z" fill="#7e7e7e"/>
<path d="M593.3 676.1L606.8 681.6L607.0 686.5L593.6 681.0Z" fill="#7d7d7d"/>
<path d="M593.6 681.0L607.0 686.5L607.2 691.4L594.0 685.9Z" fill="#7c7c7c"/>
<path d="M594.0 685.9L607.2 691.4L607.4 696.3L594.3 690.7Z" fill="#7b7b7b"/>
<path d="M594.3 690.7L607.4 696.3L607.6 701.2L594.6 695.5Z" fill="#7a7a7a"/>
<path d="M594.6 695.5L607.6 701.2L607.8 706.1L594.9 700.4Z" fill="#797979"/>
<path d="M594.9 700.4L607.8 706.1L608.0 711.0L595.2 705.2Z" fill="#787878"/>
<path d="M606.0 662.0L620.1 668.8L620.2 673.7L606.2 666.9Z" fill="#828282"/>
<path d="M606.2 666.9L620.2 673.7L620.3 678.6L606.4 671.8Z" fill="#818181"/>
<path d="M606.4 671.8L620.3 678.6L620.4 683.5L606.6 676.7Z" fill="#808080"/>
<path d="M606.6 676.7L620.4 683.5L620.4 688.4L606.8 681.6Z" fill="#7f7f7f"/>
<path d="M606.8 681.6L620.4 688.4L620.5 693.3L607.0 686.5Z" fill="#7e7e7e"/>
<path d="M607.0 686.5L620.5 693.3L620.6 698.2L607.2 691.4Z" fill="#7d7d7d"/>
<path d="M607.2 691.4L620.6 698.2L620.6 703.1L607.4 696.3Z" fill="#7c7c7c"/>
<path d="M607.4 696.3L620.6 703.1L620.7 708.0L607.6 701.2Z" fill="#7b7b7b"/>
<path d="M607.6 701.2L620.7 708.0L620.8 712.9L607.8 706.1Z" fill="#7a7a7a"/>
<path d="M607.8 706.1L620.8 712.9L620.9 717.8L608.0 711.0Z" fill="#797979"/>
<path d="M620.1 668.8L634.2 675.6L634.2 680.5L620.2 673.7Z" fill="#848484"/>
<path d="M620.2 673.7L634.2 680.5L634.1 685.4L620.3 678.6Z" fill="#838383"/>
<path d="M620.3 678.6L634.1 685.4L634.1 690.3L620.4 683.5Z" fill="#828282"/>
<path d="M620.4 683.5L634.1 690.3L634.0 695.2L620.4 688.4Z" fill="#818181"/>
<path d="M620.4 688.4L634.0 695.2L634.0 700.1L620.5 693.3Z" fill="#7f7f7f"/>
<path d="M620.5 693.3L634.0 700.1L634.0 705.0L620.6 698.2Z" fill="#7e7e7e"/>
<path d="M620.6 698.2L634.0 705.0L633.9 709.9L620.6 703.1Z" fill="#7d7d7d"/>
<path d="M620.6 703.1L633.9 709.9L633.9 714.8L620.7 708.0Z" fill="#7c7c7c"/>
<path d="M620.7 708.0L633.9 714.8L633.8 719.7L620.8 712.9Z" fill="#7b7b7b"/>
<path d="M620.8 712.9L633.8 719.7L633.8 724.6L620.9 717.8Z" fill="#797979"/>
<path d="M634.2 675.6L648.4 682.4L648.2 687.3L634.2 680.5Z" fill="#868686"/>
<path d="M634.2 680.5L648.2 687.3L648.0 692.2L634.1 685.4Z" fill="#858585"/>
<path d="M634.1 685.4L648.0 692.2L647.9 697.1L634.1 690.3Z" fill="#848484"/>
<path d="M634.1 690.3L647.9 697.1L647.7 702.0L634.0 695.2Z" fill="#828282"/>
<path d="M634.0 695.2L647.7 702.0L647.5 706.9L634.0 700.1Z" fill="#818181"/>
<path d="M634.0 700.1L647.5 706.9L647.3 711.8L634.0 705.0Z" fill="#7f7f7f"/>
<path d="M634.0 705.0L647.3 711.8L647.1 716.7L633.9 709.9Z" fill="#7e7e7e"/>
<path d="M633.9 709.9L647.1 716.7L647.0 721.6L633.9 714.8Z" fill="#7d7d7d"/>
<path d="M633.9 714.8L647.0 721.6L646.8 726.5L633.8 719.7Z" fill="#7b7b7b"/>
<path d="M633.8 719.7L646.8 726.5L646.6 731.4L633.8 724.6Z" fill="#7a7a7a"/>
<path d="M648.4 682.4L662.5 689.2L662.2 694.1L648.2 687.3Z" fill="#888888"/>
<path d="M648.2 687.3L662.2 694.1L661.9 699.0L648.0 692.2Z" fill="#878787"/>
<path d="M648.0 692.2L661.9 699.0L661.6 704.0L647.9 697.1Z" fill="#858585"/>
<path d="M647.9 697.1L661.6 704.0L661.3 708.9L647.7 702.0Z" fill="#848484"/>
<path d="M647.7 702.0L661.3 708.9L661.0 713.8L647.5 706.9Z" fill="#828282"/>
<path d="M647.5 706.9L661.0 713.8L660.7 718.6L647.3 711.8Z" fill="#818181"/>
<path d="M647.3 711.8L660.7 718.6L660.4 723.5L647.1 716.7Z" fill="#7f7f7f"/>
<path d="M647.1 716.7L660.4 723.5L660.1 728.5L647.0 721.6Z" fill="#7e7e7e"/>
<path d="M647.0 721.6L660.1 728.5L659.8 733.4L646.8 726.5Z" fill="#7c7c7c"/>
<path d="M646.8 726.5L659.8 733.4L659.5 738.2L646.6 731.4Z" fill="#7b7b7b"/>
<path d="M662.5 689.2L676.7 693.1L676.4 697.6L662.2 693.7Z" fill="#848484"/>
<path d="M662.2 693.7L676.4 697.6L676.1 702.1L662.0 698.2Z" fill="#828282"/>
<path d="M662.0 698.2L676.1 702.1L675.9 706.6L661.7 702.6Z" fill="#818181"/>
<path d="M661.7 702.6L675.9 706.6L675.6 711.1L661.4 707.1Z" fill="#7f7f7f"/>
<path d="M661.4 707.1L675.6 711.1L675.3 715.6L661.1 711.5Z" fill="#7d7d7d"/>
<path d="M661.1 711.5L675.3 715.6L675.0 720.1L660.9 716.0Z" fill="#7c7c7c"/>
<path d="M660.9 716.0L675.0 720.1L674.8 724.6L660.6 720.4Z" fill="#7a7a7a"/>
<path d="M660.6 720.4L674.8 724.6L674.5 729.1L660.3 724.9Z" fill="#797979"/>
<path d="M660.3 724.9L674.5 729.1L674.2 733.6L660.0 729.3Z" fill="#777777"/>
<path d="M660.0 729.3L674.2 733.6L673.9 738.1L659.8 733.8Z" fill="#767676"/>
<path d="M659.8 733.8L673.9 738.1L673.7 742.5L659.5 738.2Z" fill="#747474"/>
<path d="M676.7 693.1L690.9 697.0L690.6 701.6L676.4 697.6Z" fill="#838383"/>
<path d="M676.4 697.6L690.6 701.6L690.3 706.1L676.1 702.1Z" fill="#818181"/>
<path d="M676.1 702.1L690.3 706.1L690.0 710.6L675.9 706.6Z" fill="#808080"/>
<path d="M675.9 706.6L690.0 710.6L689.8 715.2L675.6 711.1Z" fill="#7e7e7e"/>
<path d="M675.6 711.1L689.8 715.2L689.5 719.7L675.3 715.6Z" fill="#7c7c7c"/>
<path d="M675.3 715.6L689.5 719.7L689.2 724.2L675.0 720.1Z" fill="#7b7b7b"/>
<path d="M675.0 720.1L689.2 724.2L688.9 728.7L674.8 724.6Z" fill="#797979"/>
<path d="M674.8 724.6L688.9 728.7L688.7 733.3L674.5 729.1Z" fill="#787878"/>
<path d="M674.5 729.1L688.7 733.3L688.4 737.8L674.2 733.6Z" fill="#767676"/>
<path d="M674.2 733.6L688.4 737.8L688.1 742.3L673.9 738.1Z" fill="#747474"/>
<path d="M673.9 738.1L688.1 742.3L687.9 746.9L673.7 742.5Z" fill="#737373"/>
<path d="M690.9 697.0L705.0 701.0L704.8 705.5L690.6 701.6Z" fill="#828282"/>
<path d="M690.6 701.6L704.8 705.5L704.5 710.1L690.3 706.1Z" fill="#808080"/>
<path d="M690.3 706.1L704.5 710.1L704.2 714.6L690.0 710.6Z" fill="#7f7f7f"/>
<path d="M690.0 710.6L704.2 714.6L703.9 719.2L689.8 715.2Z" fill="#7d7d7d"/>
<path d="M689.8 715.2L703.9 719.2L703.7 723.8L689.5 719.7Z" fill="#7b7b7b"/>
<path d="M689.5 719.7L703.7 723.8L703.4 728.3L689.2 724.2Z" fill="#7a7a7a"/>
<path d="M689.2 724.2L703.4 728.3L703.1 732.9L688.9 728.7Z" fill="#787878"/>
<path d="M688.9 728.7L703.1 732.9L702.8 737.5L688.7 733.3Z" fill="#767676"/>
<path d="M688.7 733.3L702.8 737.5L702.6 742.0L688.4 737.8Z" fill="#757575"/>
<path d="M688.4 737.8L702.6 742.0L702.3 746.6L688.1 742.3Z" fill="#737373"/>
<path d="M688.1 742.3L702.3 746.6L702.0 751.1L687.9 746.9Z" fill="#717171"/>
<path d="M705.0 701.0L719.2 704.9L718.9 709.5L704.8 705.5Z" fill="#818181"/>
<path d="M704.8 705.5L718.9 709.5L718.7 714.1L704.5 710.1Z" fill="#7f7f7f"/>
<path d="M704.5 710.1L718.7 714.1L718.4 718.6L704.2 714.6Z" fill="#7e7e7e"/>
<path d="M704.2 714.6L718.4 718.6L718.1 723.2L703.9 719.2Z" fill="#7c7c7c"/>
<path d="M703.9 719.2L718.1 723.2L717.8 727.9L703.7 723.8Z" fill="#7a7a7a"/>
<path d="M703.7 723.8L717.8 727.9L717.6 732.5L703.4 728.3Z" fill="#787878"/>
<path d="M703.4 728.3L717.6 732.5L717.3 737.1L703.1 732.9Z" fill="#777777"/>
<path d="M703.1 732.9L717.3 737.1L717.0 741.7L702.8 737.5Z" fill="#757575"/>
<path d="M702.8 737.5L717.0 741.7L716.7 746.2L702.6 742.0Z" fill="#737373"/>
<path d="M702.6 742.0L716.7 746.2L716.5 750.9L702.3 746.6Z" fill="#727272"/>
<path d="M702.3 746.6L716.5 750.9L716.2 755.5L702.0 751.1Z" fill="#707070"/>
<path d="M719.2 704.9L733.4 708.8L733.1 713.4L718.9 709.5Z" fill="#808080"/>
<path d="M718.9 709.5L733.1 713.4L732.8 718.0L718.7 714.1Z" fill="#7e7e7e"/>
<path d="M718.7 714.1L732.8 718.0L732.6 722.7L718.4 718.6Z" fill="#7d7d7d"/>
<path d="M718.4 718.6L732.6 722.7L732.3 727.3L718.1 723.2Z" fill="#7b7b7b"/>
<path d="M718.1 723.2L732.3 727.3L732.0 731.9L717.8 727.9Z" fill="#797979"/>
<path d="M717.8 727.9L732.0 731.9L731.7 736.6L717.6 732.5Z" fill="#777777"/>
<path d="M717.6 732.5L731.7 736.6L731.5 741.2L717.3 737.1Z" fill="#767676"/>
<path d="M717.3 737.1L731.5 741.2L731.2 745.8L717.0 741.7Z" fill="#747474"/>
<path d="M717.0 741.7L731.2 745.8L730.9 750.5L716.7 746.2Z" fill="#727272"/>
<path d="M716.7 746.2L730.9 750.5L730.6 755.1L716.5 750.9Z" fill="#707070"/>
<path d="M716.5 750.9L730.6 755.1L730.4 759.8L716.2 755.5Z" fill="#6f6f6f"/>
<path d="M733.4 708.8L747.5 712.6L747.3 717.3L733.1 713.4Z" fill="#7f7f7f"/>
<path d="M733.1 713.4L747.3 717.3L747.0 722.0L732.8 718.0Z" fill="#7d7d7d"/>
<path d="M732.8 718.0L747.0 722.0L746.7 726.7L732.6 722.7Z" fill="#7c7c7c"/>
<path d="M732.6 722.7L746.7 726.7L746.5 731.3L732.3 727.3Z" fill="#7a7a7a"/>
<path d="M732.3 727.3L746.5 731.3L746.2 736.0L732.0 731.9Z" fill="#787878"/>
<path d="M732.0 731.9L746.2 736.0L745.9 740.7L731.7 736.6Z" fill="#767676"/>
<path d="M731.7 736.6L745.9 740.7L745.6 745.4L731.5 741.2Z" fill="#747474"/>
<path d="M731.5 741.2L745.6 745.4L745.4 750.0L731.2 745.8Z" fill="#737373"/>
<path d="M731.2 745.8L745.4 750.0L745.1 754.7L730.9 750.5Z" fill="#717171"/>
<path d="M730.9 750.5L745.1 754.7L744.8 759.4L730.6 755.1Z" fill="#6f6f6f"/>
<path d="M730.6 755.1L744.8 759.4L744.5 764.0L730.4 759.8Z" fill="#6d6d6d"/>
<path d="M747.5 712.6L761.7 716.5L761.5 721.3L747.3 717.3Z" fill="#7e7e7e"/>
<path d="M747.3 717.3L761.5 721.3L761.2 726.0L747.0 722.0Z" fill="#7c7c7c"/>
<path d="M747.0 722.0L761.2 726.0L760.9 730.7L746.7 726.7Z" fill="#7b7b7b"/>
<path d="M746.7 726.7L760.9 730.7L760.6 735.4L746.5 731.3Z" fill="#797979"/>
<path d="M746.5 731.3L760.6 735.4L760.4 740.1L746.2 736.0Z" fill="#777777"/>
<path d="M746.2 736.0L760.4 740.1L760.1 744.8L745.9 740.7Z" fill="#757575"/>
<path d="M745.9 740.7L760.1 744.8L759.8 749.5L745.6 745.4Z" fill="#737373"/>
<path d="M745.6 745.4L759.8 749.5L759.5 754.2L745.4 750.0Z" fill="#717171"/>
<path d="M745.4 750.0L759.5 754.2L759.3 758.9L745.1 754.7Z" fill="#707070"/>
<path d="M745.1 754.7L759.3 758.9L759.0 763.6L744.8 759.4Z" fill="#6e6e6e"/>
<path d="M744.8 759.4L759.0 763.6L758.7 768.4L744.5 764.0Z" fill="#6c6c6c"/>
<path d="M761.7 716.5L775.9 720.5L775.6 725.2L761.5 721.3Z" fill="#7d7d7d"/>
<path d="M761.5 721.3L775.6 725.2L775.4 729.9L761.2 726.0Z" fill="#7b7b7b"/>
<path d="M761.2 726.0L775.4 729.9L775.1 734.7L760.9 730.7Z" fill="#7a7a7a"/>
<path d="M760.9 730.7L775.1 734.7L774.8 739.4L760.6 735.4Z" fill="#787878"/>
<path d="M760.6 735.4L774.8 739.4L774.5 744.2L760.4 740.1Z" fill="#767676"/>
<path d="M760.4 740.1L774.5 744.2L774.3 748.9L760.1 744.8Z" fill="#747474"/>
<path d="M760.1 744.8L774.3 748.9L774.0 753.7L759.8 749.5Z" fill="#727272"/>
<path d="M759.8 749.5L774.0 753.7L773.7 758.4L759.5 754.2Z" fill="#707070"/>
<path d="M759.5 754.2L773.7 758.4L773.4 763.2L759.3 758.9Z" fill="#6e6e6e"/>
<path d="M759.3 758.9L773.4 763.2L773.2 767.9L759.0 763.6Z" fill="#6c6c6c"/>
<path d="M759.0 763.6L773.2 767.9L772.9 772.6L758.7 768.4Z" fill="#6a6a6a"/>
<path d="M775.9 720.5L790.1 724.4L789.8 729.1L775.6 725.2Z" fill="#7c7c7c"/>
<path d="M775.6 725.2L789.8 729.1L789.5 733.9L775.4 729.9Z" fill="#7a7a7a"/>
<path d="M775.4 729.9L789.5 733.9L789.3 738.7L775.1 734.7Z" fill="#797979"/>
<path d="M775.1 734.7L789.3 738.7L789.0 743.5L774.8 739.4Z" fill="#777777"/>
<path d="M774.8 739.4L789.0 743.5L788.7 748.3L774.5 744.2Z" fill="#757575"/>
<path d="M774.5 744.2L788.7 748.3L788.4 753.0L774.3 748.9Z" fill="#737373"/>
<path d="M774.3 748.9L788.4 753.0L788.2 757.8L774.0 753.7Z" fill="#717171"/>
<path d="M774.0 753.7L788.2 757.8L787.9 762.6L773.7 758.4Z" fill="#6f6f6f"/>
<path d="M773.7 758.4L787.9 762.6L787.6 767.4L773.4 763.2Z" fill="#6d6d6d"/>
<path d="M773.4 763.2L787.6 767.4L787.3 772.2L773.2 767.9Z" fill="#6b6b6b"/>
<path d="M773.2 767.9L787.3 772.2L787.1 777.0L772.9 772.6Z" fill="#696969"/>
<path d="M790.1 724.4L804.2 728.2L804.0 733.1L789.8 729.1Z" fill="#7b7b7b"/>
<path d="M789.8 729.1L804.0 733.1L803.7 737.9L789.5 733.9Z" fill="#797979"/>
<path d="M789.5 733.9L803.7 737.9L803.4 742.7L789.3 738.7Z" fill="#787878"/>
<path d="M789.3 738.7L803.4 742.7L803.2 747.5L789.0 743.5Z" fill="#767676"/>
<path d="M789.0 743.5L803.2 747.5L802.9 752.3L788.7 748.3Z" fill="#747474"/>
<path d="M788.7 748.3L802.9 752.3L802.6 757.2L788.4 753.0Z" fill="#727272"/>
<path d="M788.4 753.0L802.6 757.2L802.3 762.0L788.2 757.8Z" fill="#707070"/>
<path d="M788.2 757.8L802.3 762.0L802.1 766.8L787.9 762.6Z" fill="#6e6e6e"/>
<path d="M787.9 762.6L802.1 766.8L801.8 771.6L787.6 767.4Z" fill="#6c6c6c"/>
<path d="M787.6 767.4L801.8 771.6L801.5 776.4L787.3 772.2Z" fill="#6a6a6a"/>
<path d="M787.3 772.2L801.5 776.4L801.2 781.2L787.1 777.0Z" fill="#686868"/>
<path d="M804.2 728.2L818.7 732.0L818.2 736.4L804.0 732.7Z" fill="#7a7a7a"/>
<path d="M804.0 732.7L818.2 736.4L817.7 740.7L803.8 737.1Z" fill="#787878"/>
<path d="M803.8 737.1L817.7 740.7L817.2 745.1L803.5 741.5Z" fill="#767676"/>
<path d="M803.5 741.5L817.2 745.1L816.8 749.5L803.2 745.9Z" fill="#747474"/>
<path d="M803.2 745.9L816.8 749.5L816.3 753.8L803.0 750.3Z" fill="#727272"/>
<path d="M803.0 750.3L816.3 753.8L815.8 758.2L802.8 754.8Z" fill="#717171"/>
<path d="M802.8 754.8L815.8 758.2L815.3 762.5L802.5 759.2Z" fill="#6f6f6f"/>
<path d="M802.5 759.2L815.3 762.5L814.9 766.9L802.2 763.6Z" fill="#6d6d6d"/>
<path d="M802.2 763.6L814.9 766.9L814.4 771.3L802.0 768.0Z" fill="#6b6b6b"/>
<path d="M802.0 768.0L814.4 771.3L813.9 775.6L801.8 772.4Z" fill="#696969"/>
<path d="M801.8 772.4L813.9 775.6L813.4 780.0L801.5 776.8Z" fill="#686868"/>
<path d="M801.5 776.8L813.4 780.0L813.0 784.4L801.2 781.2Z" fill="#666666"/>
<path d="M818.7 732.0L833.1 735.8L832.4 740.1L818.2 736.4Z" fill="#767676"/>
<path d="M818.2 736.4L832.4 740.1L831.7 744.4L817.7 740.7Z" fill="#757575"/>
<path d="M817.7 740.7L831.7 744.4L831.0 748.7L817.2 745.1Z" fill="#737373"/>
<path d="M817.2 745.1L831.0 748.7L830.3 753.0L816.8 749.5Z" fill="#717171"/>
<path d="M816.8 749.5L830.3 753.0L829.6 757.3L816.3 753.8Z" fill="#707070"/>
<path d="M816.3 753.8L829.6 757.3L828.9 761.6L815.8 758.2Z" fill="#6e6e6e"/>
<path d="M815.8 758.2L828.9 761.6L828.2 765.9L815.3 762.5Z" fill="#6c6c6c"/>
<path d="M815.3 762.5L828.2 765.9L827.5 770.2L814.9 766.9Z" fill="#6a6a6a"/>
<path d="M814.9 766.9L827.5 770.2L826.8 774.5L814.4 771.3Z" fill="#696969"/>
<path d="M814.4 771.3L826.8 774.5L826.1 778.8L813.9 775.6Z" fill="#676767"/>
<path d="M813.9 775.6L826.1 778.8L825.4 783.2L813.4 780.0Z" fill="#656565"/>
<path d="M813.4 780.0L825.4 783.2L824.7 787.5L813.0 784.4Z" fill="#646464"/>
<path d="M833.1 735.8L847.5 739.5L846.5 743.8L832.4 740.1Z" fill="#737373"/>
<path d="M832.4 740.1L846.5 743.8L845.6 748.0L831.7 744.4Z" fill="#727272"/>
<path d="M831.7 744.4L845.6 748.0L844.7 752.3L831.0 748.7Z" fill="#707070"/>
<path d="M831.0 748.7L844.7 752.3L843.8 756.6L830.3 753.0Z" fill="#6e6e6e"/>
<path d="M830.3 753.0L843.8 756.6L842.9 760.8L829.6 757.3Z" fill="#6d6d6d"/>
<path d="M829.6 757.3L842.9 760.8L841.9 765.1L828.9 761.6Z" fill="#6b6b6b"/>
<path d="M828.9 761.6L841.9 765.1L841.0 769.3L828.2 765.9Z" fill="#696969"/>
<path d="M828.2 765.9L841.0 769.3L840.1 773.6L827.5 770.2Z" fill="#686868"/>
<path d="M827.5 770.2L840.1 773.6L839.2 777.8L826.8 774.5Z" fill="#666666"/>
<path d="M826.8 774.5L839.2 777.8L838.3 782.1L826.1 778.8Z" fill="#656565"/>
<path d="M826.1 778.8L838.3 782.1L837.3 786.3L825.4 783.2Z" fill="#636363"/>
<path d="M825.4 783.2L837.3 786.3L836.4 790.6L824.7 787.5Z" fill="#616161"/>
<path d="M847.5 739.5L861.9 743.3L860.7 747.5L846.5 743.8Z" fill="#707070"/>
<path d="M846.5 743.8L860.7 747.5L859.6 751.7L845.6 748.0Z" fill="#6e6e6e"/>
<path d="M845.6 748.0L859.6 751.7L858.4 755.9L844.7 752.3Z" fill="#6d6d6d"/>
<path d="M844.7 752.3L858.4 755.9L857.3 760.1L843.8 756.6Z" fill="#6b6b6b"/>
<path d="M843.8 756.6L857.3 760.1L856.2 764.3L842.9 760.8Z" fill="#6a6a6a"/>
<path d="M842.9 760.8L856.2 764.3L855.0 768.5L841.9 765.1Z" fill="#686868"/>
<path d="M841.9 765.1L855.0 768.5L853.9 772.7L841.0 769.3Z" fill="#676767"/>
<path d="M841.0 769.3L853.9 772.7L852.7 776.9L840.1 773.6Z" fill="#656565"/>
<path d="M840.1 773.6L852.7 776.9L851.6 781.1L839.2 777.8Z" fill="#646464"/>
<path d="M839.2 777.8L851.6 781.1L850.4 785.3L838.3 782.1Z" fill="#626262"/>
<path d="M838.3 782.1L850.4 785.3L849.3 789.5L837.3 786.3Z" fill="#616161"/>
<path d="M837.3 786.3L849.3 789.5L848.1 793.7L836.4 790.6Z" fill="#5f5f5f"/>
<path d="M861.9 743.3L876.3 747.1L874.9 751.2L860.7 747.5Z" fill="#6d6d6d"/>
<path d="M860.7 747.5L874.9 751.2L873.5 755.4L859.6 751.7Z" fill="#6b6b6b"/>
<path d="M859.6 751.7L873.5 755.4L872.2 759.5L858.4 755.9Z" fill="#6a6a6a"/>
<path d="M858.4 755.9L872.2 759.5L870.8 763.6L857.3 760.1Z" fill="#686868"/>
<path d="M857.3 760.1L870.8 763.6L869.4 767.8L856.2 764.3Z" fill="#676767"/>
<path d="M856.2 764.3L869.4 767.8L868.1 771.9L855.0 768.5Z" fill="#666666"/>
<path d="M855.0 768.5L868.1 771.9L866.7 776.1L853.9 772.7Z" fill="#646464"/>
<path d="M853.9 772.7L866.7 776.1L865.3 780.2L852.7 776.9Z" fill="#636363"/>
<path d="M852.7 776.9L865.3 780.2L864.0 784.4L851.6 781.1Z" fill="#616161"/>
<path d="M851.6 781.1L864.0 784.4L862.6 788.5L850.4 785.3Z" fill="#606060"/>
<path d="M850.4 785.3L862.6 788.5L861.2 792.6L849.3 789.5Z" fill="#5e5e5e"/>
<path d="M849.3 789.5L861.2 792.6L859.9 796.8L848.1 793.7Z" fill="#5d5d5d"/>
<path d="M876.3 747.1L890.7 750.8L889.1 754.9L874.9 751.2Z" fill="#6a6a6a"/>
<path d="M874.9 751.2L889.1 754.9L887.5 759.0L873.5 755.4Z" fill="#686868"/>
<path d="M873.5 755.4L887.5 759.0L885.9 763.1L872.2 759.5Z" fill="#676767"/>
<path d="M872.2 759.5L885.9 763.1L884.3 767.2L870.8 763.6Z" fill="#666666"/>
<path d="M870.8 763.6L884.3 767.2L882.7 771.3L869.4 767.8Z" fill="#646464"/>
<path d="M869.4 767.8L882.7 771.3L881.1 775.4L868.1 771.9Z" fill="#636363"/>
<path d="M868.1 771.9L881.1 775.4L879.5 779.4L866.7 776.1Z" fill="#616161"/>
<path d="M866.7 776.1L879.5 779.4L878.0 783.5L865.3 780.2Z" fill="#606060"/>
<path d="M865.3 780.2L878.0 783.5L876.4 787.6L864.0 784.4Z" fill="#5f5f5f"/>
<path d="M864.0 784.4L876.4 787.6L874.8 791.7L862.6 788.5Z" fill="#5d5d5d"/>
<path d="M862.6 788.5L874.8 791.7L873.2 795.8L861.2 792.6Z" fill="#5c5c5c"/>
<path d="M861.2 792.6L873.2 795.8L871.6 799.9L859.9 796.8Z" fill="#5b5b5b"/>
<path d="M890.7 750.8L905.1 754.6L903.3 758.6L889.1 754.9Z" fill="#676767"/>
<path d="M889.1 754.9L903.3 758.6L901.5 762.7L887.5 759.0Z" fill="#656565"/>
<path d="M887.5 759.0L901.5 762.7L899.6 766.7L885.9 763.1Z" fill="#646464"/>
<path d="M885.9 763.1L899.6 766.7L897.8 770.7L884.3 767.2Z" fill="#636363"/>
<path d="M884.3 767.2L897.8 770.7L896.0 774.8L882.7 771.3Z" fill="#616161"/>
<path d="M882.7 771.3L896.0 774.8L894.2 778.8L881.1 775.4Z" fill="#606060"/>
<path d="M881.1 775.4L894.2 778.8L892.4 782.8L879.5 779.4Z" fill="#5f5f5f"/>
<path d="M879.5 779.4L892.4 782.8L890.6 786.9L878.0 783.5Z" fill="#5e5e5e"/>
<path d="M878.0 783.5L890.6 786.9L888.8 790.9L876.4 787.6Z" fill="#5c5c5c"/>
<path d="M876.4 787.6L888.8 790.9L887.0 794.9L874.8 791.7Z" fill="#5b5b5b"/>
<path d="M874.8 791.7L887.0 794.9L885.1 799.0L873.2 795.8Z" fill="#5a5a5a"/>
<path d="M873.2 795.8L885.1 799.0L883.3 803.0L871.6 799.9Z" fill="#585858"/>
<path d="M905.1 754.6L919.5 758.4L917.5 762.3L903.3 758.6Z" fill="#636363"/>
<path d="M903.3 758.6L917.5 762.3L915.4 766.3L901.5 762.7Z" fill="#626262"/>
<path d="M901.5 762.7L915.4 766.3L913.4 770.3L899.6 766.7Z" fill="#616161"/>
<path d="M899.6 766.7L913.4 770.3L911.3 774.3L897.8 770.7Z" fill="#606060"/>
<path d="M897.8 770.7L911.3 774.3L909.3 778.3L896.0 774.8Z" fill="#5f5f5f"/>
<path d="M896.0 774.8L909.3 778.3L907.3 782.2L894.2 778.8Z" fill="#5d5d5d"/>
<path d="M894.2 778.8L907.3 782.2L905.2 786.2L892.4 782.8Z" fill="#5c5c5c"/>
<path d="M892.4 782.8L905.2 786.2L903.2 790.2L890.6 786.9Z" fill="#5b5b5b"/>
<path d="M890.6 786.9L903.2 790.2L901.2 794.2L888.8 790.9Z" fill="#5a5a5a"/>
<path d="M888.8 790.9L901.2 794.2L899.1 798.1L887.0 794.9Z" fill="#595959"/>
<path d="M887.0 794.9L899.1 798.1L897.1 802.1L885.1 799.0Z" fill="#575757"/>
<path d="M885.1 799.0L897.1 802.1L895.0 806.1L883.3 803.0Z" fill="#565656"/>
<path d="M919.5 758.4L933.9 762.1L931.6 766.1L917.5 762.3Z" fill="#606060"/>
<path d="M917.5 762.3L931.6 766.1L929.4 770.0L915.4 766.3Z" fill="#5f5f5f"/>
<path d="M915.4 766.3L929.4 770.0L927.1 773.9L913.4 770.3Z" fill="#5e5e5e"/>
<path d="M913.4 770.3L927.1 773.9L924.9 777.8L911.3 774.3Z" fill="#5d5d5d"/>
<path d="M911.3 774.3L924.9 777.8L922.6 781.7L909.3 778.3Z" fill="#5c5c5c"/>
<path d="M909.3 778.3L922.6 781.7L920.3 785.7L907.3 782.2Z" fill="#5b5b5b"/>
<path d="M907.3 782.2L920.3 785.7L918.1 789.6L905.2 786.2Z" fill="#595959"/>
<path d="M905.2 786.2L918.1 789.6L915.8 793.5L903.2 790.2Z" fill="#585858"/>
<path d="M903.2 790.2L915.8 793.5L913.6 797.4L901.2 794.2Z" fill="#575757"/>
<path d="M901.2 794.2L913.6 797.4L911.3 801.4L899.1 798.1Z" fill="#565656"/>
<path d="M899.1 798.1L911.3 801.4L909.0 805.3L897.1 802.1Z" fill="#555555"/>
<path d="M897.1 802.1L909.0 805.3L906.8 809.2L895.0 806.1Z" fill="#545454"/>
<path d="M933.9 762.1L948.3 765.9L945.8 769.8L931.6 766.1Z" fill="#5d5d5d"/>
<path d="M931.6 766.1L945.8 769.8L943.3 773.6L929.4 770.0Z" fill="#5c5c5c"/>
<path d="M929.4 770.0L943.3 773.6L940.8 777.5L927.1 773.9Z" fill="#5b5b5b"/>
<path d="M927.1 773.9L940.8 777.5L938.4 781.4L924.9 777.8Z" fill="#5a5a5a"/>
<path d="M924.9 777.8L938.4 781.4L935.9 785.2L922.6 781.7Z" fill="#595959"/>
<path d="M922.6 781.7L935.9 785.2L933.4 789.1L920.3 785.7Z" fill="#585858"/>
<path d="M920.3 785.7L933.4 789.1L930.9 793.0L918.1 789.6Z" fill="#575757"/>
<path d="M918.1 789.6L930.9 793.0L928.4 796.8L915.8 793.5Z" fill="#565656"/>
<path d="M915.8 793.5L928.4 796.8L926.0 800.7L913.6 797.4Z" fill="#555555"/>
<path d="M913.6 797.4L926.0 800.7L923.5 804.6L911.3 801.4Z" fill="#545454"/>
<path d="M911.3 801.4L923.5 804.6L921.0 808.4L909.0 805.3Z" fill="#535353"/>
<path d="M909.0 805.3L921.0 808.4L918.5 812.3L906.8 809.2Z" fill="#525252"/>
<path d="M948.3 765.9L952.6 770.1L950.3 773.6L945.8 769.8Z" fill="#595959"/>
<path d="M945.8 769.8L950.3 773.6L948.0 777.1L943.3 773.6Z" fill="#585858"/>
<path d="M943.3 773.6L948.0 777.1L945.8 780.6L940.8 777.5Z" fill="#575757"/>
<path d="M940.8 777.5L945.8 780.6L943.5 784.1L938.4 781.4Z" fill="#575757"/>
<path d="M938.4 781.4L943.5 784.1L941.2 787.6L935.9 785.2Z" fill="#565656"/>
<path d="M935.9 785.2L941.2 787.6L938.9 791.0L933.4 789.1Z" fill="#555555"/>
<path d="M933.4 789.1L938.9 791.0L936.6 794.5L930.9 793.0Z" fill="#555555"/>
<path d="M930.9 793.0L936.6 794.5L934.3 798.0L928.4 796.8Z" fill="#545454"/>
<path d="M928.4 796.8L934.3 798.0L932.1 801.5L926.0 800.7Z" fill="#535353"/>
<path d="M926.0 800.7L932.1 801.5L929.8 805.0L923.5 804.6Z" fill="#535353"/>
<path d="M923.5 804.6L929.8 805.0L927.5 808.5L921.0 808.4Z" fill="#525252"/>
<path d="M921.0 808.4L927.5 808.5L925.2 812.0L918.5 812.3Z" fill="#515151"/>
<path d="M952.6 770.1L961.0 772.2L958.4 776.0L950.1 773.9Z" fill="#5c5c5c"/>
<path d="M950.1 773.9L958.4 776.0L955.8 779.8L947.6 777.7Z" fill="#5c5c5c"/>
<path d="M947.6 777.7L955.8 779.8L953.2 783.6L945.1 781.5Z" fill="#5c5c5c"/>
<path d="M945.1 781.5L953.2 783.6L950.6 787.4L942.6 785.3Z" fill="#5b5b5b"/>
<path d="M942.6 785.3L950.6 787.4L948.1 791.2L940.1 789.1Z" fill="#5b5b5b"/>
<path d="M940.1 789.1L948.1 791.2L945.5 795.1L937.7 793.0Z" fill="#5a5a5a"/>
<path d="M937.7 793.0L945.5 795.1L942.9 798.9L935.2 796.8Z" fill="#5a5a5a"/>
<path d="M935.2 796.8L942.9 798.9L940.3 802.7L932.7 800.6Z" fill="#5a5a5a"/>
<path d="M932.7 800.6L940.3 802.7L937.8 806.5L930.2 804.4Z" fill="#595959"/>
<path d="M930.2 804.4L937.8 806.5L935.2 810.3L927.7 808.2Z" fill="#595959"/>
<path d="M927.7 808.2L935.2 810.3L932.6 814.1L925.2 812.0Z" fill="#595959"/>
<path d="M961.0 772.2L969.3 774.3L966.6 778.1L958.4 776.0Z" fill="#696969"/>
<path d="M958.4 776.0L966.6 778.1L964.0 781.9L955.8 779.8Z" fill="#696969"/>
<path d="M955.8 779.8L964.0 781.9L961.3 785.7L953.2 783.6Z" fill="#696969"/>
<path d="M953.2 783.6L961.3 785.7L958.6 789.5L950.6 787.4Z" fill="#686868"/>
<path d="M950.6 787.4L958.6 789.5L956.0 793.3L948.1 791.2Z" fill="#686868"/>
<path d="M948.1 791.2L956.0 793.3L953.3 797.2L945.5 795.1Z" fill="#686868"/>
<path d="M945.5 795.1L953.3 797.2L950.7 801.0L942.9 798.9Z" fill="#676767"/>
<path d="M942.9 798.9L950.7 801.0L948.0 804.8L940.3 802.7Z" fill="#676767"/>
<path d="M940.3 802.7L948.0 804.8L945.3 808.6L937.8 806.5Z" fill="#666666"/>
<path d="M937.8 806.5L945.3 808.6L942.7 812.4L935.2 810.3Z" fill="#666666"/>
<path d="M935.2 810.3L942.7 812.4L940.0 816.2L932.6 814.1Z" fill="#666666"/>
<path d="M969.3 774.3L978.3 775.2L975.7 779.1L966.6 778.1Z" fill="#717171"/>
<path d="M966.6 778.1L975.7 779.1L973.0 783.0L964.0 781.9Z" fill="#717171"/>
<path d="M964.0 781.9L973.0 783.0L970.4 786.9L961.3 785.7Z" fill="#707070"/>
<path d="M961.3 785.7L970.4 786.9L967.7 790.8L958.6 789.5Z" fill="#707070"/>
<path d="M958.6 789.5L967.7 790.8L965.1 794.7L956.0 793.3Z" fill="#707070"/>
<path d="M956.0 793.3L965.1 794.7L962.4 798.5L953.3 797.2Z" fill="#6f6f6f"/>
<path d="M953.3 797.2L962.4 798.5L959.7 802.4L950.7 801.0Z" fill="#6f6f6f"/>
<path d="M950.7 801.0L959.7 802.4L957.1 806.3L948.0 804.8Z" fill="#6e6e6e"/>
<path d="M948.0 804.8L957.1 806.3L954.4 810.2L945.3 808.6Z" fill="#6e6e6e"/>
<path d="M945.3 808.6L954.4 810.2L951.8 814.1L942.7 812.4Z" fill="#6e6e6e"/>
<path d="M942.7 812.4L951.8 814.1L949.1 818.0L940.0 816.2Z" fill="#6d6d6d"/>
<path d="M978.3 775.2L987.4 776.2L984.7 780.2L975.7 779.1Z" fill="#747474"/>
<path d="M975.7 779.1L984.7 780.2L982.1 784.1L973.0 783.0Z" fill="#737373"/>
<path d="M973.0 783.0L982.1 784.1L979.4 788.1L970.4 786.9Z" fill="#737373"/>
<path d="M970.4 786.9L979.4 788.1L976.8 792.0L967.7 790.8Z" fill="#727272"/>
<path d="M967.7 790.8L976.8 792.0L974.1 796.0L965.1 794.7Z" fill="#727272"/>
<path d="M965.1 794.7L974.1 796.0L971.5 799.9L962.4 798.5Z" fill="#717171"/>
<path d="M962.4 798.5L971.5 799.9L968.8 803.9L959.7 802.4Z" fill="#717171"/>
<path d="M959.7 802.4L968.8 803.9L966.2 807.8L957.1 806.3Z" fill="#717171"/>
<path d="M957.1 806.3L966.2 807.8L963.5 811.8L954.4 810.2Z" fill="#707070"/>
<path d="M954.4 810.2L963.5 811.8L960.9 815.7L951.8 814.1Z" fill="#707070"/>
<path d="M951.8 814.1L960.9 815.7L958.2 819.7L949.1 818.0Z" fill="#6f6f6f"/>
<path d="M987.4 776.2L1001.4 778.2L998.7 782.2L984.7 780.2Z" fill="#757575"/>
<path d="M984.7 780.2L998.7 782.2L996.1 786.1L982.1 784.1Z" fill="#747474"/>
<path d="M982.1 784.1L996.1 786.1L993.4 790.1L979.4 788.1Z" fill="#747474"/>
<path d="M979.4 788.1L993.4 790.1L990.8 794.0L976.8 792.0Z" fill="#737373"/>
<path d="M976.8 792.0L990.8 794.0L988.1 798.0L974.1 796.0Z" fill="#737373"/>
<path d="M974.1 796.0L988.1 798.0L985.5 801.9L971.5 799.9Z" fill="#727272"/>
<path d="M971.5 799.9L985.5 801.9L982.8 805.9L968.8 803.9Z" fill="#727272"/>
<path d="M968.8 803.9L982.8 805.9L980.2 809.8L966.2 807.8Z" fill="#727272"/>
<path d="M966.2 807.8L980.2 809.8L977.5 813.8L963.5 811.8Z" fill="#717171"/>
<path d="M963.5 811.8L977.5 813.8L974.9 817.7L960.9 815.7Z" fill="#717171"/>
<path d="M960.9 815.7L974.9 817.7L972.2 821.7L958.2 819.7Z" fill="#707070"/>
<path d="M496.0 670.0L510.0 668.0L511.7 672.3L497.7 674.3Z" fill="#828282"/>
<path d="M497.7 674.3L511.7 672.3L513.3 676.5L499.3 678.5Z" fill="#818181"/>
<path d="M499.3 678.5L513.3 676.5L515.0 680.8L501.0 682.8Z" fill="#818181"/>
<path d="M501.0 682.8L515.0 680.8L516.7 685.1L502.7 687.1Z" fill="#808080"/>
<path d="M502.7 687.1L516.7 685.1L518.3 689.4L504.3 691.4Z" fill="#808080"/>
<path d="M504.3 691.4L518.3 689.4L520.0 693.6L506.0 695.6Z" fill="#7f7f7f"/>
<path d="M506.0 695.6L520.0 693.6L521.6 697.9L507.6 699.9Z" fill="#7e7e7e"/>
<path d="M507.6 699.9L521.6 697.9L523.3 702.2L509.3 704.2Z" fill="#7e7e7e"/>
<path d="M509.3 704.2L523.3 702.2L525.0 706.5L511.0 708.5Z" fill="#7d7d7d"/>
<path d="M511.0 708.5L525.0 706.5L526.6 710.7L512.6 712.7Z" fill="#7d7d7d"/>
<path d="M512.6 712.7L526.6 710.7L528.3 715.0L514.3 717.0Z" fill="#7c7c7c"/>
<path d="M510.0 668.0L521.8 673.0L523.0 677.2L511.5 671.9Z" fill="#808080"/>
<path d="M511.5 671.9L523.0 677.2L524.3 681.3L513.0 675.8Z" fill="#808080"/>
<path d="M513.0 675.8L524.3 681.3L525.6 685.5L514.6 679.8Z" fill="#808080"/>
<path d="M514.6 679.8L525.6 685.5L526.9 689.6L516.1 683.7Z" fill="#7f7f7f"/>
<path d="M516.1 683.7L526.9 689.6L528.1 693.8L517.6 687.6Z" fill="#7e7e7e"/>
<path d="M517.6 687.6L528.1 693.8L529.4 698.0L519.1 691.5Z" fill="#7e7e7e"/>
<path d="M519.1 691.5L529.4 698.0L530.7 702.1L520.7 695.4Z" fill="#7e7e7e"/>
<path d="M520.7 695.4L530.7 702.1L531.9 706.3L522.2 699.3Z" fill="#7d7d7d"/>
<path d="M522.2 699.3L531.9 706.3L533.2 710.4L523.7 703.2Z" fill="#7c7c7c"/>
<path d="M523.7 703.2L533.2 710.4L534.5 714.6L525.2 707.2Z" fill="#7c7c7c"/>
<path d="M525.2 707.2L534.5 714.6L535.8 718.8L526.8 711.1Z" fill="#7c7c7c"/>
<path d="M526.8 711.1L535.8 718.8L537.0 722.9L528.3 715.0Z" fill="#7b7b7b"/>
<path d="M521.8 673.0L533.5 678.0L534.5 682.4L523.0 677.2Z" fill="#7e7e7e"/>
<path d="M523.0 677.2L534.5 682.4L535.5 686.8L524.3 681.3Z" fill="#7e7e7e"/>
<path d="M524.3 681.3L535.5 686.8L536.6 691.2L525.6 685.5Z" fill="#7d7d7d"/>
<path d="M525.6 685.5L536.6 691.2L537.6 695.6L526.9 689.6Z" fill="#7c7c7c"/>
<path d="M526.9 689.6L537.6 695.6L538.6 700.0L528.1 693.8Z" fill="#7c7c7c"/>
<path d="M528.1 693.8L538.6 700.0L539.6 704.4L529.4 698.0Z" fill="#7c7c7c"/>
<path d="M529.4 698.0L539.6 704.4L540.7 708.8L530.7 702.1Z" fill="#7b7b7b"/>
<path d="M530.7 702.1L540.7 708.8L541.7 713.2L531.9 706.3Z" fill="#7a7a7a"/>
<path d="M531.9 706.3L541.7 713.2L542.7 717.6L533.2 710.4Z" fill="#7a7a7a"/>
<path d="M533.2 710.4L542.7 717.6L543.8 722.0L534.5 714.6Z" fill="#7a7a7a"/>
<path d="M534.5 714.6L543.8 722.0L544.8 726.4L535.8 718.8Z" fill="#797979"/>
<path d="M535.8 718.8L544.8 726.4L545.8 730.9L537.0 722.9Z" fill="#787878"/>
<path d="M533.5 678.0L545.2 683.0L546.0 687.6L534.5 682.4Z" fill="#7c7c7c"/>
<path d="M534.5 682.4L546.0 687.6L546.8 692.3L535.5 686.8Z" fill="#7b7b7b"/>
<path d="M535.5 686.8L546.8 692.3L547.6 696.9L536.6 691.2Z" fill="#7a7a7a"/>
<path d="M536.6 691.2L547.6 696.9L548.4 701.6L537.6 695.6Z" fill="#7a7a7a"/>
<path d="M537.6 695.6L548.4 701.6L549.1 706.2L538.6 700.0Z" fill="#7a7a7a"/>
<path d="M538.6 700.0L549.1 706.2L549.9 710.9L539.6 704.4Z" fill="#797979"/>
<path d="M539.6 704.4L549.9 710.9L550.7 715.5L540.7 708.8Z" fill="#787878"/>
<path d="M540.7 708.8L550.7 715.5L551.4 720.2L541.7 713.2Z" fill="#787878"/>
<path d="M541.7 713.2L551.4 720.2L552.2 724.8L542.7 717.6Z" fill="#787878"/>
<path d="M542.7 717.6L552.2 724.8L553.0 729.5L543.8 722.0Z" fill="#777777"/>
<path d="M543.8 722.0L553.0 729.5L553.8 734.1L544.8 726.4Z" fill="#767676"/>
<path d="M544.8 726.4L553.8 734.1L554.5 738.8L545.8 730.9Z" fill="#767676"/>
<path d="M545.2 683.0L557.0 688.0L557.5 692.9L546.0 687.6Z" fill="#797979"/>
<path d="M546.0 687.6L557.5 692.9L558.0 697.8L546.8 692.3Z" fill="#787878"/>
<path d="M546.8 692.3L558.0 697.8L558.6 702.7L547.6 696.9Z" fill="#787878"/>
<path d="M547.6 696.9L558.6 702.7L559.1 707.6L548.4 701.6Z" fill="#787878"/>
<path d="M548.4 701.6L559.1 707.6L559.6 712.5L549.1 706.2Z" fill="#777777"/>
<path d="M549.1 706.2L559.6 712.5L560.1 717.4L549.9 710.9Z" fill="#767676"/>
<path d="M549.9 710.9L560.1 717.4L560.7 722.2L550.7 715.5Z" fill="#767676"/>
<path d="M550.7 715.5L560.7 722.2L561.2 727.1L551.4 720.2Z" fill="#767676"/>
<path d="M551.4 720.2L561.2 727.1L561.7 732.0L552.2 724.8Z" fill="#757575"/>
<path d="M552.2 724.8L561.7 732.0L562.2 736.9L553.0 729.5Z" fill="#747474"/>
<path d="M553.0 729.5L562.2 736.9L562.8 741.8L553.8 734.1Z" fill="#747474"/>
<path d="M553.8 734.1L562.8 741.8L563.3 746.7L554.5 738.8Z" fill="#747474"/>
<path d="M557.0 688.0L569.8 693.8L570.2 698.3L557.5 692.5Z" fill="#787878"/>
<path d="M557.5 692.5L570.2 698.3L570.7 702.9L558.0 697.0Z" fill="#777777"/>
<path d="M558.0 697.0L570.7 702.9L571.1 707.5L558.5 701.5Z" fill="#777777"/>
<path d="M558.5 701.5L571.1 707.5L571.6 712.1L558.9 706.1Z" fill="#767676"/>
<path d="M558.9 706.1L571.6 712.1L572.0 716.6L559.4 710.6Z" fill="#767676"/>
<path d="M559.4 710.6L572.0 716.6L572.5 721.2L559.9 715.1Z" fill="#757575"/>
<path d="M559.9 715.1L572.5 721.2L573.0 725.8L560.4 719.6Z" fill="#757575"/>
<path d="M560.4 719.6L573.0 725.8L573.4 730.4L560.9 724.1Z" fill="#747474"/>
<path d="M560.9 724.1L573.4 730.4L573.9 735.0L561.4 728.6Z" fill="#747474"/>
<path d="M561.4 728.6L573.9 735.0L574.3 739.5L561.8 733.2Z" fill="#747474"/>
<path d="M561.8 733.2L574.3 739.5L574.8 744.1L562.3 737.7Z" fill="#737373"/>
<path d="M562.3 737.7L574.8 744.1L575.3 748.7L562.8 742.2Z" fill="#737373"/>
<path d="M562.8 742.2L575.3 748.7L575.7 753.3L563.3 746.7Z" fill="#727272"/>
<path d="M569.8 693.8L582.5 699.5L582.9 704.1L570.2 698.3Z" fill="#787878"/>
<path d="M570.2 698.3L582.9 704.1L583.4 708.8L570.7 702.9Z" fill="#777777"/>
<path d="M570.7 702.9L583.4 708.8L583.8 713.4L571.1 707.5Z" fill="#777777"/>
<path d="M571.1 707.5L583.8 713.4L584.2 718.1L571.6 712.1Z" fill="#767676"/>
<path d="M571.6 712.1L584.2 718.1L584.7 722.7L572.0 716.6Z" fill="#767676"/>
<path d="M572.0 716.6L584.7 722.7L585.1 727.4L572.5 721.2Z" fill="#757575"/>
<path d="M572.5 721.2L585.1 727.4L585.5 732.0L573.0 725.8Z" fill="#757575"/>
<path d="M573.0 725.8L585.5 732.0L586.0 736.6L573.4 730.4Z" fill="#747474"/>
<path d="M573.4 730.4L586.0 736.6L586.4 741.3L573.9 735.0Z" fill="#747474"/>
<path d="M573.9 735.0L586.4 741.3L586.8 745.9L574.3 739.5Z" fill="#737373"/>
<path d="M574.3 739.5L586.8 745.9L587.3 750.6L574.8 744.1Z" fill="#737373"/>
<path d="M574.8 744.1L587.3 750.6L587.7 755.2L575.3 748.7Z" fill="#727272"/>
<path d="M575.3 748.7L587.7 755.2L588.1 759.9L575.7 753.3Z" fill="#727272"/>
<path d="M582.5 699.5L595.2 705.2L595.7 710.0L582.9 704.1Z" fill="#787878"/>
<path d="M582.9 704.1L595.7 710.0L596.1 714.7L583.4 708.8Z" fill="#777777"/>
<path d="M583.4 708.8L596.1 714.7L596.5 719.4L583.8 713.4Z" fill="#777777"/>
<path d="M583.8 713.4L596.5 719.4L596.9 724.1L584.2 718.1Z" fill="#767676"/>
<path d="M584.2 718.1L596.9 724.1L597.3 728.8L584.7 722.7Z" fill="#767676"/>
<path d="M584.7 722.7L597.3 728.8L597.7 733.5L585.1 727.4Z" fill="#757575"/>
<path d="M585.1 727.4L597.7 733.5L598.1 738.2L585.5 732.0Z" fill="#757575"/>
<path d="M585.5 732.0L598.1 738.2L598.5 742.9L586.0 736.6Z" fill="#747474"/>
<path d="M586.0 736.6L598.5 742.9L598.9 747.6L586.4 741.3Z" fill="#747474"/>
<path d="M586.4 741.3L598.9 747.6L599.3 752.3L586.8 745.9Z" fill="#737373"/>
<path d="M586.8 745.9L599.3 752.3L599.8 757.0L587.3 750.6Z" fill="#737373"/>
<path d="M587.3 750.6L599.8 757.0L600.2 761.7L587.7 755.2Z" fill="#727272"/>
<path d="M587.7 755.2L600.2 761.7L600.6 766.4L588.1 759.9Z" fill="#727272"/>
<path d="M595.2 705.2L608.0 711.0L608.4 715.8L595.7 710.0Z" fill="#787878"/>
<path d="M595.7 710.0L608.4 715.8L608.8 720.5L596.1 714.7Z" fill="#777777"/>
<path d="M596.1 714.7L608.8 720.5L609.2 725.3L596.5 719.4Z" fill="#777777"/>
<path d="M596.5 719.4L609.2 725.3L609.5 730.1L596.9 724.1Z" fill="#767676"/>
<path d="M596.9 724.1L609.5 730.1L609.9 734.8L597.3 728.8Z" fill="#767676"/>
<path d="M597.3 728.8L609.9 734.8L610.3 739.6L597.7 733.5Z" fill="#757575"/>
<path d="M597.7 733.5L610.3 739.6L610.7 744.4L598.1 738.2Z" fill="#757575"/>
<path d="M598.1 738.2L610.7 744.4L611.1 749.2L598.5 742.9Z" fill="#747474"/>
<path d="M598.5 742.9L611.1 749.2L611.5 753.9L598.9 747.6Z" fill="#747474"/>
<path d="M598.9 747.6L611.5 753.9L611.8 758.7L599.3 752.3Z" fill="#737373"/>
<path d="M599.3 752.3L611.8 758.7L612.2 763.5L599.8 757.0Z" fill="#727272"/>
<path d="M599.8 757.0L612.2 763.5L612.6 768.2L600.2 761.7Z" fill="#727272"/>
<path d="M600.2 761.7L612.6 768.2L613.0 773.0L600.6 766.4Z" fill="#717171"/>
<path d="M608.0 711.0L620.9 717.8L621.3 722.6L608.4 715.8Z" fill="#787878"/>
<path d="M608.4 715.8L621.3 722.6L621.7 727.3L608.8 720.5Z" fill="#777777"/>
<path d="M608.8 720.5L621.7 727.3L622.1 732.1L609.2 725.3Z" fill="#777777"/>
<path d="M609.2 725.3L622.1 732.1L622.6 736.9L609.5 730.1Z" fill="#767676"/>
<path d="M609.5 730.1L622.6 736.9L623.0 741.6L609.9 734.8Z" fill="#767676"/>
<path d="M609.9 734.8L623.0 741.6L623.4 746.4L610.3 739.6Z" fill="#757575"/>
<path d="M610.3 739.6L623.4 746.4L623.8 751.2L610.7 744.4Z" fill="#757575"/>
<path d="M610.7 744.4L623.8 751.2L624.3 755.9L611.1 749.2Z" fill="#747474"/>
<path d="M611.1 749.2L624.3 755.9L624.7 760.7L611.5 753.9Z" fill="#747474"/>
<path d="M611.5 753.9L624.7 760.7L625.1 765.5L611.8 758.7Z" fill="#737373"/>
<path d="M611.8 758.7L625.1 765.5L625.5 770.2L612.2 763.5Z" fill="#727272"/>
<path d="M612.2 763.5L625.5 770.2L626.0 775.0L612.6 768.2Z" fill="#727272"/>
<path d="M612.6 768.2L626.0 775.0L626.4 779.8L613.0 773.0Z" fill="#717171"/>
<path d="M620.9 717.8L633.8 724.6L634.2 729.4L621.3 722.6Z" fill="#787878"/>
<path d="M621.3 722.6L634.2 729.4L634.7 734.1L621.7 727.3Z" fill="#787878"/>
<path d="M621.7 727.3L634.7 734.1L635.1 738.9L622.1 732.1Z" fill="#777777"/>
<path d="M622.1 732.1L635.1 738.9L635.6 743.7L622.6 736.9Z" fill="#777777"/>
<path d="M622.6 736.9L635.6 743.7L636.1 748.4L623.0 741.6Z" fill="#767676"/>
<path d="M623.0 741.6L636.1 748.4L636.5 753.2L623.4 746.4Z" fill="#767676"/>
<path d="M623.4 746.4L636.5 753.2L637.0 757.9L623.8 751.2Z" fill="#757575"/>
<path d="M623.8 751.2L637.0 757.9L637.4 762.7L624.3 755.9Z" fill="#747474"/>
<path d="M624.3 755.9L637.4 762.7L637.9 767.5L624.7 760.7Z" fill="#747474"/>
<path d="M624.7 760.7L637.9 767.5L638.4 772.2L625.1 765.5Z" fill="#737373"/>
<path d="M625.1 765.5L638.4 772.2L638.8 777.0L625.5 770.2Z" fill="#737373"/>
<path d="M625.5 770.2L638.8 777.0L639.3 781.7L626.0 775.0Z" fill="#727272"/>
<path d="M626.0 775.0L639.3 781.7L639.8 786.5L626.4 779.8Z" fill="#727272"/>
<path d="M633.8 724.6L646.6 731.4L647.1 736.2L634.2 729.4Z" fill="#797979"/>
<path d="M634.2 729.4L647.1 736.2L647.6 740.9L634.7 734.1Z" fill="#787878"/>
<path d="M634.7 734.1L647.6 740.9L648.1 745.7L635.1 738.9Z" fill="#787878"/>
<path d="M635.1 738.9L648.1 745.7L648.6 750.5L635.6 743.7Z" fill="#777777"/>
<path d="M635.6 743.7L648.6 750.5L649.1 755.2L636.1 748.4Z" fill="#777777"/>
<path d="M636.1 748.4L649.1 755.2L649.6 760.0L636.5 753.2Z" fill="#767676"/>
<path d="M636.5 753.2L649.6 760.0L650.1 764.7L637.0 757.9Z" fill="#757575"/>
<path d="M637.0 757.9L650.1 764.7L650.6 769.5L637.4 762.7Z" fill="#757575"/>
<path d="M637.4 762.7L650.6 769.5L651.1 774.2L637.9 767.5Z" fill="#747474"/>
<path d="M637.9 767.5L651.1 774.2L651.6 779.0L638.4 772.2Z" fill="#747474"/>
<path d="M638.4 772.2L651.6 779.0L652.1 783.7L638.8 777.0Z" fill="#737373"/>
<path d="M638.8 777.0L652.1 783.7L652.6 788.5L639.3 781.7Z" fill="#737373"/>
<path d="M639.3 781.7L652.6 788.5L653.1 793.2L639.8 786.5Z" fill="#727272"/>
<path d="M646.6 731.4L659.5 738.2L660.0 743.0L647.1 736.2Z" fill="#797979"/>
<path d="M647.1 736.2L660.0 743.0L660.6 747.8L647.6 740.9Z" fill="#797979"/>
<path d="M647.6 740.9L660.6 747.8L661.1 752.5L648.1 745.7Z" fill="#787878"/>
<path d="M648.1 745.7L661.1 752.5L661.7 757.2L648.6 750.5Z" fill="#787878"/>
<path d="M648.6 750.5L661.7 757.2L662.2 762.0L649.1 755.2Z" fill="#777777"/>
<path d="M649.1 755.2L662.2 762.0L662.7 766.8L649.6 760.0Z" fill="#767676"/>
<path d="M649.6 760.0L662.7 766.8L663.3 771.5L650.1 764.7Z" fill="#767676"/>
<path d="M650.1 764.7L663.3 771.5L663.8 776.2L650.6 769.5Z" fill="#757575"/>
<path d="M650.6 769.5L663.8 776.2L664.3 781.0L651.1 774.2Z" fill="#757575"/>
<path d="M651.1 774.2L664.3 781.0L664.9 785.8L651.6 779.0Z" fill="#747474"/>
<path d="M651.6 779.0L664.9 785.8L665.4 790.5L652.1 783.7Z" fill="#737373"/>
<path d="M652.1 783.7L665.4 790.5L666.0 795.2L652.6 788.5Z" fill="#737373"/>
<path d="M652.6 788.5L666.0 795.2L666.5 800.0L653.1 793.2Z" fill="#727272"/>
<path d="M659.5 738.2L673.7 742.5L674.1 747.0L660.0 742.7Z" fill="#737373"/>
<path d="M660.0 742.7L674.1 747.0L674.6 751.4L660.5 747.1Z" fill="#727272"/>
<path d="M660.5 747.1L674.6 751.4L675.1 755.9L661.0 751.5Z" fill="#727272"/>
<path d="M661.0 751.5L675.1 755.9L675.6 760.3L661.5 755.9Z" fill="#717171"/>
<path d="M661.5 755.9L675.6 760.3L676.0 764.8L662.0 760.3Z" fill="#717171"/>
<path d="M662.0 760.3L676.0 764.8L676.5 769.2L662.5 764.7Z" fill="#707070"/>
<path d="M662.5 764.7L676.5 769.2L677.0 773.7L663.0 769.1Z" fill="#707070"/>
<path d="M663.0 769.1L677.0 773.7L677.4 778.1L663.5 773.5Z" fill="#6f6f6f"/>
<path d="M663.5 773.5L677.4 778.1L677.9 782.6L664.0 777.9Z" fill="#6e6e6e"/>
<path d="M664.0 777.9L677.9 782.6L678.4 787.0L664.5 782.4Z" fill="#6e6e6e"/>
<path d="M664.5 782.4L678.4 787.0L678.9 791.5L665.0 786.8Z" fill="#6d6d6d"/>
<path d="M665.0 786.8L678.9 791.5L679.3 795.9L665.5 791.2Z" fill="#6d6d6d"/>
<path d="M665.5 791.2L679.3 795.9L679.8 800.4L666.0 795.6Z" fill="#6c6c6c"/>
<path d="M666.0 795.6L679.8 800.4L680.3 804.8L666.5 800.0Z" fill="#6c6c6c"/>
<path d="M673.7 742.5L687.9 746.9L688.3 751.3L674.1 747.0Z" fill="#727272"/>
<path d="M674.1 747.0L688.3 751.3L688.7 755.8L674.6 751.4Z" fill="#717171"/>
<path d="M674.6 751.4L688.7 755.8L689.2 760.3L675.1 755.9Z" fill="#707070"/>
<path d="M675.1 755.9L689.2 760.3L689.6 764.8L675.6 760.3Z" fill="#707070"/>
<path d="M675.6 760.3L689.6 764.8L690.1 769.3L676.0 764.8Z" fill="#6f6f6f"/>
<path d="M676.0 764.8L690.1 769.3L690.5 773.7L676.5 769.2Z" fill="#6f6f6f"/>
<path d="M676.5 769.2L690.5 773.7L691.0 778.2L677.0 773.7Z" fill="#6e6e6e"/>
<path d="M677.0 773.7L691.0 778.2L691.4 782.7L677.4 778.1Z" fill="#6e6e6e"/>
<path d="M677.4 778.1L691.4 782.7L691.8 787.2L677.9 782.6Z" fill="#6d6d6d"/>
<path d="M677.9 782.6L691.8 787.2L692.3 791.7L678.4 787.0Z" fill="#6c6c6c"/>
<path d="M678.4 787.0L692.3 791.7L692.7 796.2L678.9 791.5Z" fill="#6c6c6c"/>
<path d="M678.9 791.5L692.7 796.2L693.2 800.6L679.3 795.9Z" fill="#6b6b6b"/>
<path d="M679.3 795.9L693.2 800.6L693.6 805.1L679.8 800.4Z" fill="#6b6b6b"/>
<path d="M679.8 800.4L693.6 805.1L694.0 809.6L680.3 804.8Z" fill="#6a6a6a"/>
<path d="M687.9 746.9L702.0 751.1L702.4 755.7L688.3 751.3Z" fill="#707070"/>
<path d="M688.3 751.3L702.4 755.7L702.9 760.2L688.7 755.8Z" fill="#707070"/>
<path d="M688.7 755.8L702.9 760.2L703.3 764.7L689.2 760.3Z" fill="#6f6f6f"/>
<path d="M689.2 760.3L703.3 764.7L703.7 769.2L689.6 764.8Z" fill="#6e6e6e"/>
<path d="M689.6 764.8L703.7 769.2L704.1 773.7L690.1 769.3Z" fill="#6e6e6e"/>
<path d="M690.1 769.3L704.1 773.7L704.5 778.3L690.5 773.7Z" fill="#6d6d6d"/>
<path d="M690.5 773.7L704.5 778.3L704.9 782.8L691.0 778.2Z" fill="#6d6d6d"/>
<path d="M691.0 778.2L704.9 782.8L705.3 787.3L691.4 782.7Z" fill="#6c6c6c"/>
<path d="M691.4 782.7L705.3 787.3L705.8 791.8L691.8 787.2Z" fill="#6c6c6c"/>
<path d="M691.8 787.2L705.8 791.8L706.2 796.3L692.3 791.7Z" fill="#6b6b6b"/>
<path d="M692.3 791.7L706.2 796.3L706.6 800.8L692.7 796.2Z" fill="#6a6a6a"/>
<path d="M692.7 796.2L706.6 800.8L707.0 805.4L693.2 800.6Z" fill="#6a6a6a"/>
<path d="M693.2 800.6L707.0 805.4L707.4 809.9L693.6 805.1Z" fill="#696969"/>
<path d="M693.6 805.1L707.4 809.9L707.8 814.4L694.0 809.6Z" fill="#696969"/>
<path d="M702.0 751.1L716.2 755.5L716.6 760.0L702.4 755.7Z" fill="#6f6f6f"/>
<path d="M702.4 755.7L716.6 760.0L717.0 764.6L702.9 760.2Z" fill="#6e6e6e"/>
<path d="M702.9 760.2L717.0 764.6L717.4 769.1L703.3 764.7Z" fill="#6e6e6e"/>
<path d="M703.3 764.7L717.4 769.1L717.7 773.7L703.7 769.2Z" fill="#6d6d6d"/>
<path d="M703.7 769.2L717.7 773.7L718.1 778.2L704.1 773.7Z" fill="#6d6d6d"/>
<path d="M704.1 773.7L718.1 778.2L718.5 782.8L704.5 778.3Z" fill="#6c6c6c"/>
<path d="M704.5 778.3L718.5 782.8L718.9 787.3L704.9 782.8Z" fill="#6b6b6b"/>
<path d="M704.9 782.8L718.9 787.3L719.3 791.9L705.3 787.3Z" fill="#6b6b6b"/>
<path d="M705.3 787.3L719.3 791.9L719.7 796.4L705.8 791.8Z" fill="#6a6a6a"/>
<path d="M705.8 791.8L719.7 796.4L720.1 801.0L706.2 796.3Z" fill="#6a6a6a"/>
<path d="M706.2 796.3L720.1 801.0L720.4 805.5L706.6 800.8Z" fill="#696969"/>
<path d="M706.6 800.8L720.4 805.5L720.8 810.1L707.0 805.4Z" fill="#696969"/>
<path d="M707.0 805.4L720.8 810.1L721.2 814.6L707.4 809.9Z" fill="#686868"/>
<path d="M707.4 809.9L721.2 814.6L721.6 819.2L707.8 814.4Z" fill="#676767"/>
<path d="M716.2 755.5L730.4 759.8L730.7 764.3L716.6 760.0Z" fill="#6d6d6d"/>
<path d="M716.6 760.0L730.7 764.3L731.1 768.9L717.0 764.6Z" fill="#6d6d6d"/>
<path d="M717.0 764.6L731.1 768.9L731.4 773.5L717.4 769.1Z" fill="#6c6c6c"/>
<path d="M717.4 769.1L731.4 773.5L731.8 778.1L717.7 773.7Z" fill="#6c6c6c"/>
<path d="M717.7 773.7L731.8 778.1L732.2 782.7L718.1 778.2Z" fill="#6b6b6b"/>
<path d="M718.1 778.2L732.2 782.7L732.5 787.3L718.5 782.8Z" fill="#6b6b6b"/>
<path d="M718.5 782.8L732.5 787.3L732.9 791.9L718.9 787.3Z" fill="#6a6a6a"/>
<path d="M718.9 787.3L732.9 791.9L733.2 796.5L719.3 791.9Z" fill="#696969"/>
<path d="M719.3 791.9L733.2 796.5L733.6 801.1L719.7 796.4Z" fill="#696969"/>
<path d="M719.7 796.4L733.6 801.1L733.9 805.6L720.1 801.0Z" fill="#686868"/>
<path d="M720.1 801.0L733.9 805.6L734.3 810.2L720.4 805.5Z" fill="#686868"/>
<path d="M720.4 805.5L734.3 810.2L734.7 814.8L720.8 810.1Z" fill="#676767"/>
<path d="M720.8 810.1L734.7 814.8L735.0 819.4L721.2 814.6Z" fill="#676767"/>
<path d="M721.2 814.6L735.0 819.4L735.4 824.0L721.6 819.2Z" fill="#666666"/>
<path d="M730.4 759.8L744.5 764.0L744.9 768.7L730.7 764.3Z" fill="#6c6c6c"/>
<path d="M730.7 764.3L744.9 768.7L745.2 773.3L731.1 768.9Z" fill="#6b6b6b"/>
<path d="M731.1 768.9L745.2 773.3L745.5 777.9L731.4 773.5Z" fill="#6b6b6b"/>
<path d="M731.4 773.5L745.5 777.9L745.9 782.5L731.8 778.1Z" fill="#6a6a6a"/>
<path d="M731.8 778.1L745.9 782.5L746.2 787.2L732.2 782.7Z" fill="#6a6a6a"/>
<path d="M732.2 782.7L746.2 787.2L746.5 791.8L732.5 787.3Z" fill="#696969"/>
<path d="M732.5 787.3L746.5 791.8L746.8 796.4L732.9 791.9Z" fill="#696969"/>
<path d="M732.9 791.9L746.8 796.4L747.2 801.0L733.2 796.5Z" fill="#686868"/>
<path d="M733.2 796.5L747.2 801.0L747.5 805.7L733.6 801.1Z" fill="#676767"/>
<path d="M733.6 801.1L747.5 805.7L747.8 810.3L733.9 805.6Z" fill="#676767"/>
<path d="M733.9 805.6L747.8 810.3L748.2 814.9L734.3 810.2Z" fill="#666666"/>
<path d="M734.3 810.2L748.2 814.9L748.5 819.5L734.7 814.8Z" fill="#666666"/>
<path d="M734.7 814.8L748.5 819.5L748.8 824.2L735.0 819.4Z" fill="#656565"/>
<path d="M735.0 819.4L748.8 824.2L749.1 828.8L735.4 824.0Z" fill="#656565"/>
<path d="M744.5 764.0L758.7 768.4L759.0 773.0L744.9 768.7Z" fill="#6b6b6b"/>
<path d="M744.9 768.7L759.0 773.0L759.3 777.7L745.2 773.3Z" fill="#6a6a6a"/>
<path d="M745.2 773.3L759.3 777.7L759.6 782.3L745.5 777.9Z" fill="#696969"/>
<path d="M745.5 777.9L759.6 782.3L759.9 787.0L745.9 782.5Z" fill="#696969"/>
<path d="M745.9 782.5L759.9 787.0L760.2 791.7L746.2 787.2Z" fill="#686868"/>
<path d="M746.2 787.2L760.2 791.7L760.5 796.3L746.5 791.8Z" fill="#686868"/>
<path d="M746.5 791.8L760.5 796.3L760.8 801.0L746.8 796.4Z" fill="#676767"/>
<path d="M746.8 796.4L760.8 801.0L761.1 805.6L747.2 801.0Z" fill="#676767"/>
<path d="M747.2 801.0L761.1 805.6L761.4 810.3L747.5 805.7Z" fill="#666666"/>
<path d="M747.5 805.7L761.4 810.3L761.7 815.0L747.8 810.3Z" fill="#656565"/>
<path d="M747.8 810.3L761.7 815.0L762.0 819.6L748.2 814.9Z" fill="#656565"/>
<path d="M748.2 814.9L762.0 819.6L762.3 824.3L748.5 819.5Z" fill="#646464"/>
<path d="M748.5 819.5L762.3 824.3L762.6 828.9L748.8 824.2Z" fill="#646464"/>
<path d="M748.8 824.2L762.6 828.9L762.9 833.6L749.1 828.8Z" fill="#636363"/>
<path d="M758.7 768.4L772.9 772.6L773.2 777.3L759.0 773.0Z" fill="#696969"/>
<path d="M759.0 773.0L773.2 777.3L773.4 782.0L759.3 777.7Z" fill="#696969"/>
<path d="M759.3 777.7L773.4 782.0L773.7 786.7L759.6 782.3Z" fill="#686868"/>
<path d="M759.6 782.3L773.7 786.7L774.0 791.4L759.9 787.0Z" fill="#686868"/>
<path d="M759.9 787.0L774.0 791.4L774.3 796.1L760.2 791.7Z" fill="#676767"/>
<path d="M760.2 791.7L774.3 796.1L774.5 800.8L760.5 796.3Z" fill="#666666"/>
<path d="M760.5 796.3L774.5 800.8L774.8 805.5L760.8 801.0Z" fill="#666666"/>
<path d="M760.8 801.0L774.8 805.5L775.1 810.2L761.1 805.6Z" fill="#656565"/>
<path d="M761.1 805.6L775.1 810.2L775.3 814.9L761.4 810.3Z" fill="#656565"/>
<path d="M761.4 810.3L775.3 814.9L775.6 819.6L761.7 815.0Z" fill="#646464"/>
<path d="M761.7 815.0L775.6 819.6L775.9 824.3L762.0 819.6Z" fill="#646464"/>
<path d="M762.0 819.6L775.9 824.3L776.2 829.0L762.3 824.3Z" fill="#636363"/>
<path d="M762.3 824.3L776.2 829.0L776.4 833.7L762.6 828.9Z" fill="#626262"/>
<path d="M762.6 828.9L776.4 833.7L776.7 838.4L762.9 833.6Z" fill="#626262"/>
<path d="M772.9 772.6L787.1 777.0L787.3 781.7L773.2 777.3Z" fill="#686868"/>
<path d="M773.2 777.3L787.3 781.7L787.6 786.4L773.4 782.0Z" fill="#676767"/>
<path d="M773.4 782.0L787.6 786.4L787.8 791.1L773.7 786.7Z" fill="#676767"/>
<path d="M773.7 786.7L787.8 791.1L788.0 795.9L774.0 791.4Z" fill="#666666"/>
<path d="M774.0 791.4L788.0 795.9L788.3 800.6L774.3 796.1Z" fill="#666666"/>
<path d="M774.3 796.1L788.3 800.6L788.5 805.3L774.5 800.8Z" fill="#656565"/>
<path d="M774.5 800.8L788.5 805.3L788.8 810.1L774.8 805.5Z" fill="#646464"/>
<path d="M774.8 805.5L788.8 810.1L789.0 814.8L775.1 810.2Z" fill="#646464"/>
<path d="M775.1 810.2L789.0 814.8L789.3 819.5L775.3 814.9Z" fill="#636363"/>
<path d="M775.3 814.9L789.3 819.5L789.5 824.3L775.6 819.6Z" fill="#636363"/>
<path d="M775.6 819.6L789.5 824.3L789.7 829.0L775.9 824.3Z" fill="#626262"/>
<path d="M775.9 824.3L789.7 829.0L790.0 833.7L776.2 829.0Z" fill="#626262"/>
<path d="M776.2 829.0L790.0 833.7L790.2 838.5L776.4 833.7Z" fill="#616161"/>
<path d="M776.4 833.7L790.2 838.5L790.5 843.2L776.7 838.4Z" fill="#606060"/>
<path d="M787.1 777.0L801.2 781.2L801.5 786.0L787.3 781.7Z" fill="#666666"/>
<path d="M787.3 781.7L801.5 786.0L801.7 790.8L787.6 786.4Z" fill="#666666"/>
<path d="M787.6 786.4L801.7 790.8L801.9 795.6L787.8 791.1Z" fill="#656565"/>
<path d="M787.8 791.1L801.9 795.6L802.1 800.3L788.0 795.9Z" fill="#656565"/>
<path d="M788.0 795.9L802.1 800.3L802.3 805.1L788.3 800.6Z" fill="#646464"/>
<path d="M788.3 800.6L802.3 805.1L802.5 809.9L788.5 805.3Z" fill="#646464"/>
<path d="M788.5 805.3L802.5 809.9L802.8 814.6L788.8 810.1Z" fill="#636363"/>
<path d="M788.8 810.1L802.8 814.6L803.0 819.4L789.0 814.8Z" fill="#626262"/>
<path d="M789.0 814.8L803.0 819.4L803.2 824.2L789.3 819.5Z" fill="#626262"/>
<path d="M789.3 819.5L803.2 824.2L803.4 828.9L789.5 824.3Z" fill="#616161"/>
<path d="M789.5 824.3L803.4 828.9L803.6 833.7L789.7 829.0Z" fill="#616161"/>
<path d="M789.7 829.0L803.6 833.7L803.8 838.5L790.0 833.7Z" fill="#606060"/>
<path d="M790.0 833.7L803.8 838.5L804.0 843.2L790.2 838.5Z" fill="#606060"/>
<path d="M790.2 838.5L804.0 843.2L804.2 848.0L790.5 843.2Z" fill="#5f5f5f"/>
<path d="M801.2 781.2L815.9 785.1L815.9 789.8L801.5 786.0Z" fill="#646464"/>
<path d="M801.5 786.0L815.9 789.8L816.0 794.4L801.7 790.8Z" fill="#646464"/>
<path d="M801.7 790.8L816.0 794.4L816.0 799.1L801.9 795.6Z" fill="#636363"/>
<path d="M801.9 795.6L816.0 799.1L816.0 803.7L802.1 800.3Z" fill="#636363"/>
<path d="M802.1 800.3L816.0 803.7L816.0 808.4L802.3 805.1Z" fill="#626262"/>
<path d="M802.3 805.1L816.0 808.4L816.1 813.0L802.5 809.9Z" fill="#626262"/>
<path d="M802.5 809.9L816.1 813.0L816.1 817.7L802.8 814.6Z" fill="#616161"/>
<path d="M802.8 814.6L816.1 817.7L816.1 822.3L803.0 819.4Z" fill="#606060"/>
<path d="M803.0 819.4L816.1 822.3L816.1 827.0L803.2 824.2Z" fill="#606060"/>
<path d="M803.2 824.2L816.1 827.0L816.2 831.6L803.4 828.9Z" fill="#5f5f5f"/>
<path d="M803.4 828.9L816.2 831.6L816.2 836.3L803.6 833.7Z" fill="#5f5f5f"/>
<path d="M803.6 833.7L816.2 836.3L816.2 840.9L803.8 838.5Z" fill="#5e5e5e"/>
<path d="M803.8 838.5L816.2 840.9L816.3 845.6L804.0 843.2Z" fill="#5e5e5e"/>
<path d="M804.0 843.2L816.3 845.6L816.3 850.2L804.2 848.0Z" fill="#5d5d5d"/>
<path d="M815.9 785.1L830.6 789.0L830.4 793.5L815.9 789.8Z" fill="#626262"/>
<path d="M815.9 789.8L830.4 793.5L830.2 798.1L816.0 794.4Z" fill="#616161"/>
<path d="M816.0 794.4L830.2 798.1L830.1 802.6L816.0 799.1Z" fill="#616161"/>
<path d="M816.0 799.1L830.1 802.6L829.9 807.1L816.0 803.7Z" fill="#606060"/>
<path d="M816.0 803.7L829.9 807.1L829.8 811.7L816.0 808.4Z" fill="#5f5f5f"/>
<path d="M816.0 808.4L829.8 811.7L829.6 816.2L816.1 813.0Z" fill="#5f5f5f"/>
<path d="M816.1 813.0L829.6 816.2L829.4 820.7L816.1 817.7Z" fill="#5e5e5e"/>
<path d="M816.1 817.7L829.4 820.7L829.3 825.3L816.1 822.3Z" fill="#5e5e5e"/>
<path d="M816.1 822.3L829.3 825.3L829.1 829.8L816.1 827.0Z" fill="#5d5d5d"/>
<path d="M816.1 827.0L829.1 829.8L829.0 834.3L816.2 831.6Z" fill="#5d5d5d"/>
<path d="M816.2 831.6L829.0 834.3L828.8 838.9L816.2 836.3Z" fill="#5c5c5c"/>
<path d="M816.2 836.3L828.8 838.9L828.6 843.4L816.2 840.9Z" fill="#5c5c5c"/>
<path d="M816.2 840.9L828.6 843.4L828.5 847.9L816.3 845.6Z" fill="#5b5b5b"/>
<path d="M816.3 845.6L828.5 847.9L828.3 852.5L816.3 850.2Z" fill="#5b5b5b"/>
<path d="M830.6 789.0L845.2 792.9L844.9 797.3L830.4 793.5Z" fill="#5f5f5f"/>
<path d="M830.4 793.5L844.9 797.3L844.5 801.7L830.2 798.1Z" fill="#5e5e5e"/>
<path d="M830.2 798.1L844.5 801.7L844.2 806.1L830.1 802.6Z" fill="#5e5e5e"/>
<path d="M830.1 802.6L844.2 806.1L843.8 810.5L829.9 807.1Z" fill="#5d5d5d"/>
<path d="M829.9 807.1L843.8 810.5L843.5 815.0L829.8 811.7Z" fill="#5d5d5d"/>
<path d="M829.8 811.7L843.5 815.0L843.1 819.4L829.6 816.2Z" fill="#5c5c5c"/>
<path d="M829.6 816.2L843.1 819.4L842.8 823.8L829.4 820.7Z" fill="#5c5c5c"/>
<path d="M829.4 820.7L842.8 823.8L842.4 828.2L829.3 825.3Z" fill="#5b5b5b"/>
<path d="M829.3 825.3L842.4 828.2L842.1 832.6L829.1 829.8Z" fill="#5b5b5b"/>
<path d="M829.1 829.8L842.1 832.6L841.7 837.0L829.0 834.3Z" fill="#5a5a5a"/>
<path d="M829.0 834.3L841.7 837.0L841.4 841.4L828.8 838.9Z" fill="#5a5a5a"/>
<path d="M828.8 838.9L841.4 841.4L841.0 845.8L828.6 843.4Z" fill="#595959"/>
<path d="M828.6 843.4L841.0 845.8L840.7 850.3L828.5 847.9Z" fill="#595959"/>
<path d="M828.5 847.9L840.7 850.3L840.3 854.7L828.3 852.5Z" fill="#585858"/>
<path d="M845.2 792.9L859.9 796.8L859.3 801.1L844.9 797.3Z" fill="#5c5c5c"/>
<path d="M844.9 797.3L859.3 801.1L858.8 805.4L844.5 801.7Z" fill="#5c5c5c"/>
<path d="M844.5 801.7L858.8 805.4L858.3 809.7L844.2 806.1Z" fill="#5b5b5b"/>
<path d="M844.2 806.1L858.3 809.7L857.7 814.0L843.8 810.5Z" fill="#5b5b5b"/>
<path d="M843.8 810.5L857.7 814.0L857.2 818.2L843.5 815.0Z" fill="#5a5a5a"/>
<path d="M843.5 815.0L857.2 818.2L856.7 822.5L843.1 819.4Z" fill="#5a5a5a"/>
<path d="M843.1 819.4L856.7 822.5L856.1 826.8L842.8 823.8Z" fill="#595959"/>
<path d="M842.8 823.8L856.1 826.8L855.6 831.1L842.4 828.2Z" fill="#595959"/>
<path d="M842.4 828.2L855.6 831.1L855.1 835.4L842.1 832.6Z" fill="#585858"/>
<path d="M842.1 832.6L855.1 835.4L854.5 839.7L841.7 837.0Z" fill="#585858"/>
<path d="M841.7 837.0L854.5 839.7L854.0 844.0L841.4 841.4Z" fill="#575757"/>
<path d="M841.4 841.4L854.0 844.0L853.4 848.3L841.0 845.8Z" fill="#575757"/>
<path d="M841.0 845.8L853.4 848.3L852.9 852.6L840.7 850.3Z" fill="#565656"/>
<path d="M840.7 850.3L852.9 852.6L852.4 856.9L840.3 854.7Z" fill="#565656"/>
<path d="M859.9 796.8L874.5 800.7L873.8 804.8L859.3 801.1Z" fill="#595959"/>
<path d="M859.3 801.1L873.8 804.8L873.1 809.0L858.8 805.4Z" fill="#595959"/>
<path d="M858.8 805.4L873.1 809.0L872.4 813.2L858.3 809.7Z" fill="#585858"/>
<path d="M858.3 809.7L872.4 813.2L871.6 817.4L857.7 814.0Z" fill="#585858"/>
<path d="M857.7 814.0L871.6 817.4L870.9 821.5L857.2 818.2Z" fill="#575757"/>
<path d="M857.2 818.2L870.9 821.5L870.2 825.7L856.7 822.5Z" fill="#575757"/>
<path d="M856.7 822.5L870.2 825.7L869.5 829.9L856.1 826.8Z" fill="#565656"/>
<path d="M856.1 826.8L869.5 829.9L868.7 834.1L855.6 831.1Z" fill="#565656"/>
<path d="M855.6 831.1L868.7 834.1L868.0 838.2L855.1 835.4Z" fill="#555555"/>
<path d="M855.1 835.4L868.0 838.2L867.3 842.4L854.5 839.7Z" fill="#555555"/>
<path d="M854.5 839.7L867.3 842.4L866.6 846.6L854.0 844.0Z" fill="#545454"/>
<path d="M854.0 844.0L866.6 846.6L865.9 850.8L853.4 848.3Z" fill="#545454"/>
<path d="M853.4 848.3L865.9 850.8L865.1 854.9L852.9 852.6Z" fill="#535353"/>
<path d="M852.9 852.6L865.1 854.9L864.4 859.1L852.4 856.9Z" fill="#535353"/>
<path d="M874.5 800.7L889.2 804.5L888.3 808.6L873.8 804.8Z" fill="#575757"/>
<path d="M873.8 804.8L888.3 808.6L887.4 812.7L873.1 809.0Z" fill="#565656"/>
<path d="M873.1 809.0L887.4 812.7L886.5 816.7L872.4 813.2Z" fill="#565656"/>
<path d="M872.4 813.2L886.5 816.7L885.5 820.8L871.6 817.4Z" fill="#555555"/>
<path d="M871.6 817.4L885.5 820.8L884.6 824.8L870.9 821.5Z" fill="#555555"/>
<path d="M870.9 821.5L884.6 824.8L883.7 828.9L870.2 825.7Z" fill="#545454"/>
<path d="M870.2 825.7L883.7 828.9L882.8 832.9L869.5 829.9Z" fill="#545454"/>
<path d="M869.5 829.9L882.8 832.9L881.9 837.0L868.7 834.1Z" fill="#535353"/>
<path d="M868.7 834.1L881.9 837.0L881.0 841.1L868.0 838.2Z" fill="#535353"/>
<path d="M868.0 838.2L881.0 841.1L880.1 845.1L867.3 842.4Z" fill="#525252"/>
<path d="M867.3 842.4L880.1 845.1L879.2 849.2L866.6 846.6Z" fill="#525252"/>
<path d="M866.6 846.6L879.2 849.2L878.3 853.2L865.9 850.8Z" fill="#515151"/>
<path d="M865.9 850.8L878.3 853.2L877.3 857.3L865.1 854.9Z" fill="#515151"/>
<path d="M865.1 854.9L877.3 857.3L876.4 861.3L864.4 859.1Z" fill="#505050"/>
<path d="M889.2 804.5L903.8 808.4L902.7 812.4L888.3 808.6Z" fill="#545454"/>
<path d="M888.3 808.6L902.7 812.4L901.6 816.3L887.4 812.7Z" fill="#535353"/>
<path d="M887.4 812.7L901.6 816.3L900.5 820.2L886.5 816.7Z" fill="#535353"/>
<path d="M886.5 816.7L900.5 820.2L899.5 824.2L885.5 820.8Z" fill="#535353"/>
<path d="M885.5 820.8L899.5 824.2L898.4 828.1L884.6 824.8Z" fill="#525252"/>
<path d="M884.6 824.8L898.4 828.1L897.3 832.1L883.7 828.9Z" fill="#525252"/>
<path d="M883.7 828.9L897.3 832.1L896.2 836.0L882.8 832.9Z" fill="#515151"/>
<path d="M882.8 832.9L896.2 836.0L895.1 839.9L881.9 837.0Z" fill="#515151"/>
<path d="M881.9 837.0L895.1 839.9L894.0 843.9L881.0 841.1Z" fill="#505050"/>
<path d="M881.0 841.1L894.0 843.9L892.9 847.8L880.1 845.1Z" fill="#505050"/>
<path d="M880.1 845.1L892.9 847.8L891.8 851.8L879.2 849.2Z" fill="#4f4f4f"/>
<path d="M879.2 849.2L891.8 851.8L890.7 855.7L878.3 853.2Z" fill="#4f4f4f"/>
<path d="M878.3 853.2L890.7 855.7L889.6 859.6L877.3 857.3Z" fill="#4e4e4e"/>
<path d="M877.3 857.3L889.6 859.6L888.5 863.6L876.4 861.3Z" fill="#4e4e4e"/>
<path d="M903.8 808.4L918.5 812.3L917.2 816.1L902.7 812.4Z" fill="#515151"/>
<path d="M902.7 812.4L917.2 816.1L915.9 819.9L901.6 816.3Z" fill="#515151"/>
<path d="M901.6 816.3L915.9 819.9L914.6 823.8L900.5 820.2Z" fill="#505050"/>
<path d="M900.5 820.2L914.6 823.8L913.4 827.6L899.5 824.2Z" fill="#505050"/>
<path d="M899.5 824.2L913.4 827.6L912.1 831.4L898.4 828.1Z" fill="#4f4f4f"/>
<path d="M898.4 828.1L912.1 831.4L910.8 835.2L897.3 832.1Z" fill="#4f4f4f"/>
<path d="M897.3 832.1L910.8 835.2L909.5 839.0L896.2 836.0Z" fill="#4f4f4f"/>
<path d="M896.2 836.0L909.5 839.0L908.2 842.9L895.1 839.9Z" fill="#4e4e4e"/>
<path d="M895.1 839.9L908.2 842.9L906.9 846.7L894.0 843.9Z" fill="#4e4e4e"/>
<path d="M894.0 843.9L906.9 846.7L905.6 850.5L892.9 847.8Z" fill="#4d4d4d"/>
<path d="M892.9 847.8L905.6 850.5L904.4 854.3L891.8 851.8Z" fill="#4d4d4d"/>
<path d="M891.8 851.8L904.4 854.3L903.1 858.2L890.7 855.7Z" fill="#4c4c4c"/>
<path d="M890.7 855.7L903.1 858.2L901.8 862.0L889.6 859.6Z" fill="#4c4c4c"/>
<path d="M889.6 859.6L901.8 862.0L900.5 865.8L888.5 863.6Z" fill="#4b4b4b"/>
<path d="M918.5 812.3L925.2 812.0L923.7 816.2L917.0 816.8Z" fill="#515151"/>
<path d="M917.0 816.8L923.7 816.2L922.2 820.4L915.5 821.2Z" fill="#505050"/>
<path d="M915.5 821.2L922.2 820.4L920.7 824.5L914.0 825.7Z" fill="#505050"/>
<path d="M914.0 825.7L920.7 824.5L919.2 828.7L912.5 830.1Z" fill="#505050"/>
<path d="M912.5 830.1L919.2 828.7L917.7 832.9L911.0 834.6Z" fill="#4f4f4f"/>
<path d="M911.0 834.6L917.7 832.9L916.2 837.1L909.5 839.0Z" fill="#4f4f4f"/>
<path d="M909.5 839.0L916.2 837.1L914.7 841.3L908.0 843.5Z" fill="#4e4e4e"/>
<path d="M908.0 843.5L914.7 841.3L913.2 845.5L906.5 848.0Z" fill="#4e4e4e"/>
<path d="M906.5 848.0L913.2 845.5L911.7 849.7L905.0 852.4Z" fill="#4d4d4d"/>
<path d="M905.0 852.4L911.7 849.7L910.2 853.8L903.5 856.9Z" fill="#4d4d4d"/>
<path d="M903.5 856.9L910.2 853.8L908.7 858.0L902.0 861.3Z" fill="#4d4d4d"/>
<path d="M902.0 861.3L908.7 858.0L907.2 862.2L900.5 865.8Z" fill="#4c4c4c"/>
<path d="M925.2 812.0L932.6 814.1L931.0 818.5L923.6 816.6Z" fill="#585858"/>
<path d="M923.6 816.6L931.0 818.5L929.5 822.9L921.9 821.1Z" fill="#585858"/>
<path d="M921.9 821.1L929.5 822.9L927.9 827.3L920.3 825.7Z" fill="#585858"/>
<path d="M920.3 825.7L927.9 827.3L926.3 831.8L918.7 830.3Z" fill="#575757"/>
<path d="M918.7 830.3L926.3 831.8L924.7 836.2L917.0 834.8Z" fill="#575757"/>
<path d="M917.0 834.8L924.7 836.2L923.2 840.6L915.4 839.4Z" fill="#565656"/>
<path d="M915.4 839.4L923.2 840.6L921.6 845.0L913.7 843.9Z" fill="#565656"/>
<path d="M913.7 843.9L921.6 845.0L920.0 849.4L912.1 848.5Z" fill="#565656"/>
<path d="M912.1 848.5L920.0 849.4L918.4 853.8L910.5 853.1Z" fill="#555555"/>
<path d="M910.5 853.1L918.4 853.8L916.9 858.2L908.8 857.6Z" fill="#555555"/>
<path d="M908.8 857.6L916.9 858.2L915.3 862.7L907.2 862.2Z" fill="#555555"/>
<path d="M932.6 814.1L940.0 816.2L938.5 820.5L931.0 818.5Z" fill="#656565"/>
<path d="M931.0 818.5L938.5 820.5L937.0 824.7L929.5 822.9Z" fill="#656565"/>
<path d="M929.5 822.9L937.0 824.7L935.5 829.0L927.9 827.3Z" fill="#656565"/>
<path d="M927.9 827.3L935.5 829.0L934.0 833.3L926.3 831.8Z" fill="#646464"/>
<path d="M926.3 831.8L934.0 833.3L932.5 837.5L924.7 836.2Z" fill="#646464"/>
<path d="M924.7 836.2L932.5 837.5L930.9 841.8L923.2 840.6Z" fill="#646464"/>
<path d="M923.2 840.6L930.9 841.8L929.4 846.0L921.6 845.0Z" fill="#636363"/>
<path d="M921.6 845.0L929.4 846.0L927.9 850.3L920.0 849.4Z" fill="#636363"/>
<path d="M920.0 849.4L927.9 850.3L926.4 854.6L918.4 853.8Z" fill="#626262"/>
<path d="M918.4 853.8L926.4 854.6L924.9 858.8L916.9 858.2Z" fill="#626262"/>
<path d="M916.9 858.2L924.9 858.8L923.4 863.1L915.3 862.7Z" fill="#626262"/>
<path d="M940.0 816.2L949.1 818.0L947.2 822.5L938.3 820.9Z" fill="#6d6d6d"/>
<path d="M938.3 820.9L947.2 822.5L945.3 827.0L936.7 825.6Z" fill="#6c6c6c"/>
<path d="M936.7 825.6L945.3 827.0L943.4 831.5L935.0 830.3Z" fill="#6c6c6c"/>
<path d="M935.0 830.3L943.4 831.5L941.5 836.0L933.4 835.0Z" fill="#6c6c6c"/>
<path d="M933.4 835.0L941.5 836.0L939.6 840.5L931.7 839.7Z" fill="#6b6b6b"/>
<path d="M931.7 839.7L939.6 840.5L937.7 845.0L930.0 844.3Z" fill="#6b6b6b"/>
<path d="M930.0 844.3L937.7 845.0L935.8 849.6L928.4 849.0Z" fill="#6a6a6a"/>
<path d="M928.4 849.0L935.8 849.6L933.9 854.1L926.7 853.7Z" fill="#6a6a6a"/>
<path d="M926.7 853.7L933.9 854.1L932.0 858.6L925.1 858.4Z" fill="#6a6a6a"/>
<path d="M925.1 858.4L932.0 858.6L930.0 863.1L923.4 863.1Z" fill="#696969"/>
<path d="M949.1 818.0L958.2 819.7L956.1 824.0L947.2 822.5Z" fill="#6f6f6f"/>
<path d="M947.2 822.5L956.1 824.0L953.9 828.4L945.3 827.0Z" fill="#6e6e6e"/>
<path d="M945.3 827.0L953.9 828.4L951.8 832.7L943.4 831.5Z" fill="#6e6e6e"/>
<path d="M943.4 831.5L951.8 832.7L949.6 837.1L941.5 836.0Z" fill="#6e6e6e"/>
<path d="M941.5 836.0L949.6 837.1L947.5 841.4L939.6 840.5Z" fill="#6d6d6d"/>
<path d="M939.6 840.5L947.5 841.4L945.3 845.7L937.7 845.0Z" fill="#6d6d6d"/>
<path d="M937.7 845.0L945.3 845.7L943.2 850.1L935.8 849.6Z" fill="#6c6c6c"/>
<path d="M935.8 849.6L943.2 850.1L941.0 854.4L933.9 854.1Z" fill="#6c6c6c"/>
<path d="M933.9 854.1L941.0 854.4L938.9 858.8L932.0 858.6Z" fill="#6c6c6c"/>
<path d="M932.0 858.6L938.9 858.8L936.7 863.1L930.0 863.1Z" fill="#6b6b6b"/>
<path d="M958.2 819.7L972.2 821.7L970.1 826.0L956.1 824.0Z" fill="#707070"/>
<path d="M956.1 824.0L970.1 826.0L967.9 830.4L953.9 828.4Z" fill="#6f6f6f"/>
<path d="M953.9 828.4L967.9 830.4L965.8 834.7L951.8 832.7Z" fill="#6f6f6f"/>
<path d="M951.8 832.7L965.8 834.7L963.6 839.1L949.6 837.1Z" fill="#6f6f6f"/>
<path d="M949.6 837.1L963.6 839.1L961.5 843.4L947.5 841.4Z" fill="#6e6e6e"/>
<path d="M947.5 841.4L961.5 843.4L959.3 847.7L945.3 845.7Z" fill="#6e6e6e"/>
<path d="M945.3 845.7L959.3 847.7L957.2 852.1L943.2 850.1Z" fill="#6d6d6d"/>
<path d="M943.2 850.1L957.2 852.1L955.0 856.4L941.0 854.4Z" fill="#6d6d6d"/>
<path d="M941.0 854.4L955.0 856.4L952.9 860.8L938.9 858.8Z" fill="#6d6d6d"/>
<path d="M938.9 858.8L952.9 860.8L950.7 865.1L936.7 863.1Z" fill="#6c6c6c"/>
<path d="M514.3 717.0L528.3 715.0L527.0 719.7L513.0 721.7Z" fill="#7c7c7c"/>
<path d="M513.0 721.7L527.0 719.7L525.6 724.3L511.6 726.3Z" fill="#7c7c7c"/>
<path d="M511.6 726.3L525.6 724.3L524.3 729.0L510.3 731.0Z" fill="#7c7c7c"/>
<path d="M528.3 715.0L540.0 725.6L538.6 730.2L527.0 719.7Z" fill="#7a7a7a"/>
<path d="M527.0 719.7L538.6 730.2L537.3 734.9L525.6 724.3Z" fill="#7a7a7a"/>
<path d="M525.6 724.3L537.3 734.9L536.0 739.6L524.3 729.0Z" fill="#7a7a7a"/>
<path d="M540.0 725.6L551.6 736.1L550.3 740.8L538.6 730.2Z" fill="#777777"/>
<path d="M538.6 730.2L550.3 740.8L549.0 745.5L537.3 734.9Z" fill="#777777"/>
<path d="M537.3 734.9L549.0 745.5L547.6 750.1L536.0 739.6Z" fill="#777777"/>
<path d="M551.6 736.1L563.3 746.7L562.0 751.4L550.3 740.8Z" fill="#747474"/>
<path d="M550.3 740.8L562.0 751.4L560.6 756.0L549.0 745.5Z" fill="#747474"/>
<path d="M549.0 745.5L560.6 756.0L559.3 760.7L547.6 750.1Z" fill="#747474"/>
<path d="M563.3 746.7L575.7 753.3L574.4 757.9L562.0 751.4Z" fill="#727272"/>
<path d="M562.0 751.4L574.4 757.9L573.1 762.6L560.6 756.0Z" fill="#727272"/>
<path d="M560.6 756.0L573.1 762.6L571.7 767.3L559.3 760.7Z" fill="#727272"/>
<path d="M575.7 753.3L588.1 759.9L586.8 764.5L574.4 757.9Z" fill="#727272"/>
<path d="M574.4 757.9L586.8 764.5L585.5 769.2L573.1 762.6Z" fill="#727272"/>
<path d="M573.1 762.6L585.5 769.2L584.1 773.9L571.7 767.3Z" fill="#727272"/>
<path d="M588.1 759.9L600.6 766.4L599.2 771.1L586.8 764.5Z" fill="#717171"/>
<path d="M586.8 764.5L599.2 771.1L597.9 775.8L585.5 769.2Z" fill="#717171"/>
<path d="M585.5 769.2L597.9 775.8L596.6 780.4L584.1 773.9Z" fill="#717171"/>
<path d="M600.6 766.4L613.0 773.0L611.7 777.7L599.2 771.1Z" fill="#717171"/>
<path d="M599.2 771.1L611.7 777.7L610.3 782.3L597.9 775.8Z" fill="#717171"/>
<path d="M597.9 775.8L610.3 782.3L609.0 787.0L596.6 780.4Z" fill="#717171"/>
<path d="M613.0 773.0L626.4 779.8L625.4 784.4L611.7 777.7Z" fill="#717171"/>
<path d="M611.7 777.7L625.4 784.4L624.4 789.1L610.3 782.3Z" fill="#717171"/>
<path d="M610.3 782.3L624.4 789.1L623.4 793.8L609.0 787.0Z" fill="#717171"/>
<path d="M626.4 779.8L639.8 786.5L639.1 791.2L625.4 784.4Z" fill="#717171"/>
<path d="M625.4 784.4L639.1 791.2L638.4 795.8L624.4 789.1Z" fill="#717171"/>
<path d="M624.4 789.1L638.4 795.8L637.8 800.5L623.4 793.8Z" fill="#717171"/>
<path d="M639.8 786.5L653.1 793.2L652.8 797.9L639.1 791.2Z" fill="#727272"/>
<path d="M639.1 791.2L652.8 797.9L652.5 802.6L638.4 795.8Z" fill="#727272"/>
<path d="M638.4 795.8L652.5 802.6L652.1 807.2L637.8 800.5Z" fill="#727272"/>
<path d="M653.1 793.2L666.5 800.0L666.5 804.7L652.8 797.9Z" fill="#727272"/>
<path d="M652.8 797.9L666.5 804.7L666.5 809.3L652.5 802.6Z" fill="#727272"/>
<path d="M652.5 802.6L666.5 809.3L666.5 814.0L652.1 807.2Z" fill="#727272"/>
<path d="M666.5 800.0L680.3 804.8L680.3 809.5L666.5 804.7Z" fill="#6b6b6b"/>
<path d="M666.5 804.7L680.3 809.5L680.3 814.1L666.5 809.3Z" fill="#6b6b6b"/>
<path d="M666.5 809.3L680.3 814.1L680.3 818.8L666.5 814.0Z" fill="#6b6b6b"/>
<path d="M680.3 804.8L694.0 809.6L694.0 814.3L680.3 809.5Z" fill="#6a6a6a"/>
<path d="M680.3 809.5L694.0 814.3L694.0 818.9L680.3 814.1Z" fill="#6a6a6a"/>
<path d="M680.3 814.1L694.0 818.9L694.0 823.6L680.3 818.8Z" fill="#6a6a6a"/>
<path d="M694.0 809.6L707.8 814.4L707.8 819.1L694.0 814.3Z" fill="#686868"/>
<path d="M694.0 814.3L707.8 819.1L707.8 823.7L694.0 818.9Z" fill="#686868"/>
<path d="M694.0 818.9L707.8 823.7L707.8 828.4L694.0 823.6Z" fill="#686868"/>
<path d="M707.8 814.4L721.6 819.2L721.6 823.9L707.8 819.1Z" fill="#676767"/>
<path d="M707.8 819.1L721.6 823.9L721.6 828.5L707.8 823.7Z" fill="#676767"/>
<path d="M707.8 823.7L721.6 828.5L721.6 833.2L707.8 828.4Z" fill="#676767"/>
<path d="M721.6 819.2L735.4 824.0L735.4 828.7L721.6 823.9Z" fill="#666666"/>
<path d="M721.6 823.9L735.4 828.7L735.4 833.3L721.6 828.5Z" fill="#666666"/>
<path d="M721.6 828.5L735.4 833.3L735.4 838.0L721.6 833.2Z" fill="#666666"/>
<path d="M735.4 824.0L749.1 828.8L749.1 833.5L735.4 828.7Z" fill="#646464"/>
<path d="M735.4 828.7L749.1 833.5L749.1 838.1L735.4 833.3Z" fill="#646464"/>
<path d="M735.4 833.3L749.1 838.1L749.1 842.8L735.4 838.0Z" fill="#646464"/>
<path d="M749.1 828.8L762.9 833.6L762.9 838.3L749.1 833.5Z" fill="#636363"/>
<path d="M749.1 833.5L762.9 838.3L762.9 842.9L749.1 838.1Z" fill="#636363"/>
<path d="M749.1 838.1L762.9 842.9L762.9 847.6L749.1 842.8Z" fill="#636363"/>
<path d="M762.9 833.6L776.7 838.4L776.7 843.1L762.9 838.3Z" fill="#626262"/>
<path d="M762.9 838.3L776.7 843.1L776.7 847.7L762.9 842.9Z" fill="#626262"/>
<path d="M762.9 842.9L776.7 847.7L776.7 852.4L762.9 847.6Z" fill="#626262"/>
<path d="M776.7 838.4L790.5 843.2L790.5 847.9L776.7 843.1Z" fill="#606060"/>
<path d="M776.7 843.1L790.5 847.9L790.5 852.5L776.7 847.7Z" fill="#606060"/>
<path d="M776.7 847.7L790.5 852.5L790.5 857.2L776.7 852.4Z" fill="#606060"/>
<path d="M790.5 843.2L804.2 848.0L804.2 852.7L790.5 847.9Z" fill="#5f5f5f"/>
<path d="M790.5 847.9L804.2 852.7L804.2 857.3L790.5 852.5Z" fill="#5f5f5f"/>
<path d="M790.5 852.5L804.2 857.3L804.2 862.0L790.5 857.2Z" fill="#5f5f5f"/>
<path d="M804.2 848.0L818.0 850.5L818.0 855.2L804.2 852.7Z" fill="#5d5d5d"/>
<path d="M804.2 852.7L818.0 855.2L818.0 859.9L804.2 857.3Z" fill="#5d5d5d"/>
<path d="M804.2 857.3L818.0 859.9L818.0 864.5L804.2 862.0Z" fill="#5d5d5d"/>
<path d="M818.0 850.5L831.8 853.1L831.8 857.8L818.0 855.2Z" fill="#5a5a5a"/>
<path d="M818.0 855.2L831.8 857.8L831.8 862.4L818.0 859.9Z" fill="#5a5a5a"/>
<path d="M818.0 859.9L831.8 862.4L831.8 867.1L818.0 864.5Z" fill="#5a5a5a"/>
<path d="M831.8 853.1L845.5 855.6L845.5 860.3L831.8 857.8Z" fill="#575757"/>
<path d="M831.8 857.8L845.5 860.3L845.5 865.0L831.8 862.4Z" fill="#575757"/>
<path d="M831.8 862.4L845.5 865.0L845.5 869.6L831.8 867.1Z" fill="#575757"/>
<path d="M845.5 855.6L859.2 858.2L859.2 862.8L845.5 860.3Z" fill="#545454"/>
<path d="M845.5 860.3L859.2 862.8L859.2 867.5L845.5 865.0Z" fill="#545454"/>
<path d="M845.5 865.0L859.2 867.5L859.2 872.2L845.5 869.6Z" fill="#545454"/>
<path d="M859.2 858.2L873.0 860.7L873.0 865.4L859.2 862.8Z" fill="#515151"/>
<path d="M859.2 862.8L873.0 865.4L873.0 870.0L859.2 867.5Z" fill="#515151"/>
<path d="M859.2 867.5L873.0 870.0L873.0 874.7L859.2 872.2Z" fill="#515151"/>
<path d="M873.0 860.7L886.8 863.3L886.8 867.9L873.0 865.4Z" fill="#4e4e4e"/>
<path d="M873.0 865.4L886.8 867.9L886.8 872.6L873.0 870.0Z" fill="#4e4e4e"/>
<path d="M873.0 870.0L886.8 872.6L886.8 877.3L873.0 874.7Z" fill="#4e4e4e"/>
<path d="M886.8 863.3L900.5 865.8L900.5 870.5L886.8 867.9Z" fill="#4b4b4b"/>
<path d="M886.8 867.9L900.5 870.5L900.5 875.1L886.8 872.6Z" fill="#4b4b4b"/>
<path d="M886.8 872.6L900.5 875.1L900.5 879.8L886.8 877.3Z" fill="#4b4b4b"/>
<path d="M900.5 865.8L907.2 862.2L907.2 866.9L900.5 870.5Z" fill="#4c4c4c"/>
<path d="M900.5 870.5L907.2 866.9L907.2 871.5L900.5 875.1Z" fill="#4c4c4c"/>
<path d="M900.5 875.1L907.2 871.5L907.2 876.2L900.5 879.8Z" fill="#4c4c4c"/>
<path d="M907.2 862.2L915.3 862.7L915.3 867.3L907.2 866.9Z" fill="#545454"/>
<path d="M907.2 866.9L915.3 867.3L915.3 872.0L907.2 871.5Z" fill="#545454"/>
<path d="M907.2 871.5L915.3 872.0L915.3 876.7L907.2 876.2Z" fill="#545454"/>
<path d="M915.3 862.7L923.4 863.1L923.4 867.8L915.3 867.3Z" fill="#626262"/>
<path d="M915.3 867.3L923.4 867.8L923.4 872.4L915.3 872.0Z" fill="#626262"/>
<path d="M915.3 872.0L923.4 872.4L923.4 877.1L915.3 876.7Z" fill="#626262"/>
<path d="M923.4 863.1L936.7 863.1L936.7 867.8L923.4 867.8Z" fill="#6a6a6a"/>
<path d="M923.4 867.8L936.7 867.8L936.7 872.4L923.4 872.4Z" fill="#6a6a6a"/>
<path d="M923.4 872.4L936.7 872.4L936.7 877.1L923.4 877.1Z" fill="#6a6a6a"/>
<path d="M936.7 863.1L950.7 865.1L950.7 869.8L936.7 867.8Z" fill="#6c6c6c"/>
<path d="M936.7 867.8L950.7 869.8L950.7 874.4L936.7 872.4Z" fill="#6c6c6c"/>
<path d="M936.7 872.4L950.7 874.4L950.7 879.1L936.7 877.1Z" fill="#6c6c6c"/>
</g>
<polyline points="490.0,585.0 495.0,563.3 504.0,542.0 519.4,517.5 540.8,496.0 568.3,468.6 598.9,441.0 623.3,422.8" fill="none" stroke="#68686c" stroke-width="3" opacity="0.33" filter="url(#b1)"/>
<polyline points="623.3,422.8 653.9,401.4 684.4,381.5 715.0,363.2 745.5,347.9 776.0,334.0 806.6,320.4" fill="none" stroke="#68686c" stroke-width="3" opacity="0.22" filter="url(#b1)"/>
<polyline points="495.0,589.0 500.0,567.3 509.0,546.0 524.4,521.5 545.8,500.0 573.3,472.6 603.9,445.0 628.3,426.8 658.9,405.4" fill="none" stroke="#95959a" stroke-width="5" opacity="0.3" filter="url(#b3)"/>
</g>
<g stroke="#0c0c0c" stroke-width="1" fill="none" stroke-linejoin="round" shape-rendering="crispEdges" opacity="0.74">
<polyline points="1118.3,288.3 1271.2,299.8 1449.6,314.2 1535.8,323.7 1605.6,327.3 1610.6,329.9 1615.4,330.3"/>
<polyline points="1060.7,320.8 1226.2,334.2 1410.4,351.7 1489.2,362.0 1553.3,372.0 1558.6,373.3 1563.7,374.2 1610.6,375.0 1617.4,374.2"/>
<polyline points="1003.0,354.0 1176.8,369.2 1368.2,390.5 1491.5,408.3 1499.3,410.2 1510.3,411.2 1597.3,414.2 1610.2,415.2"/>
<polyline points="924.5,407.0 1099.4,426.4 1297.5,451.2 1399.2,469.3 1408.2,472.0 1417.0,472.3 1567.3,474.2 1585.4,473.8"/>
<polyline points="828.0,473.2 1004.2,497.0 1204.2,527.0 1274.3,544.4 1283.6,548.2 1300.2,548.3 1512.5,556.2 1547.4,556.0"/>
<polyline points="756.5,537.2 922.5,566.2 1120.0,594.3 1161.3,608.0 1175.0,612.2 1187.2,612.2 1465.8,627.3 1509.5,628.5"/>
<polyline points="709.5,584.5 864.2,615.5 1049.4,651.2 1077.3,660.3 1092.9,665.2 1118.4,666.4 1430.2,673.1 1477.4,677.5"/>
<polyline points="675.2,637.5 818.0,672.5 987.4,715.4 1002.5,720.3 1020.0,725.1 1056.8,729.4 1393.8,732.0 1445.4,733.2"/>
<polyline points="665.2,663.8 809.5,701.0 967.4,742.1 972.6,743.2 989.4,748.0 1008.0,746.7"/>
<polyline points="662.5,689.2 804.2,728.2 948.3,765.9 952.6,770.1 969.3,774.3 987.4,776.2"/>
<polyline points="659.5,738.2 801.2,781.2 918.5,812.3 925.2,812.0 940.0,816.2 958.2,819.7"/>
<polyline points="666.5,800.0 804.2,848.0 900.5,865.8 907.2,862.2 923.4,863.1 936.7,863.1"/>
<polyline points="1118.3,288.3 1060.7,320.8 1003.0,354.0 924.5,407.0 828.0,473.2 756.5,537.2 709.5,584.5 675.2,637.5 665.2,663.8 662.5,689.2 659.5,738.2 666.5,800.0"/>
<polyline points="1271.2,299.8 1226.2,334.2 1176.8,369.2 1099.4,426.4 1004.2,497.0 922.5,566.2 864.2,615.5 818.0,672.5 809.5,701.0 804.2,728.2 801.2,781.2 804.2,848.0"/>
<polyline points="1449.6,314.2 1410.4,351.7 1368.2,390.5 1297.5,451.2 1204.2,527.0 1120.0,594.3 1049.4,651.2 987.4,715.4 967.4,742.1 948.3,765.9 918.5,812.3 900.5,865.8"/>
<polyline points="1535.8,323.7 1489.2,362.0"/>
<polyline points="1605.6,327.3 1553.3,372.0 1491.5,408.3 1399.2,469.3 1274.3,544.4 1161.3,608.0 1077.3,660.3 1002.5,720.3 972.6,743.2 952.6,770.1 925.2,812.0 907.2,862.2"/>
<polyline points="1610.6,329.9 1558.6,373.3 1499.3,410.2 1408.2,472.0 1283.6,548.2 1175.0,612.2 1092.9,665.2 1020.0,725.1 989.4,748.0 969.3,774.3 940.0,816.2 923.4,863.1"/>
<polyline points="1615.4,330.3 1563.7,374.2 1510.3,411.2 1417.0,472.3 1300.2,548.3 1187.2,612.2 1118.4,666.4 1056.8,729.4 1008.0,746.7 987.4,776.2 958.2,819.7 936.7,863.1"/>
<polyline points="1615.4,330.3 1610.6,375.0 1597.3,414.2 1567.3,474.2 1512.5,556.2 1465.8,627.3 1430.2,673.1 1393.8,732.0"/>
<polyline points="1615.4,330.3 1617.4,374.2 1610.2,415.2 1585.4,473.8 1547.4,556.0 1509.5,628.5 1477.4,677.5 1445.4,733.2"/>
</g>
<g fill="#000">
<rect x="1116.9" y="286.9" width="2.8" height="2.8" rx="0.7"/>
<rect x="1269.8" y="298.4" width="2.8" height="2.8" rx="0.7"/>
<rect x="1448.2" y="312.8" width="2.8" height="2.8" rx="0.7"/>
<rect x="1604.2" y="325.9" width="2.8" height="2.8" rx="0.7"/>
<rect x="1609.2" y="328.5" width="2.8" height="2.8" rx="0.7"/>
<rect x="1614.0" y="328.9" width="2.8" height="2.8" rx="0.7"/>
<rect x="1059.3" y="319.4" width="2.8" height="2.8" rx="0.7"/>
<rect x="1224.8" y="332.9" width="2.8" height="2.8" rx="0.7"/>
<rect x="1409.0" y="350.3" width="2.8" height="2.8" rx="0.7"/>
<rect x="1551.9" y="370.6" width="2.8" height="2.8" rx="0.7"/>
<rect x="1557.2" y="371.9" width="2.8" height="2.8" rx="0.7"/>
<rect x="1562.3" y="372.8" width="2.8" height="2.8" rx="0.7"/>
<rect x="1609.2" y="373.6" width="2.8" height="2.8" rx="0.7"/>
<rect x="1616.0" y="372.8" width="2.8" height="2.8" rx="0.7"/>
<rect x="1001.6" y="352.6" width="2.8" height="2.8" rx="0.7"/>
<rect x="1175.3" y="367.9" width="2.8" height="2.8" rx="0.7"/>
<rect x="1366.8" y="389.1" width="2.8" height="2.8" rx="0.7"/>
<rect x="1490.1" y="406.9" width="2.8" height="2.8" rx="0.7"/>
<rect x="1497.9" y="408.8" width="2.8" height="2.8" rx="0.7"/>
<rect x="1508.9" y="409.8" width="2.8" height="2.8" rx="0.7"/>
<rect x="1595.9" y="412.8" width="2.8" height="2.8" rx="0.7"/>
<rect x="1608.8" y="413.8" width="2.8" height="2.8" rx="0.7"/>
<rect x="923.1" y="405.6" width="2.8" height="2.8" rx="0.7"/>
<rect x="1098.0" y="425.0" width="2.8" height="2.8" rx="0.7"/>
<rect x="1296.1" y="449.9" width="2.8" height="2.8" rx="0.7"/>
<rect x="1397.8" y="467.9" width="2.8" height="2.8" rx="0.7"/>
<rect x="1406.8" y="470.6" width="2.8" height="2.8" rx="0.7"/>
<rect x="1415.6" y="470.9" width="2.8" height="2.8" rx="0.7"/>
<rect x="1565.9" y="472.8" width="2.8" height="2.8" rx="0.7"/>
<rect x="1584.0" y="472.4" width="2.8" height="2.8" rx="0.7"/>
<rect x="826.6" y="471.9" width="2.8" height="2.8" rx="0.7"/>
<rect x="1002.9" y="495.6" width="2.8" height="2.8" rx="0.7"/>
<rect x="1202.8" y="525.6" width="2.8" height="2.8" rx="0.7"/>
<rect x="1272.9" y="543.0" width="2.8" height="2.8" rx="0.7"/>
<rect x="1282.2" y="546.8" width="2.8" height="2.8" rx="0.7"/>
<rect x="1298.8" y="546.9" width="2.8" height="2.8" rx="0.7"/>
<rect x="1511.1" y="554.8" width="2.8" height="2.8" rx="0.7"/>
<rect x="1546.0" y="554.6" width="2.8" height="2.8" rx="0.7"/>
<rect x="755.1" y="535.9" width="2.8" height="2.8" rx="0.7"/>
<rect x="921.1" y="564.9" width="2.8" height="2.8" rx="0.7"/>
<rect x="1118.6" y="592.9" width="2.8" height="2.8" rx="0.7"/>
<rect x="1159.9" y="606.6" width="2.8" height="2.8" rx="0.7"/>
<rect x="1173.6" y="610.8" width="2.8" height="2.8" rx="0.7"/>
<rect x="1185.8" y="610.8" width="2.8" height="2.8" rx="0.7"/>
<rect x="1464.4" y="625.9" width="2.8" height="2.8" rx="0.7"/>
<rect x="1508.1" y="627.1" width="2.8" height="2.8" rx="0.7"/>
<rect x="708.1" y="583.1" width="2.8" height="2.8" rx="0.7"/>
<rect x="862.9" y="614.1" width="2.8" height="2.8" rx="0.7"/>
<rect x="1048.0" y="649.9" width="2.8" height="2.8" rx="0.7"/>
<rect x="1075.9" y="658.9" width="2.8" height="2.8" rx="0.7"/>
<rect x="1091.5" y="663.8" width="2.8" height="2.8" rx="0.7"/>
<rect x="1117.0" y="665.0" width="2.8" height="2.8" rx="0.7"/>
<rect x="1428.8" y="671.7" width="2.8" height="2.8" rx="0.7"/>
<rect x="1476.0" y="676.1" width="2.8" height="2.8" rx="0.7"/>
<rect x="673.9" y="636.1" width="2.8" height="2.8" rx="0.7"/>
<rect x="816.6" y="671.1" width="2.8" height="2.8" rx="0.7"/>
<rect x="986.0" y="714.0" width="2.8" height="2.8" rx="0.7"/>
<rect x="1001.1" y="718.9" width="2.8" height="2.8" rx="0.7"/>
<rect x="1018.6" y="723.7" width="2.8" height="2.8" rx="0.7"/>
<rect x="1055.4" y="728.0" width="2.8" height="2.8" rx="0.7"/>
<rect x="1392.3" y="730.6" width="2.8" height="2.8" rx="0.7"/>
<rect x="1444.0" y="731.8" width="2.8" height="2.8" rx="0.7"/>
<rect x="663.9" y="662.4" width="2.8" height="2.8" rx="0.7"/>
<rect x="808.1" y="699.6" width="2.8" height="2.8" rx="0.7"/>
<rect x="966.0" y="740.7" width="2.8" height="2.8" rx="0.7"/>
<rect x="971.2" y="741.8" width="2.8" height="2.8" rx="0.7"/>
<rect x="988.0" y="746.6" width="2.8" height="2.8" rx="0.7"/>
<rect x="1006.6" y="745.3" width="2.8" height="2.8" rx="0.7"/>
<rect x="661.1" y="687.9" width="2.8" height="2.8" rx="0.7"/>
<rect x="802.9" y="726.9" width="2.8" height="2.8" rx="0.7"/>
<rect x="946.9" y="764.5" width="2.8" height="2.8" rx="0.7"/>
<rect x="951.2" y="768.7" width="2.8" height="2.8" rx="0.7"/>
<rect x="967.9" y="772.9" width="2.8" height="2.8" rx="0.7"/>
<rect x="986.0" y="774.8" width="2.8" height="2.8" rx="0.7"/>
<rect x="658.1" y="736.9" width="2.8" height="2.8" rx="0.7"/>
<rect x="799.9" y="779.9" width="2.8" height="2.8" rx="0.7"/>
<rect x="917.1" y="810.9" width="2.8" height="2.8" rx="0.7"/>
<rect x="923.8" y="810.6" width="2.8" height="2.8" rx="0.7"/>
<rect x="938.6" y="814.8" width="2.8" height="2.8" rx="0.7"/>
<rect x="956.8" y="818.3" width="2.8" height="2.8" rx="0.7"/>
<rect x="665.1" y="798.6" width="2.8" height="2.8" rx="0.7"/>
<rect x="802.9" y="846.6" width="2.8" height="2.8" rx="0.7"/>
<rect x="899.1" y="864.4" width="2.8" height="2.8" rx="0.7"/>
<rect x="905.8" y="860.8" width="2.8" height="2.8" rx="0.7"/>
<rect x="922.0" y="861.7" width="2.8" height="2.8" rx="0.7"/>
<rect x="935.3" y="861.7" width="2.8" height="2.8" rx="0.7"/>
</g>
<circle cx="1296.4" cy="357.6" r="2.9" fill="#dea050" stroke="#1c1c1c" stroke-width="1"/>
<g fill="none" stroke-width="1">
<circle cx="1118.4" cy="288.4" r="10.5" stroke="#fff"/>
<circle cx="1118.4" cy="288.4" r="10.5" stroke="#e01010" stroke-dasharray="4 4"/>
<g stroke="#000" shape-rendering="crispEdges"><line x1="1118.4" y1="268.5" x2="1118.4" y2="283.5"/><line x1="1118.4" y1="293.5" x2="1118.4" y2="308.5"/><line x1="1098" y1="288.4" x2="1113" y2="288.4"/><line x1="1124" y1="288.4" x2="1139" y2="288.4"/></g>
</g>
</g>
<rect x="0" y="56" width="1" height="950" fill="#5e5e5e"/>
<rect x="0" y="56" width="1920" height="1" fill="#555"/>
<rect x="0" y="1005" width="1920" height="1" fill="#2a2a2a"/>
<path d="M1 77.3H9.5a3.5 3.5 0 0 1 3.5 3.5v7.4a3.5 3.5 0 0 1 -3.5 3.5H1z" fill="#2a2a2a"/>
<rect x="1906.5" y="77.3" width="20" height="14.4" rx="3.5" fill="#2a2a2a"/>
<path d="M3 85h6M6 82v6" stroke="#888" stroke-width="2" fill="none"/>
<path d="M1910 85h6M1913 82v6" stroke="#888" stroke-width="2" fill="none"/>
<g stroke-width="2" fill="none">
<line x1="26" y1="980" x2="46.5" y2="983.7" stroke="#dc0000"/>
<line x1="26" y1="980" x2="38.7" y2="973" stroke="#00dc00"/>
<line x1="26" y1="980" x2="26" y2="956" stroke="#0000dc"/>
</g>
</svg>
<span class="v" style="left:19.7px;top:67px;letter-spacing:-0.68px">User Persp</span>
<span class="v" style="left:70px;top:986px;letter-spacing:-0.467px">(15) Cube</span>
<span class="v" style="left:50px;top:972px;color:#b40000">x</span>
<span class="v" style="left:42px;top:961px;color:#00a800">y</span>
<span class="v" style="left:28px;top:944px;color:#0000c8">z</span>
</body></html>
